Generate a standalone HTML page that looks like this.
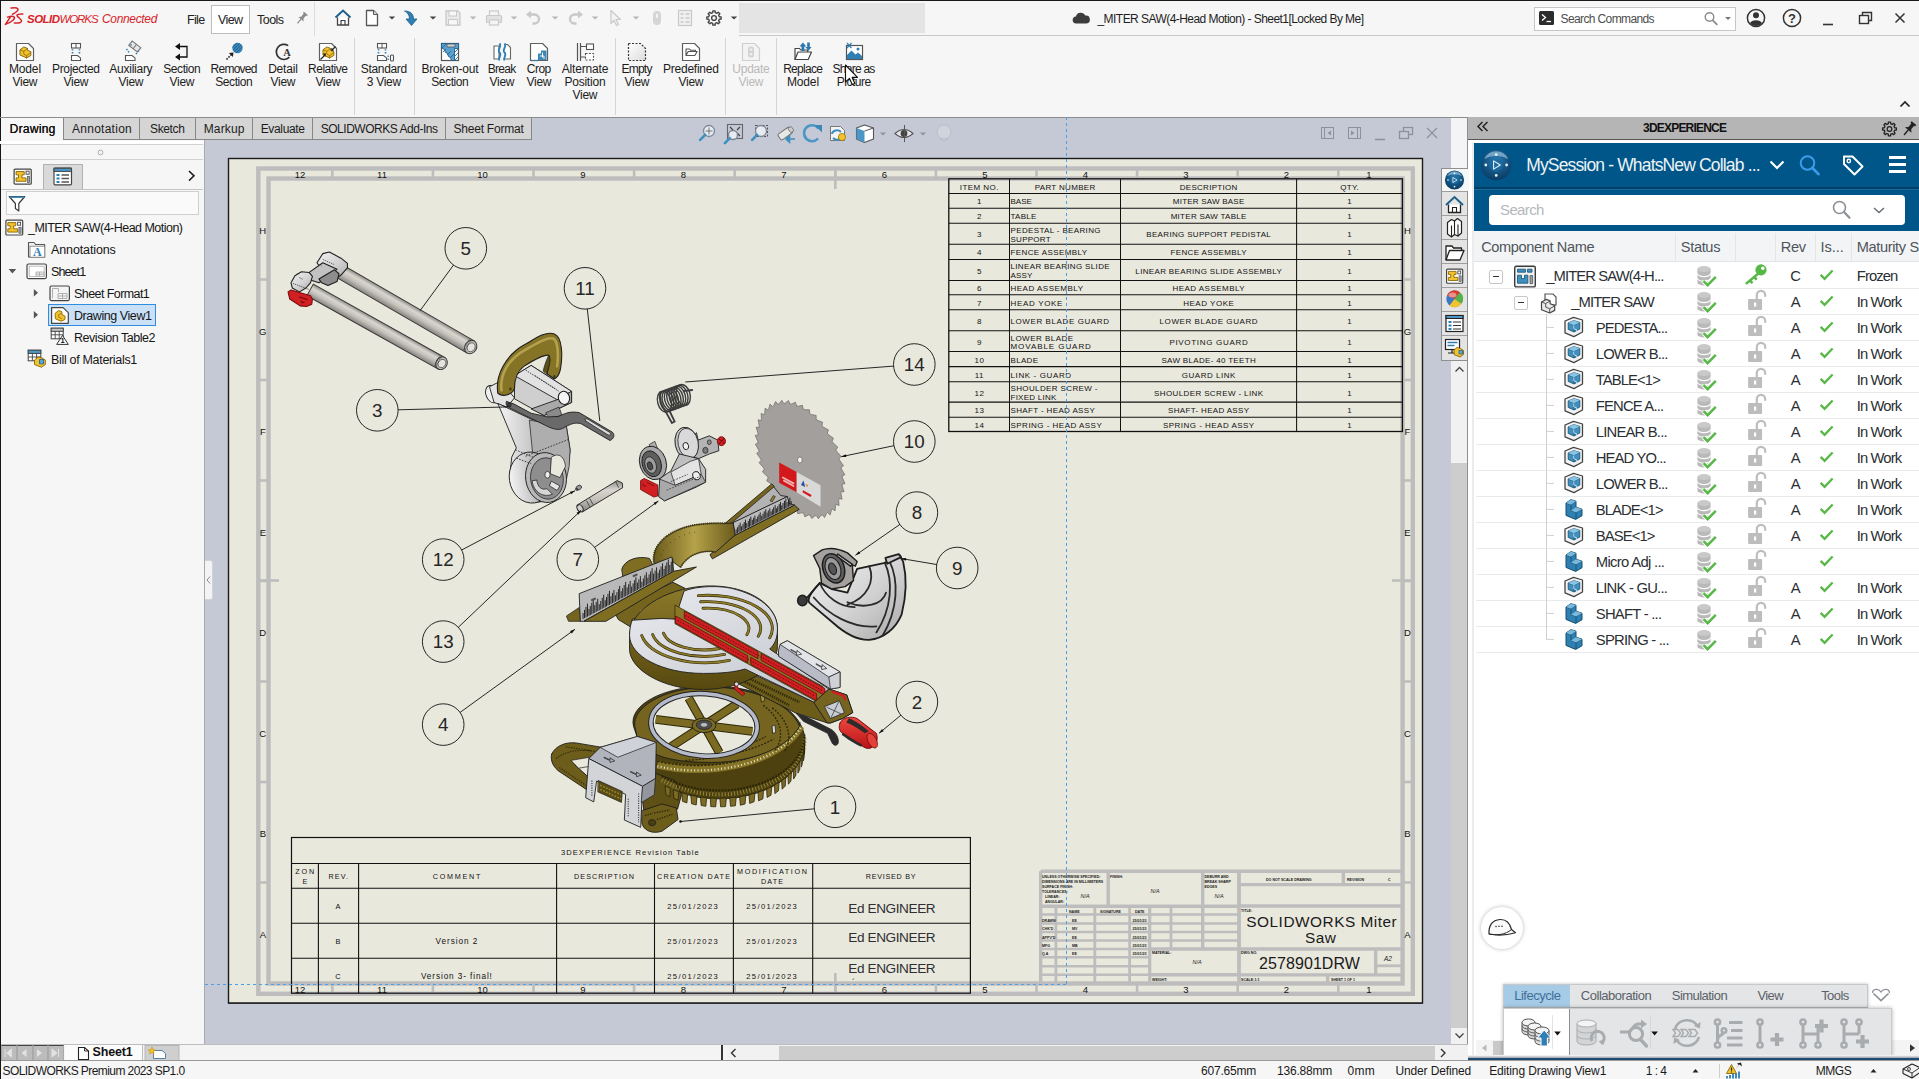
<!DOCTYPE html>
<html lang="en"><head><meta charset="utf-8"><title>SOLIDWORKS Connected - _MITER SAW(4-Head Motion) - Sheet1</title>
<style>
html,body{margin:0;padding:0;}
body{width:1919px;height:1079px;overflow:hidden;position:relative;background:#f6f6f6;font-family:"Liberation Sans",sans-serif;font-size:12px;color:#000;}
.b{position:absolute;box-sizing:border-box;display:block;}
.t{position:absolute;white-space:nowrap;}
svg{overflow:visible;}
svg text{font-family:"Liberation Sans",sans-serif;}
</style></head>
<body>
<!-- skel -->
<div class="b" style="left:205px;top:117px;width:1263px;height:928px;background:#c4c9d5;"></div>
<div class="b" style="left:0px;top:0px;width:1919px;height:117px;background:#f6f6f6;"></div>
<div class="b" style="left:0px;top:0px;width:1919px;height:1px;background:#1a1a1a;"></div>
<div class="b" style="left:0px;top:140px;width:205px;height:904px;background:#f6f6f6;border-right:1px solid #a9a9a9;"></div>
<div class="b" style="left:0px;top:1061px;width:1919px;height:18px;background:#f1f1f1;border-top:1px solid #d9d9d9;"></div>
<div class="b" style="left:0px;top:1044px;width:1468px;height:17px;background:#f1f1f1;border-top:1px solid #bdbdbd;"></div>
<div class="b" style="left:1468px;top:117px;width:451px;height:943px;background:#ffffff;"></div>
<div class="b" style="left:0px;top:0px;width:1px;height:1079px;background:#161616;"></div>
<!-- top -->
<svg class="b" style="left:0px;top:0px;" width="320" height="36" viewBox="0 0 320 36"><path transform="translate(0,0.8)" d="M11.1,7.3 C14,6.8 17,7 17.9,8.1 C18.8,9.3 16.5,11.6 12.5,13.4 M7.5,16.3 C10,15.6 13,15.2 14.2,16.2 C15.6,17.6 12.5,21 5.4,23.6 L10.4,16.2 M22.8,13.3 C20.500,13.2 17.6,13.3 17,14.4 C16.500,15.6 21.500,18.600 21.600,20.100 C21.700,22 19,22.2 14.4,22.1" fill="none" stroke="#d9232b" stroke-width="1.5" stroke-linecap="round" stroke-linejoin="round"/><text x="27.00" y="22.60" font-size="11.5" fill="#d9232b" font-weight="700" font-style="italic" letter-spacing="-0.528">SOLID</text><text x="59.50" y="22.60" font-size="11.5" fill="#d9232b" font-style="italic" letter-spacing="-1.089">WORKS</text><text x="102.00" y="22.60" font-size="12" fill="#d9232b" font-style="italic" letter-spacing="-0.338">Connected</text><g transform="translate(302,18) rotate(40)"><path d="M-2.5,-6 h5 v1.5 h-1 v4 l2,2 h-7 l2,-2 v-4 h-1 z" fill="#8a8a8a"/><path d="M0,1.5 v5.5" stroke="#8a8a8a" stroke-width="1.2"/></g></svg>
<div class="t" style="left:187.00px;top:11.60px;font-size:12.5px;line-height:16px;color:#222;letter-spacing:-0.661px;">File</div>
<div class="b" style="left:211px;top:5px;width:39px;height:29px;background:#fff;border:1px solid #bdbdbd;"></div>
<div class="t" style="left:218.00px;top:11.60px;font-size:12.5px;line-height:16px;color:#222;letter-spacing:-0.592px;">View</div>
<div class="t" style="left:257.00px;top:11.60px;font-size:12.5px;line-height:16px;color:#222;letter-spacing:-0.536px;">Tools</div>
<div class="b" style="left:314px;top:2px;width:1px;height:34px;background:#dcdcdc;"></div>
<svg class="b" style="left:0px;top:0px;" width="760" height="36" viewBox="0 0 760 36"><g transform="translate(343,18)"><path d="M-7.5,-0.5 l7.5,-7 l7.5,7" fill="none" stroke="#1f5f8b" stroke-width="2" stroke-linejoin="miter"/><path d="M-5.5,-0.5 v7.5 h11 v-7.5" fill="#fff" stroke="#444" stroke-width="1.3"/><path d="M-2,7 v-4.5 h4 v4.5" fill="none" stroke="#444" stroke-width="1.2"/></g><g transform="translate(372,18)"><path d="M-5.5,-7.5 h7 l4,4 v11 h-11 z" fill="#fff" stroke="#555" stroke-width="1.3" stroke-linejoin="round"/><path d="M1.5,-7.5 v4 h4" fill="#ddd" stroke="#555" stroke-width="1"/></g><path d="M388.8,16.4 h6.4 l-3.2,3.2 z" fill="#444"/><g transform="translate(411,18)"><path d="M-6.5,-7 c6,0 9,3 9,8 h3.5 l-5.5,6.5 l-5.5,-6.5 h3.5 c0,-4 -2,-6.5 -5,-8 z" fill="#2f7fb3" stroke="#1d5f8e" stroke-width="0.8" stroke-linejoin="round"/></g><path d="M429.8,16.4 h6.4 l-3.2,3.2 z" fill="#444"/><g transform="translate(453,18)"><path d="M-7,-7 h12 l2,2 v12 h-14 z" fill="#e9e9e9" stroke="#c9c9c9" stroke-width="1.3"/><rect x="-4" y="-7" width="7.5" height="5" fill="#f7f7f7" stroke="#c9c9c9"/><rect x="-4.5" y="1.5" width="9" height="5.5" fill="#f7f7f7" stroke="#c9c9c9"/></g><path d="M469.8,16.4 h6.4 l-3.2,3.2 z" fill="#b5b5b5"/><g transform="translate(494,18)"><rect x="-4.5" y="-7" width="9" height="5" fill="#f4f4f4" stroke="#c9c9c9" stroke-width="1.2"/><rect x="-7.5" y="-2.5" width="15" height="7" rx="1" fill="#e2e2e2" stroke="#c9c9c9" stroke-width="1.2"/><rect x="-4.5" y="2" width="9" height="5" fill="#f4f4f4" stroke="#c9c9c9" stroke-width="1.2"/></g><path d="M510.8,16.4 h6.4 l-3.2,3.2 z" fill="#b5b5b5"/><g transform="translate(534,18)"><path d="M-6,-3.5 h6.5 a4.5,4.5 0 0 1 0,9 h-2" fill="none" stroke="#c9c9c9" stroke-width="2.4"/><path d="M-8,-3.5 l5,-4 v8 z" fill="#c9c9c9"/></g><path d="M551.8,16.4 h6.4 l-3.2,3.2 z" fill="#b5b5b5"/><g transform="translate(575,18)"><path d="M6,-3.5 h-6.5 a4.5,4.5 0 0 0 0,9 h2" fill="none" stroke="#c9c9c9" stroke-width="2.4"/><path d="M8,-3.5 l-5,-4 v8 z" fill="#c9c9c9"/></g><path d="M591.8,16.4 h6.4 l-3.2,3.2 z" fill="#b5b5b5"/><g transform="translate(615,18)"><path d="M-4,-7.5 v13 l3,-3 l2.5,5 l2,-1 l-2.5,-5 h4.5 z" fill="#f2f2f2" stroke="#c9c9c9" stroke-width="1.2" stroke-linejoin="round"/></g><path d="M632.8,16.4 h6.4 l-3.2,3.2 z" fill="#b5b5b5"/><g transform="translate(657,18)"><rect x="-4" y="-7" width="8" height="14" rx="4" fill="#d5d5d5"/><rect x="-1" y="-4.5" width="2" height="4.5" rx="1" fill="#f3f3f3"/></g><g transform="translate(685,18)"><rect x="-6.5" y="-7.5" width="13" height="15" fill="#f0f0f0" stroke="#c9c9c9" stroke-width="1.2"/><path d="M-4.5,-4 h3 M-4.5,0 h3 M-4.5,4 h3 M0.5,-4 h4 M0.5,0 h4 M0.5,4 h4" stroke="#c9c9c9" stroke-width="1.6"/></g><g transform="translate(714,18)"><polygon points="7.11,-1.15 7.11,1.15 5.33,1.25 4.65,2.89 5.84,4.22 4.22,5.84 2.89,4.65 1.25,5.33 1.15,7.11 -1.15,7.11 -1.25,5.33 -2.89,4.65 -4.22,5.84 -5.84,4.22 -4.65,2.89 -5.33,1.25 -7.11,1.15 -7.11,-1.15 -5.33,-1.25 -4.65,-2.89 -5.84,-4.22 -4.22,-5.84 -2.89,-4.65 -1.25,-5.33 -1.15,-7.11 1.15,-7.11 1.25,-5.33 2.89,-4.65 4.22,-5.84 5.84,-4.22 4.65,-2.89 5.33,-1.25" fill="none" stroke="#444" stroke-width="1.4" stroke-linejoin="round"/><circle r="2.38" fill="none" stroke="#444" stroke-width="1.4"/></g><path d="M730.8,16.4 h6.4 l-3.2,3.2 z" fill="#444"/></svg>
<div class="b" style="left:739px;top:3px;width:186px;height:30px;background:#e4e4e4;"></div>
<div class="b" style="left:739px;top:35px;width:1180px;height:1px;background:#c9c9c9;"></div>
<svg class="b" style="left:1070px;top:8px;" width="24" height="20" viewBox="0 0 24 20"><path d="M5.5,15.5 a3.6,3.6 0 0 1 0.4,-7.1 a5,5 0 0 1 9.4,-0.8 a3.9,3.9 0 0 1 1.2,7.9 z" fill="#3c3c3c"/></svg>
<div class="t" style="left:1097.50px;top:11.40px;font-size:12px;line-height:16px;color:#1e1e1e;letter-spacing:-0.549px;">_MITER SAW(4-Head Motion) - Sheet1[Locked By Me]</div>
<div class="b" style="left:1534px;top:7px;width:202px;height:24px;background:#fff;border:1px solid #c6c6c6;"></div>
<svg class="b" style="left:1539px;top:11px;" width="16" height="15" viewBox="0 0 16 15"><rect x="0" y="0" width="15" height="14" rx="1.5" fill="#2c2c2c"/><path d="M3,3.5 l3.5,3 l-3.5,3" fill="none" stroke="#fff" stroke-width="1.3"/><path d="M7.5,10.5 h4.5" stroke="#fff" stroke-width="1.3"/></svg>
<div class="t" style="left:1560.50px;top:11.20px;font-size:12px;line-height:16px;color:#4d4d4d;letter-spacing:-0.614px;">Search Commands</div>
<svg class="b" style="left:1700px;top:8px;" width="40" height="22" viewBox="0 0 40 22"><circle cx="9.5" cy="9" r="4.3" fill="none" stroke="#8b8b8b" stroke-width="1.4"/><path d="M12.8,12.3 l4,4" stroke="#8b8b8b" stroke-width="1.8" stroke-linecap="round"/><path d="M25,9.0 h6 l-3,3 z" fill="#777"/></svg>
<svg class="b" style="left:1744px;top:6px;" width="170" height="26" viewBox="0 0 170 26"><circle cx="12" cy="12" r="8.6" fill="none" stroke="#333" stroke-width="1.5"/><circle cx="12" cy="9.3" r="3" fill="#333"/><path d="M6,17.2 c1,-4 11,-4 12,0 c-3,3.6 -9,3.6 -12,0z" fill="#333"/><circle cx="48" cy="12" r="8.6" fill="none" stroke="#333" stroke-width="1.5"/><text x="48.00" y="16.60" font-size="13" fill="#333" text-anchor="middle" font-weight="700">?</text><path d="M79,18.5 h10" stroke="#333" stroke-width="1.6"/><path d="M118.5,9.5 v-3 h9 v8 h-3" fill="none" stroke="#333" stroke-width="1.4"/><rect x="115.5" y="9.5" width="9" height="8" fill="none" stroke="#333" stroke-width="1.4"/><path d="M151.5,7.5 l9,9 M160.5,7.5 l-9,9" stroke="#333" stroke-width="1.5"/></svg>
<div class="b" style="left:354px;top:38px;width:1px;height:77px;background:#d4d4d4;"></div>
<div class="b" style="left:414px;top:38px;width:1px;height:77px;background:#d4d4d4;"></div>
<div class="b" style="left:615px;top:38px;width:1px;height:77px;background:#d4d4d4;"></div>
<div class="b" style="left:725px;top:38px;width:1px;height:77px;background:#d4d4d4;"></div>
<div class="b" style="left:776px;top:38px;width:1px;height:77px;background:#d4d4d4;"></div>
<svg class="b" style="left:0px;top:0px;" width="900" height="116" viewBox="0 0 900 116"><g transform="translate(13,40)"><path d="M3.5,3.5 h12 l5,5 v12 h-17 z" fill="#fff" stroke="#5f5f5f" stroke-width="1.2" stroke-linejoin="round"/><g transform="translate(6,6) scale(0.95)"><path d="M1,4 l4,-3 l4,1.5 v2 l3.5,1.5 v4 l-4.5,2.5 l-7,-3 z" fill="#f2c12e" stroke="#7a5a00" stroke-width="0.9" stroke-linejoin="round"/><path d="M1,4 l4,1.6 l4,-3 M5,5.6 v3 l3,1.5 l4.5,-3 M8,10 v3.4" fill="none" stroke="#7a5a00" stroke-width="0.7"/></g></g><g transform="translate(64,40)"><rect x="7.5" y="3.5" width="9" height="4.5" fill="#fff" stroke="#555" stroke-width="1.1"/><path d="M12,3.5v4.5" stroke="#555" stroke-width="1"/><path d="M8.5,9.2v4.6 M15.5,9.2v4.6" stroke="#2f7fb3" stroke-width="1.6" stroke-dasharray="1.4,1.4"/><path d="M7.5,15.5 h6 l3,2.4 v2.6 h-9 z" fill="#fff" stroke="#555" stroke-width="1.1"/></g><g transform="translate(119,40)"><g transform="rotate(38 14 8)"><rect x="9" y="3" width="11" height="5.5" fill="#e6e6e6" stroke="#777" stroke-width="1.1"/><path d="M14.5,3v5.5" stroke="#777"/></g><path d="M7.5,9 l3,4 M12.5,5.5 l-1.3,-1.6 M17,14 l2.5,-3" stroke="#2f7fb3" stroke-width="1.6" stroke-dasharray="1.4,1.4"/><path d="M6.5,15.5 h6.5 l3,2.4 v2.6 h-9.5 z" fill="#fff" stroke="#555" stroke-width="1.1"/></g><g transform="translate(170,40)"><path d="M9,6.5 h8 v10.5 h-8" fill="none" stroke="#111" stroke-width="1.3"/><path d="M5,6.5 l5,-3.6 v7.2 z M5,17 l5,-3.6 v7.2 z" fill="#111"/></g><g transform="translate(222,40)"><defs><clipPath id="rsc"><circle cx="15.5" cy="8" r="5.2"/></clipPath></defs><circle cx="15.5" cy="8" r="5.2" fill="#3d86b8"/><g clip-path="url(#rsc)" stroke="#1d5f8e" stroke-width="0.9"><path d="M8,10 l10,-10 M8,13 l13,-13 M10,14 l12,-12 M13,14 l10,-10 M8,7 l7,-7"/></g><path d="M4.5,19.5 l5,-5" stroke="#222" stroke-width="1.6" stroke-dasharray="1.6,1.2"/><path d="M11.5,12.5 l-4.6,0.6 l4,4 z" fill="#222"/></g><g transform="translate(271,40)"><path d="M17.2,5.6 a7.6,7.6 0 1 0 1.2,11.6" fill="none" stroke="#333" stroke-width="1.7"/><text x="12.2" y="16" font-size="10.5" font-weight="700" fill="#333" style="font-family:'Liberation Serif',serif">A</text></g><g transform="translate(316,40)"><path d="M3.5,3.5 h12 l5,5 v12 h-17 z" fill="#fff" stroke="#5f5f5f" stroke-width="1.2" stroke-linejoin="round"/><g transform="translate(6,6) scale(0.95)"><path d="M1,4 l4,-3 l4,1.5 v2 l3.5,1.5 v4 l-4.5,2.5 l-7,-3 z" fill="#f2c12e" stroke="#7a5a00" stroke-width="0.9" stroke-linejoin="round"/><path d="M1,4 l4,1.6 l4,-3 M5,5.6 v3 l3,1.5 l4.5,-3 M8,10 v3.4" fill="none" stroke="#7a5a00" stroke-width="0.7"/></g><path d="M4.5,19.5 l4.5,-4.5 M19.5,6.5 l-3.5,3.5" stroke="#222" stroke-width="1.2"/><path d="M10,13.2 l-3.2,0.6 l2.7,2.7 z M15,11 l3.2,-0.6 l-2.7,-2.7 z" fill="#222"/></g><g transform="translate(372,40)"><rect x="5.5" y="3.5" width="9" height="4.5" fill="#fff" stroke="#555" stroke-width="1.1"/><path d="M10,3.5v4.5" stroke="#555"/><path d="M6.5,9.2v4.4 M13.5,9.2v4.4" stroke="#2f7fb3" stroke-width="1.6" stroke-dasharray="1.4,1.4"/><path d="M5.5,15.5 h6 l3,2.4 v2.6 h-9 z" fill="#fff" stroke="#555" stroke-width="1.1"/><path d="M15.5,16.2h2.4 M15.5,19.2h2.4" stroke="#2f7fb3" stroke-width="1.6" stroke-dasharray="1.3,1.1"/><rect x="18.5" y="15" width="3" height="6" rx="1" fill="#fff" stroke="#555" stroke-width="1.1"/></g><g transform="translate(438,40)"><rect x="3.5" y="3.5" width="17" height="17" fill="#fff" stroke="#555" stroke-width="1.2"/><path d="M3.5,3.5 h17 v5 h-4 v12 h-3 l-1,-3 l-2,-1 l-1,-3 l-2,-1 l-1,-3 l-2,-1 l-1,-2 z" fill="#58a0cf" stroke="#1d5f8e" stroke-width="0.9"/><path d="M9,4 h8 v3 h-8z" fill="#c9d3da" stroke="#555" stroke-width="0.8"/><path d="M4,8 l4,-4 M5,12 l3,-3 M9,15 l4,-4 M12,18 l4,-4 M17,12 l3,-3 M17,16 l3,-3 M17,20 l3,-3" stroke="#1d5f8e" stroke-width="0.8"/></g><g transform="translate(490,40)"><path d="M4,6 h5 v13 h-5 z M15,4.5 h2.5 l3,3 v11.5 h-5.5" fill="#fff" stroke="#666" stroke-width="1.1"/><path d="M9.5,3.5 c3,3 -3,6 0,9 c3,3 -2,5 0,8 M14.5,3.5 c3,3 -3,6 0,9 c3,3 -2,5 0,8" fill="none" stroke="#2f7fb3" stroke-width="1.8"/></g><g transform="translate(527,40)"><path d="M3.5,3.5 h12 l5,5 v12 h-17 z" fill="#fff" stroke="#5f5f5f" stroke-width="1.2" stroke-linejoin="round"/><path d="M4,20.5h7" stroke="#2f7fb3" stroke-width="1.6" stroke-dasharray="1.6,1.2"/><path d="M11,20 v-6.5 h3 v-3 h5.5 v9.5 z" fill="#3d86b8"/><path d="M13,16h4v3 M15.5,12.5v5" stroke="#fff" stroke-width="0.9" fill="none"/></g><g transform="translate(573,40)"><path d="M4.5,3 v18 M7.5,3 v18" stroke="#555" stroke-width="1.2"/><path d="M7.5,6.5 h6 M7.5,17 h5" stroke="#555" stroke-width="1.2"/><rect x="13.5" y="4" width="7" height="5.5" fill="#fff" stroke="#555" stroke-width="1.1"/><rect x="12.5" y="13.5" width="8" height="6.5" fill="#fff" stroke="#555" stroke-width="1.1" stroke-dasharray="2,1.4"/></g><g transform="translate(625,40)"><defs><linearGradient id="evg" x1="0" y1="0" x2="1" y2="1"><stop offset="0" stop-color="#fff"/><stop offset="1" stop-color="#dcdcdc"/></linearGradient></defs><path d="M3.5,3.5 h12 l5,5 v12 h-17 z" fill="url(#evg)" stroke="#333" stroke-width="1.2" stroke-dasharray="2,1.5" stroke-linejoin="round"/></g><g transform="translate(679,40)"><path d="M3.5,3.5 h12 l5,5 v12 h-17 z" fill="#fff" stroke="#5f5f5f" stroke-width="1.2" stroke-linejoin="round"/><path d="M7,15.5 v-6.5 h3.5 l1,1.2 h5 v1.3 M7,15.5 l2.2,-4 h9 l-2.4,4 z" fill="#fff" stroke="#555" stroke-width="1.1" stroke-linejoin="round"/></g><g transform="translate(739,40)"><path d="M3.5,3.5 h12 l5,5 v12 h-17 z" fill="#f3f3f3" stroke="#cfcfcf" stroke-width="1.2" stroke-linejoin="round"/><rect x="9" y="6.5" width="6" height="11" rx="2.5" fill="#d2d2d2"/><circle cx="12" cy="9.6" r="1.4" fill="#eee"/><circle cx="12" cy="14.2" r="1.4" fill="#eee"/></g><g transform="translate(791,40)"><path d="M4,19.5 v-11 h4.5 l1.2,1.5 h7 v2" fill="#fff" stroke="#444" stroke-width="1.2" stroke-linejoin="round"/><path d="M4,19.5 l3,-7.5 h13.5 l-3.3,7.5 z" fill="#fff" stroke="#444" stroke-width="1.2" stroke-linejoin="round"/><path d="M10.5,11 v-4.5 h-2 l3.4,-4 l3.4,4 h-2 v4.5 z" fill="#2a78ad"/><path d="M16.2,2.5 h2.6 v4.5 h1.8 l-3.1,3.8 l-3.1,-3.8 h1.8 z" fill="#2a78ad"/></g><g transform="translate(842,40)"><rect x="4.5" y="5.5" width="16" height="14" fill="#fff" stroke="#555" stroke-width="1.2"/><path d="M5,19 v-4 l4.5,-4.5 l4,4 l2.5,-2 l4,3.5 v3 z" fill="#2f7fb3"/><circle cx="16" cy="9" r="1.5" fill="#2f7fb3"/><path d="M5,3 l4.5,5 M9.5,3 l-4.5,5" stroke="#2f7fb3" stroke-width="1.2"/></g></svg>
<div class="t" style="left:8.93px;top:61.00px;font-size:12px;line-height:16px;color:#1c1c1c;letter-spacing:-0.137px;">Model</div>
<div class="t" style="left:12.59px;top:74.00px;font-size:12px;line-height:16px;color:#1c1c1c;letter-spacing:-0.324px;">View</div>
<div class="t" style="left:52.07px;top:61.00px;font-size:12px;line-height:16px;color:#1c1c1c;letter-spacing:-0.355px;">Projected</div>
<div class="t" style="left:63.59px;top:74.00px;font-size:12px;line-height:16px;color:#1c1c1c;letter-spacing:-0.324px;">View</div>
<div class="t" style="left:109.37px;top:61.00px;font-size:12px;line-height:16px;color:#1c1c1c;letter-spacing:-0.261px;">Auxiliary</div>
<div class="t" style="left:118.59px;top:74.00px;font-size:12px;line-height:16px;color:#1c1c1c;letter-spacing:-0.324px;">View</div>
<div class="t" style="left:163.28px;top:61.00px;font-size:12px;line-height:16px;color:#1c1c1c;letter-spacing:-0.432px;">Section</div>
<div class="t" style="left:169.59px;top:74.00px;font-size:12px;line-height:16px;color:#1c1c1c;letter-spacing:-0.324px;">View</div>
<div class="t" style="left:210.62px;top:61.00px;font-size:12px;line-height:16px;color:#1c1c1c;letter-spacing:-0.766px;">Removed</div>
<div class="t" style="left:215.28px;top:74.00px;font-size:12px;line-height:16px;color:#1c1c1c;letter-spacing:-0.432px;">Section</div>
<div class="t" style="left:268.15px;top:61.00px;font-size:12px;line-height:16px;color:#1c1c1c;letter-spacing:-0.197px;">Detail</div>
<div class="t" style="left:270.59px;top:74.00px;font-size:12px;line-height:16px;color:#1c1c1c;letter-spacing:-0.324px;">View</div>
<div class="t" style="left:308.01px;top:61.00px;font-size:12px;line-height:16px;color:#1c1c1c;letter-spacing:-0.482px;">Relative</div>
<div class="t" style="left:315.59px;top:74.00px;font-size:12px;line-height:16px;color:#1c1c1c;letter-spacing:-0.324px;">View</div>
<div class="t" style="left:360.83px;top:61.00px;font-size:12px;line-height:16px;color:#1c1c1c;letter-spacing:-0.338px;">Standard</div>
<div class="t" style="left:366.85px;top:74.00px;font-size:12px;line-height:16px;color:#1c1c1c;letter-spacing:-0.300px;">3 View</div>
<div class="t" style="left:421.41px;top:61.00px;font-size:12px;line-height:16px;color:#1c1c1c;letter-spacing:-0.170px;">Broken-out</div>
<div class="t" style="left:431.28px;top:74.00px;font-size:12px;line-height:16px;color:#1c1c1c;letter-spacing:-0.432px;">Section</div>
<div class="t" style="left:487.87px;top:61.00px;font-size:12px;line-height:16px;color:#1c1c1c;letter-spacing:-0.770px;">Break</div>
<div class="t" style="left:489.59px;top:74.00px;font-size:12px;line-height:16px;color:#1c1c1c;letter-spacing:-0.324px;">View</div>
<div class="t" style="left:526.75px;top:61.00px;font-size:12px;line-height:16px;color:#1c1c1c;letter-spacing:-0.503px;">Crop</div>
<div class="t" style="left:526.59px;top:74.00px;font-size:12px;line-height:16px;color:#1c1c1c;letter-spacing:-0.324px;">View</div>
<div class="t" style="left:561.66px;top:61.00px;font-size:12px;line-height:16px;color:#1c1c1c;letter-spacing:-0.170px;">Alternate</div>
<div class="t" style="left:564.39px;top:74.00px;font-size:12px;line-height:16px;color:#1c1c1c;letter-spacing:-0.212px;">Position</div>
<div class="t" style="left:572.59px;top:87.00px;font-size:12px;line-height:16px;color:#1c1c1c;letter-spacing:-0.324px;">View</div>
<div class="t" style="left:621.60px;top:61.00px;font-size:12px;line-height:16px;color:#1c1c1c;letter-spacing:-0.802px;">Empty</div>
<div class="t" style="left:624.59px;top:74.00px;font-size:12px;line-height:16px;color:#1c1c1c;letter-spacing:-0.324px;">View</div>
<div class="t" style="left:663.12px;top:61.00px;font-size:12px;line-height:16px;color:#1c1c1c;letter-spacing:-0.255px;">Predefined</div>
<div class="t" style="left:678.59px;top:74.00px;font-size:12px;line-height:16px;color:#1c1c1c;letter-spacing:-0.324px;">View</div>
<div class="t" style="left:732.36px;top:61.00px;font-size:12px;line-height:16px;color:#b9b9b9;letter-spacing:-0.283px;">Update</div>
<div class="t" style="left:738.59px;top:74.00px;font-size:12px;line-height:16px;color:#b9b9b9;letter-spacing:-0.324px;">View</div>
<div class="t" style="left:783.14px;top:61.00px;font-size:12px;line-height:16px;color:#1c1c1c;letter-spacing:-0.718px;">Replace</div>
<div class="t" style="left:786.93px;top:74.00px;font-size:12px;line-height:16px;color:#1c1c1c;letter-spacing:-0.137px;">Model</div>
<div class="t" style="left:832.62px;top:61.00px;font-size:12px;line-height:16px;color:#1c1c1c;letter-spacing:-0.754px;">Share as</div>
<div class="t" style="left:836.76px;top:74.00px;font-size:12px;line-height:16px;color:#1c1c1c;letter-spacing:-0.478px;">Picture</div>
<svg class="b" style="left:840px;top:60px;" width="20" height="28" viewBox="0 0 20 28"><path d="M5.5,5 v17 l4,-3.6 l2.8,6.2 l2.6,-1.2 l-2.8,-6 h5.4 z" fill="#fff" stroke="#111" stroke-width="1.1" stroke-linejoin="round"/></svg>
<svg class="b" style="left:1897px;top:98px;" width="16" height="12" viewBox="0 0 16 12"><path d="M3.5,8.5 l4.5,-4.5 l4.5,4.5" fill="none" stroke="#222" stroke-width="1.7"/></svg>
<div class="b" style="left:0px;top:117px;width:1919px;height:1px;background:#8c8c8c;"></div>
<div class="b" style="left:1px;top:118px;width:62px;height:23px;background:#f6f6f6;"></div>
<div class="b" style="left:63px;top:118px;width:77px;height:22px;background:#d5d5d5;border:1px solid #878787;border-top:none;"></div>
<div class="t" style="left:72.00px;top:121.00px;font-size:12px;line-height:16px;color:#1c1c1c;letter-spacing:0.262px;">Annotation</div>
<div class="b" style="left:139px;top:118px;width:57px;height:22px;background:#d5d5d5;border:1px solid #878787;border-top:none;"></div>
<div class="t" style="left:150.00px;top:121.00px;font-size:12px;line-height:16px;color:#1c1c1c;letter-spacing:-0.364px;">Sketch</div>
<div class="b" style="left:195px;top:118px;width:58px;height:22px;background:#d5d5d5;border:1px solid #878787;border-top:none;"></div>
<div class="t" style="left:203.70px;top:121.00px;font-size:12px;line-height:16px;color:#1c1c1c;letter-spacing:0.164px;">Markup</div>
<div class="b" style="left:252px;top:118px;width:61px;height:22px;background:#d5d5d5;border:1px solid #878787;border-top:none;"></div>
<div class="t" style="left:260.70px;top:121.00px;font-size:12px;line-height:16px;color:#1c1c1c;letter-spacing:-0.338px;">Evaluate</div>
<div class="b" style="left:312px;top:118px;width:134px;height:22px;background:#d5d5d5;border:1px solid #878787;border-top:none;"></div>
<div class="t" style="left:320.70px;top:121.00px;font-size:12px;line-height:16px;color:#1c1c1c;letter-spacing:-0.476px;">SOLIDWORKS Add-Ins</div>
<div class="b" style="left:445px;top:118px;width:87px;height:22px;background:#d5d5d5;border:1px solid #878787;border-top:none;"></div>
<div class="t" style="left:453.50px;top:121.00px;font-size:12px;line-height:16px;color:#1c1c1c;letter-spacing:-0.225px;">Sheet Format</div>
<div class="t" style="left:9.50px;top:121.00px;font-size:12px;line-height:16px;color:#111;letter-spacing:0.283px;text-shadow:0.3px 0 0 #111;">Drawing</div>
<svg class="b" style="left:0px;top:1px;" width="1468" height="145" viewBox="0 0 1468 145"><circle cx="709" cy="130" r="5.5" fill="#e6ecf2" stroke="#7d8794" stroke-width="1.3"/><path d="M705.15,133.85 l-5,5" stroke="#3f8fbe" stroke-width="2.6" stroke-linecap="round"/><path d="M709,126.5v7 M705.5,130h7" stroke="#666" stroke-width="0.9"/><rect x="727.5" y="123.5" width="15" height="14" fill="none" stroke="#666" stroke-width="1.1"/><path d="M730,126 l3,3 M740,126 l-3,3 M740,135 l-3,-3" stroke="#444" stroke-width="1.2"/><circle cx="733" cy="134" r="4.5" fill="#e6ecf2" stroke="#7d8794" stroke-width="1.3"/><path d="M729.85,137.15 l-5,5" stroke="#3f8fbe" stroke-width="2.6" stroke-linecap="round"/><rect x="755.5" y="124.5" width="12" height="11" fill="none" stroke="#555" stroke-width="1.1" stroke-dasharray="2,1.5"/><circle cx="761" cy="130" r="5.5" fill="#e6ecf2" stroke="#7d8794" stroke-width="1.3"/><path d="M757.15,133.85 l-5,5" stroke="#3f8fbe" stroke-width="2.6" stroke-linecap="round"/><g transform="rotate(-35 786 132)"><rect x="778" y="128.5" width="14" height="7" rx="1.5" fill="#e8e8e8" stroke="#777" stroke-width="1.1"/><rect x="790" y="129.5" width="4" height="5" fill="#ccc" stroke="#777" stroke-width="0.8"/></g><path d="M786,138 h9 M786,138 l3.5,-3.2 v6.4 z" stroke="#3f8fbe" stroke-width="1.6" fill="#3f8fbe"/><path d="M818,137.5 a8,8 0 1 1 0.5,-10" fill="none" stroke="#4a97c6" stroke-width="2.6"/><path d="M814.5,124 h7.5 v7.5 z" fill="#3a86b6"/><path d="M830.5,125.5 h10 l4,4 v10 h-14 z" fill="#f4f4f4" stroke="#777" stroke-width="1"/><path d="M832,133 a5,4 0 0 1 9,-2 M842,135 a5,4 0 0 1 -9,2" fill="none" stroke="#3f8fbe" stroke-width="2"/><circle cx="842" cy="136" r="3.6" fill="#f2c12e" stroke="#a07800" stroke-width="0.8"/><path d="M856.5,127 l8,-3 l9,3 v11 l-9,3.5 l-8,-3.5 z" fill="#fff" stroke="#555" stroke-width="1.1" stroke-linejoin="round"/><path d="M856.5,127 l8,3 v11.5 l-8,-3.5 z" fill="#4a97c6"/><path d="M864.5,130 l9,-3" stroke="#555" stroke-width="1"/><path d="M880,131.5 h6 l-3,3 z" fill="#8d929b"/><path d="M895,132.5 q9,-8 18,0 q-9,8 -18,0 z" fill="#e3e6ea" stroke="#555" stroke-width="1.1"/><circle cx="904" cy="132.5" r="3.4" fill="#444"/><path d="M904.5,124 v17" stroke="#555" stroke-width="1"/><path d="M920,131.5 h6 l-3,3 z" fill="#8d929b"/><circle cx="944" cy="131" r="7" fill="#d0d4dc" stroke="#b9bec8" stroke-width="1"/><path d="M939,138 q5,3 10,0" stroke="#b9bec8" fill="none"/><rect x="1321.5" y="126.5" width="12" height="11" fill="none" stroke="#8c929c"/><path d="M1324.5,127v10" stroke="#8c929c"/><path d="M1331,129.5 v5 l-3.5,-2.5 z" fill="#8c929c"/><rect x="1348.5" y="126.5" width="12" height="11" fill="none" stroke="#8c929c"/><path d="M1357.5,127v10" stroke="#8c929c"/><path d="M1351,129.5 v5 l3.5,-2.5 z" fill="#8c929c"/><path d="M1375,138.5 h10" stroke="#8c929c" stroke-width="1.6"/><rect x="1403.5" y="126.5" width="9" height="7" fill="none" stroke="#8c929c" stroke-width="1.3"/><rect x="1399.5" y="130.5" width="9" height="7" fill="#c4c9d5" stroke="#8c929c" stroke-width="1.3"/><path d="M1427,127 l10,10 M1437,127 l-10,10" stroke="#8c929c" stroke-width="1.3"/></svg>
<!-- left -->
<div class="b" style="left:0px;top:141px;width:204px;height:3px;background:#ffffff;"></div>
<div class="b" style="left:1px;top:144px;width:202px;height:1px;background:#d2d2d2;"></div>
<div class="b" style="left:1px;top:159px;width:202px;height:1px;background:#d2d2d2;"></div>
<svg class="b" style="left:96px;top:148px;" width="9" height="9" viewBox="0 0 9 9"><circle cx="4.5" cy="4.5" r="2.4" fill="#f2f2f2" stroke="#a9a9a9" stroke-width="0.9"/></svg>
<div class="b" style="left:43px;top:164px;width:40px;height:26px;background:#d9d9d9;border:1px solid #b1b1b1;border-bottom:none;"></div>
<div class="b" style="left:1px;top:189px;width:202px;height:1px;background:#c4c4c4;"></div>
<svg class="b" style="left:13px;top:168px;" width="20" height="18" viewBox="0 0 20 18"><g transform="translate(0.5,0.5) scale(1.02)"><rect x="0.6" y="0.6" width="16.8" height="14.8" rx="1" fill="#fff" stroke="#444" stroke-width="1.2"/><path d="M2.5,3 h8 v3.2 h-2.2 v3 h4 v3.3 h-9.8 v-3.3 h2.4 v-3 h-2.4 z" fill="#f2c12e" stroke="#8a6500" stroke-width="0.9"/><rect x="12.3" y="2.6" width="3" height="3" fill="#fff" stroke="#444" stroke-width="0.9"/><rect x="13.6" y="7.6" width="2.2" height="6" fill="#9aa3ad" stroke="#555" stroke-width="0.7"/></g></svg>
<svg class="b" style="left:53px;top:167px;" width="20" height="20" viewBox="0 0 20 20"><rect x="1" y="1.2" width="17.5" height="16.6" rx="1" fill="#fff" stroke="#444" stroke-width="1.2"/><rect x="1" y="1.2" width="17.5" height="3.2" fill="#4a97c6" stroke="#444" stroke-width="1"/><path d="M3.5,8 h3 M3.5,11.5 h3 M3.5,15 h3" stroke="#2f7fb3" stroke-width="2"/><path d="M8.5,8 h7.5 M8.5,11.5 h7.5 M8.5,15 h7.5" stroke="#555" stroke-width="1.3"/></svg>
<svg class="b" style="left:186px;top:169px;" width="12" height="14" viewBox="0 0 12 14"><path d="M3,2 l5,4.8 l-5,4.8" fill="none" stroke="#222" stroke-width="1.6"/></svg>
<div class="b" style="left:6px;top:191px;width:193px;height:24px;background:#fafafa;border:1px solid #cfcfcf;"></div>
<svg class="b" style="left:8px;top:194px;" width="20" height="20" viewBox="0 0 20 20"><path d="M1.2,2.5 h15.6 l-6,7 v7.5 l-3.4,-2.4 v-5.1 z" fill="#fff" stroke="#3a3a3a" stroke-width="1.2" stroke-linejoin="round"/><path d="M1.2,2.5 h15.6 l-1.2,1.6 h-13.2 z" fill="#3d8fc4"/></svg>
<svg class="b" style="left:5px;top:219px;" width="20" height="18" viewBox="0 0 20 18"><g transform="translate(0.3,0.6) scale(1.0)"><rect x="0.6" y="0.6" width="16.8" height="14.8" rx="1" fill="#fff" stroke="#444" stroke-width="1.2"/><path d="M2.5,3 h8 v3.2 h-2.2 v3 h4 v3.3 h-9.8 v-3.3 h2.4 v-3 h-2.4 z" fill="#f2c12e" stroke="#8a6500" stroke-width="0.9"/><rect x="12.3" y="2.6" width="3" height="3" fill="#fff" stroke="#444" stroke-width="0.9"/><rect x="13.6" y="7.6" width="2.2" height="6" fill="#9aa3ad" stroke="#555" stroke-width="0.7"/></g></svg>
<div class="t" style="left:28.00px;top:220.00px;font-size:12.5px;line-height:16px;color:#151515;letter-spacing:-0.526px;">_MITER SAW(4-Head Motion)</div>
<svg class="b" style="left:27px;top:240px;" width="20" height="19" viewBox="0 0 20 19"><path d="M1.5,17 v-14.5 h5.5 l1.6,2 h9 v12.5 z" fill="#f1f1f1" stroke="#555" stroke-width="1.1" stroke-linejoin="round"/><rect x="3" y="6.2" width="14.8" height="11" fill="#fff" stroke="#777" stroke-width="0.8"/><text x="10.40" y="16.20" font-size="12" fill="#2f7fb3" text-anchor="middle" font-weight="700" style="font-family:'Liberation Serif',serif">A</text></svg>
<div class="t" style="left:51.00px;top:242.00px;font-size:12.5px;line-height:16px;color:#151515;letter-spacing:-0.116px;">Annotations</div>
<svg class="b" style="left:7px;top:266px;" width="12" height="10" viewBox="0 0 12 10"><path d="M1.6,3 h7.6 l-3.8,4.4 z" fill="#555"/></svg>
<svg class="b" style="left:26px;top:263px;" width="22" height="17" viewBox="0 0 22 17"><rect x="1" y="1" width="19.4" height="14.6" rx="1.5" fill="#fff" stroke="#444" stroke-width="1.2"/><rect x="3.2" y="3.2" width="15" height="10.2" fill="none" stroke="#b5b5b5" stroke-width="0.9"/><path d="M10,9 h8 v4.4 h-8 z M13.5,9 v4.4 M10,11.2 h8" fill="#eee" stroke="#a8a8a8" stroke-width="0.8"/></svg>
<div class="t" style="left:51.00px;top:264.00px;font-size:12.5px;line-height:16px;color:#151515;letter-spacing:-0.900px;">Sheet1</div>
<svg class="b" style="left:32px;top:288px;" width="8" height="10" viewBox="0 0 8 10"><path d="M1.8,1 l4.2,3.8 l-4.2,3.8 z" fill="#555"/></svg>
<svg class="b" style="left:49px;top:285px;" width="22" height="17" viewBox="0 0 22 17"><rect x="1" y="1" width="19.4" height="14.6" rx="1.5" fill="#f4f4f4" stroke="#444" stroke-width="1.2"/><path d="M3.5,13.5 v-10 h6 v3.5 M9,13.5 v-5 h9 v5 z M13.5,8.5 v5 M9,11 h9" fill="none" stroke="#a8a8a8" stroke-width="0.9"/></svg>
<div class="t" style="left:74.00px;top:286.00px;font-size:12.5px;line-height:16px;color:#151515;letter-spacing:-0.572px;">Sheet Format1</div>
<svg class="b" style="left:32px;top:310px;" width="8" height="10" viewBox="0 0 8 10"><path d="M1.8,1 l4.2,3.8 l-4.2,3.8 z" fill="#555"/></svg>
<div class="b" style="left:48px;top:304px;width:108px;height:22px;background:#c9e0f7;border:1px solid #2f8de0;"></div>
<svg class="b" style="left:50px;top:306px;" width="20" height="19" viewBox="0 0 20 19"><path d="M1.6,1.6 h11.5 l5.2,5 v10.8 h-16.7 z" fill="#fff" stroke="#444" stroke-width="1.2" stroke-linejoin="round"/><path d="M5,7.5 l3.5,-3 l3.3,1.2 l0.4,3 l3,1.6 l-0.4,3.4 l-4,1.5 l-5.4,-2.4 z" fill="#f2c12e" stroke="#8a6500" stroke-width="0.9" stroke-linejoin="round"/><path d="M8.6,8.6 l3.2,-1 M8.6,8.6 v2.6 l3.2,1.3" fill="none" stroke="#8a6500" stroke-width="0.7"/></svg>
<div class="t" style="left:74.00px;top:308.00px;font-size:12.5px;line-height:16px;color:#151515;letter-spacing:-0.434px;">Drawing View1</div>
<svg class="b" style="left:50px;top:327px;" width="20" height="19" viewBox="0 0 20 19"><rect x="1.2" y="1.2" width="12" height="10.6" fill="#fff" stroke="#444" stroke-width="1"/><path d="M1.2,4.2 h12 M1.2,7.8 h12 M5.2,1.2 v10.6 M9.2,1.2 v10.6" stroke="#444" stroke-width="0.9"/><rect x="1.2" y="1.2" width="12" height="3" fill="#c9c9c9" stroke="#444" stroke-width="0.9"/><path d="M12.5,8.4 l5.8,9 h-11.6 z" fill="#fff" stroke="#333" stroke-width="1"/><text x="12.50" y="16.40" font-size="7.5" fill="#111" text-anchor="middle" font-weight="700">1</text></svg>
<div class="t" style="left:74.00px;top:330.00px;font-size:12.5px;line-height:16px;color:#151515;letter-spacing:-0.468px;">Revision Table2</div>
<svg class="b" style="left:27px;top:349px;" width="20" height="20" viewBox="0 0 20 20"><rect x="1.2" y="1.2" width="12.6" height="10.6" fill="#fff" stroke="#444" stroke-width="1"/><path d="M1.2,4.4 h12.6 M1.2,8 h12.6 M5.4,1.2 v10.6 M9.6,1.2 v10.6" stroke="#444" stroke-width="0.9"/><rect x="1.2" y="1.2" width="12.6" height="3.2" fill="#4a97c6" stroke="#444" stroke-width="0.9"/><path d="M7.5,11 l3.6,-3 l4,1 l3.2,2 v4.6 l-4,2.6 l-6.8,-2.6 z" fill="#f2c12e" stroke="#8a6500" stroke-width="0.9" stroke-linejoin="round"/><path d="M12.5,10.5 h4 v4.4 h-4 z" fill="#5aa6d4" stroke="#1d5f8e" stroke-width="0.8"/></svg>
<div class="t" style="left:51.00px;top:352.00px;font-size:12.5px;line-height:16px;color:#151515;letter-spacing:-0.317px;">Bill of Materials1</div>
<div class="b" style="left:205px;top:560px;width:8px;height:40px;background:#f3f3f3;border:1px solid #d0d3da;border-left:none;border-radius:0 3px 3px 0;"></div>
<svg class="b" style="left:205px;top:575px;" width="8" height="10" viewBox="0 0 8 10"><path d="M5,1.5 l-3,3.5 l3,3.5" fill="none" stroke="#8a8a8a" stroke-width="1"/></svg>
<!-- draw -->
<svg class="b" style="left:0px;top:0px;" width="1919" height="1079" viewBox="0 0 1919 1079"><rect x="228.5" y="158.5" width="1194" height="844.5" fill="#e9e8dd" stroke="#1b1b1b" stroke-width="1.4"/><path d="M228,1003.3 h1195" stroke="#1b1b1b" stroke-width="0.8"/><rect x="258.3" y="168.5" width="1154.5" height="825.3" fill="none" stroke="#bdbdbd" stroke-width="4.4"/><rect x="268.5" y="178.5" width="1134.1" height="805" fill="none" stroke="#bdbdbd" stroke-width="4.4"/><path d="M332.3,170 L332.3,177" stroke="#bdbdbd" stroke-width="2.6" fill="none"/><path d="M332.3,985 L332.3,992" stroke="#bdbdbd" stroke-width="2.6" fill="none"/><path d="M432.9,170 L432.9,177" stroke="#bdbdbd" stroke-width="2.6" fill="none"/><path d="M432.9,985 L432.9,992" stroke="#bdbdbd" stroke-width="2.6" fill="none"/><path d="M533.5,170 L533.5,177" stroke="#bdbdbd" stroke-width="2.6" fill="none"/><path d="M533.5,985 L533.5,992" stroke="#bdbdbd" stroke-width="2.6" fill="none"/><path d="M634.0999999999999,170 L634.0999999999999,177" stroke="#bdbdbd" stroke-width="2.6" fill="none"/><path d="M634.0999999999999,985 L634.0999999999999,992" stroke="#bdbdbd" stroke-width="2.6" fill="none"/><path d="M734.7,170 L734.7,177" stroke="#bdbdbd" stroke-width="2.6" fill="none"/><path d="M734.7,985 L734.7,992" stroke="#bdbdbd" stroke-width="2.6" fill="none"/><path d="M835.3,170 L835.3,177" stroke="#bdbdbd" stroke-width="2.6" fill="none"/><path d="M835.3,985 L835.3,992" stroke="#bdbdbd" stroke-width="2.6" fill="none"/><path d="M935.8999999999999,170 L935.8999999999999,177" stroke="#bdbdbd" stroke-width="2.6" fill="none"/><path d="M935.8999999999999,985 L935.8999999999999,992" stroke="#bdbdbd" stroke-width="2.6" fill="none"/><path d="M1036.5,170 L1036.5,177" stroke="#bdbdbd" stroke-width="2.6" fill="none"/><path d="M1036.5,985 L1036.5,992" stroke="#bdbdbd" stroke-width="2.6" fill="none"/><path d="M1137.1,170 L1137.1,177" stroke="#bdbdbd" stroke-width="2.6" fill="none"/><path d="M1137.1,985 L1137.1,992" stroke="#bdbdbd" stroke-width="2.6" fill="none"/><path d="M1237.7,170 L1237.7,177" stroke="#bdbdbd" stroke-width="2.6" fill="none"/><path d="M1237.7,985 L1237.7,992" stroke="#bdbdbd" stroke-width="2.6" fill="none"/><path d="M1338.3,170 L1338.3,177" stroke="#bdbdbd" stroke-width="2.6" fill="none"/><path d="M1338.3,985 L1338.3,992" stroke="#bdbdbd" stroke-width="2.6" fill="none"/><path d="M260,279.5 L267,279.5" stroke="#bdbdbd" stroke-width="2.6" fill="none"/><path d="M1404,279.5 L1411,279.5" stroke="#bdbdbd" stroke-width="2.6" fill="none"/><path d="M260,380.0 L267,380.0" stroke="#bdbdbd" stroke-width="2.6" fill="none"/><path d="M1404,380.0 L1411,380.0" stroke="#bdbdbd" stroke-width="2.6" fill="none"/><path d="M260,480.5 L267,480.5" stroke="#bdbdbd" stroke-width="2.6" fill="none"/><path d="M1404,480.5 L1411,480.5" stroke="#bdbdbd" stroke-width="2.6" fill="none"/><path d="M260,581.0 L267,581.0" stroke="#bdbdbd" stroke-width="2.6" fill="none"/><path d="M1404,581.0 L1411,581.0" stroke="#bdbdbd" stroke-width="2.6" fill="none"/><path d="M260,681.5 L267,681.5" stroke="#bdbdbd" stroke-width="2.6" fill="none"/><path d="M1404,681.5 L1411,681.5" stroke="#bdbdbd" stroke-width="2.6" fill="none"/><path d="M260,782.0 L267,782.0" stroke="#bdbdbd" stroke-width="2.6" fill="none"/><path d="M1404,782.0 L1411,782.0" stroke="#bdbdbd" stroke-width="2.6" fill="none"/><path d="M260,882.5 L267,882.5" stroke="#bdbdbd" stroke-width="2.6" fill="none"/><path d="M1404,882.5 L1411,882.5" stroke="#bdbdbd" stroke-width="2.6" fill="none"/><path d="M835.3,170 L835.3,189" stroke="#bdbdbd" stroke-width="2.6" fill="none"/><path d="M835.3,973 L835.3,992" stroke="#bdbdbd" stroke-width="2.6" fill="none"/><path d="M260,580.5 L279,580.5" stroke="#bdbdbd" stroke-width="2.6" fill="none"/><path d="M1392,580.5 L1411,580.5" stroke="#bdbdbd" stroke-width="2.6" fill="none"/><text x="300.00" y="178.00" font-size="9.5" fill="#111" text-anchor="middle">12</text><text x="300.00" y="992.80" font-size="9.5" fill="#111" text-anchor="middle">12</text><text x="382.00" y="178.00" font-size="9.5" fill="#111" text-anchor="middle">11</text><text x="382.00" y="992.80" font-size="9.5" fill="#111" text-anchor="middle">11</text><text x="482.50" y="178.00" font-size="9.5" fill="#111" text-anchor="middle">10</text><text x="482.50" y="992.80" font-size="9.5" fill="#111" text-anchor="middle">10</text><text x="583.00" y="178.00" font-size="9.5" fill="#111" text-anchor="middle">9</text><text x="583.00" y="992.80" font-size="9.5" fill="#111" text-anchor="middle">9</text><text x="683.50" y="178.00" font-size="9.5" fill="#111" text-anchor="middle">8</text><text x="683.50" y="992.80" font-size="9.5" fill="#111" text-anchor="middle">8</text><text x="784.00" y="178.00" font-size="9.5" fill="#111" text-anchor="middle">7</text><text x="784.00" y="992.80" font-size="9.5" fill="#111" text-anchor="middle">7</text><text x="884.50" y="178.00" font-size="9.5" fill="#111" text-anchor="middle">6</text><text x="884.50" y="992.80" font-size="9.5" fill="#111" text-anchor="middle">6</text><text x="985.00" y="178.00" font-size="9.5" fill="#111" text-anchor="middle">5</text><text x="985.00" y="992.80" font-size="9.5" fill="#111" text-anchor="middle">5</text><text x="1085.50" y="178.00" font-size="9.5" fill="#111" text-anchor="middle">4</text><text x="1085.50" y="992.80" font-size="9.5" fill="#111" text-anchor="middle">4</text><text x="1186.00" y="178.00" font-size="9.5" fill="#111" text-anchor="middle">3</text><text x="1186.00" y="992.80" font-size="9.5" fill="#111" text-anchor="middle">3</text><text x="1286.50" y="178.00" font-size="9.5" fill="#111" text-anchor="middle">2</text><text x="1286.50" y="992.80" font-size="9.5" fill="#111" text-anchor="middle">2</text><text x="1369.00" y="178.00" font-size="9.5" fill="#111" text-anchor="middle">1</text><text x="1369.00" y="992.80" font-size="9.5" fill="#111" text-anchor="middle">1</text><text x="262.80" y="234.00" font-size="9.5" fill="#111" text-anchor="middle">H</text><text x="1407.40" y="234.00" font-size="9.5" fill="#111" text-anchor="middle">H</text><text x="262.80" y="334.50" font-size="9.5" fill="#111" text-anchor="middle">G</text><text x="1407.40" y="334.50" font-size="9.5" fill="#111" text-anchor="middle">G</text><text x="262.80" y="435.00" font-size="9.5" fill="#111" text-anchor="middle">F</text><text x="1407.40" y="435.00" font-size="9.5" fill="#111" text-anchor="middle">F</text><text x="262.80" y="535.50" font-size="9.5" fill="#111" text-anchor="middle">E</text><text x="1407.40" y="535.50" font-size="9.5" fill="#111" text-anchor="middle">E</text><text x="262.80" y="636.00" font-size="9.5" fill="#111" text-anchor="middle">D</text><text x="1407.40" y="636.00" font-size="9.5" fill="#111" text-anchor="middle">D</text><text x="262.80" y="736.50" font-size="9.5" fill="#111" text-anchor="middle">C</text><text x="1407.40" y="736.50" font-size="9.5" fill="#111" text-anchor="middle">C</text><text x="262.80" y="837.00" font-size="9.5" fill="#111" text-anchor="middle">B</text><text x="1407.40" y="837.00" font-size="9.5" fill="#111" text-anchor="middle">B</text><text x="262.80" y="937.50" font-size="9.5" fill="#111" text-anchor="middle">A</text><text x="1407.40" y="937.50" font-size="9.5" fill="#111" text-anchor="middle">A</text><rect x="948.8" y="178.8" width="453.60000000000014" height="252.7" fill="none" stroke="#111" stroke-width="1.3"/><path d="M948.8,193.4 L1402.4,193.4" stroke="#111" stroke-width="1.05" fill="none"/><path d="M948.8,208.2 L1402.4,208.2" stroke="#111" stroke-width="1.05" fill="none"/><path d="M948.8,223.3 L1402.4,223.3" stroke="#111" stroke-width="1.05" fill="none"/><path d="M948.8,244.2 L1402.4,244.2" stroke="#111" stroke-width="1.05" fill="none"/><path d="M948.8,259.5 L1402.4,259.5" stroke="#111" stroke-width="1.05" fill="none"/><path d="M948.8,280.4 L1402.4,280.4" stroke="#111" stroke-width="1.05" fill="none"/><path d="M948.8,294.7 L1402.4,294.7" stroke="#111" stroke-width="1.05" fill="none"/><path d="M948.8,309.8 L1402.4,309.8" stroke="#111" stroke-width="1.05" fill="none"/><path d="M948.8,330.7 L1402.4,330.7" stroke="#111" stroke-width="1.05" fill="none"/><path d="M948.8,351.5 L1402.4,351.5" stroke="#111" stroke-width="1.05" fill="none"/><path d="M948.8,366.6 L1402.4,366.6" stroke="#111" stroke-width="1.05" fill="none"/><path d="M948.8,381.7 L1402.4,381.7" stroke="#111" stroke-width="1.05" fill="none"/><path d="M948.8,402.1 L1402.4,402.1" stroke="#111" stroke-width="1.05" fill="none"/><path d="M948.8,417.2 L1402.4,417.2" stroke="#111" stroke-width="1.05" fill="none"/><path d="M1009.5,178.8 L1009.5,431.5" stroke="#111" stroke-width="1.05" fill="none"/><path d="M1120.5,178.8 L1120.5,431.5" stroke="#111" stroke-width="1.05" fill="none"/><path d="M1296.6,178.8 L1296.6,431.5" stroke="#111" stroke-width="1.05" fill="none"/><text x="979.37" y="190.00" font-size="8" fill="#111" text-anchor="middle" letter-spacing="0.431">ITEM NO.</text><text x="1065.17" y="190.00" font-size="8" fill="#111" text-anchor="middle" letter-spacing="0.332">PART NUMBER</text><text x="1208.70" y="190.00" font-size="8" fill="#111" text-anchor="middle" letter-spacing="0.302">DESCRIPTION</text><text x="1349.61" y="190.00" font-size="8" fill="#111" text-anchor="middle" letter-spacing="0.216">QTY.</text><text x="979.40" y="204.40" font-size="8" fill="#111" text-anchor="middle" letter-spacing="0.500">1</text><text x="1010.50" y="204.40" font-size="8" fill="#111" letter-spacing="0.014">BASE</text><text x="1208.66" y="204.40" font-size="8" fill="#111" text-anchor="middle" letter-spacing="0.214">MITER SAW BASE</text><text x="1349.50" y="204.40" font-size="8" fill="#111" text-anchor="middle">1</text><text x="979.40" y="219.35" font-size="8" fill="#111" text-anchor="middle" letter-spacing="0.500">2</text><text x="1010.50" y="219.35" font-size="8" fill="#111" letter-spacing="0.250">TABLE</text><text x="1208.69" y="219.35" font-size="8" fill="#111" text-anchor="middle" letter-spacing="0.276">MITER SAW TABLE</text><text x="1349.50" y="219.35" font-size="8" fill="#111" text-anchor="middle">1</text><text x="979.40" y="237.35" font-size="8" fill="#111" text-anchor="middle" letter-spacing="0.500">3</text><text x="1010.50" y="233.15" font-size="8" fill="#111" letter-spacing="0.354">PEDESTAL - BEARING</text><text x="1010.50" y="242.05" font-size="8" fill="#111" letter-spacing="0.267">SUPPORT</text><text x="1208.71" y="237.35" font-size="8" fill="#111" text-anchor="middle" letter-spacing="0.328">BEARING SUPPORT PEDISTAL</text><text x="1349.50" y="237.35" font-size="8" fill="#111" text-anchor="middle">1</text><text x="979.40" y="255.45" font-size="8" fill="#111" text-anchor="middle" letter-spacing="0.500">4</text><text x="1010.50" y="255.45" font-size="8" fill="#111" letter-spacing="0.390">FENCE ASSEMBLY</text><text x="1208.72" y="255.45" font-size="8" fill="#111" text-anchor="middle" letter-spacing="0.348">FENCE ASSEMBLY</text><text x="1349.50" y="255.45" font-size="8" fill="#111" text-anchor="middle">1</text><text x="979.40" y="273.55" font-size="8" fill="#111" text-anchor="middle" letter-spacing="0.500">5</text><text x="1010.50" y="269.35" font-size="8" fill="#111" letter-spacing="0.351">LINEAR BEARING SLIDE</text><text x="1010.50" y="278.25" font-size="8" fill="#111" letter-spacing="0.139">ASSY</text><text x="1208.72" y="273.55" font-size="8" fill="#111" text-anchor="middle" letter-spacing="0.342">LINEAR BEARING SLIDE ASSEMBLY</text><text x="1349.50" y="273.55" font-size="8" fill="#111" text-anchor="middle">1</text><text x="979.40" y="291.15" font-size="8" fill="#111" text-anchor="middle" letter-spacing="0.500">6</text><text x="1010.50" y="291.15" font-size="8" fill="#111" letter-spacing="0.496">HEAD ASSEMBLY</text><text x="1208.79" y="291.15" font-size="8" fill="#111" text-anchor="middle" letter-spacing="0.473">HEAD ASSEMBLY</text><text x="1349.50" y="291.15" font-size="8" fill="#111" text-anchor="middle">1</text><text x="979.40" y="305.85" font-size="8" fill="#111" text-anchor="middle" letter-spacing="0.500">7</text><text x="1010.50" y="305.85" font-size="8" fill="#111" letter-spacing="0.674">HEAD YOKE</text><text x="1208.81" y="305.85" font-size="8" fill="#111" text-anchor="middle" letter-spacing="0.529">HEAD YOKE</text><text x="1349.50" y="305.85" font-size="8" fill="#111" text-anchor="middle">1</text><text x="979.40" y="323.85" font-size="8" fill="#111" text-anchor="middle" letter-spacing="0.500">8</text><text x="1010.50" y="323.85" font-size="8" fill="#111" letter-spacing="0.594">LOWER BLADE GUARD</text><text x="1208.83" y="323.85" font-size="8" fill="#111" text-anchor="middle" letter-spacing="0.564">LOWER BLADE GUARD</text><text x="1349.50" y="323.85" font-size="8" fill="#111" text-anchor="middle">1</text><text x="979.40" y="344.70" font-size="8" fill="#111" text-anchor="middle" letter-spacing="0.500">9</text><text x="1010.50" y="340.50" font-size="8" fill="#111" letter-spacing="0.473">LOWER BLADE</text><text x="1010.50" y="349.40" font-size="8" fill="#111" letter-spacing="0.931">MOVABLE GUARD</text><text x="1208.89" y="344.70" font-size="8" fill="#111" text-anchor="middle" letter-spacing="0.690">PIVOTING GUARD</text><text x="1349.50" y="344.70" font-size="8" fill="#111" text-anchor="middle">1</text><text x="979.40" y="362.65" font-size="8" fill="#111" text-anchor="middle" letter-spacing="0.500">10</text><text x="1010.50" y="362.65" font-size="8" fill="#111" letter-spacing="0.333">BLADE</text><text x="1208.71" y="362.65" font-size="8" fill="#111" text-anchor="middle" letter-spacing="0.323">SAW BLADE- 40 TEETH</text><text x="1349.50" y="362.65" font-size="8" fill="#111" text-anchor="middle">1</text><text x="979.40" y="377.75" font-size="8" fill="#111" text-anchor="middle" letter-spacing="0.500">11</text><text x="1010.50" y="377.75" font-size="8" fill="#111" letter-spacing="0.618">LINK - GUARD</text><text x="1208.81" y="377.75" font-size="8" fill="#111" text-anchor="middle" letter-spacing="0.510">GUARD LINK</text><text x="1349.50" y="377.75" font-size="8" fill="#111" text-anchor="middle">1</text><text x="979.40" y="395.50" font-size="8" fill="#111" text-anchor="middle" letter-spacing="0.500">12</text><text x="1010.50" y="391.30" font-size="8" fill="#111" letter-spacing="0.372">SHOULDER SCREW -</text><text x="1010.50" y="400.20" font-size="8" fill="#111" letter-spacing="0.243">FIXED LINK</text><text x="1208.74" y="395.50" font-size="8" fill="#111" text-anchor="middle" letter-spacing="0.383">SHOULDER SCREW - LINK</text><text x="1349.50" y="395.50" font-size="8" fill="#111" text-anchor="middle">1</text><text x="979.40" y="413.25" font-size="8" fill="#111" text-anchor="middle" letter-spacing="0.500">13</text><text x="1010.50" y="413.25" font-size="8" fill="#111" letter-spacing="0.362">SHAFT - HEAD ASSY</text><text x="1208.71" y="413.25" font-size="8" fill="#111" text-anchor="middle" letter-spacing="0.330">SHAFT- HEAD ASSY</text><text x="1349.50" y="413.25" font-size="8" fill="#111" text-anchor="middle">1</text><text x="979.40" y="427.95" font-size="8" fill="#111" text-anchor="middle" letter-spacing="0.500">14</text><text x="1010.50" y="427.95" font-size="8" fill="#111" letter-spacing="0.476">SPRING - HEAD ASSY</text><text x="1208.79" y="427.95" font-size="8" fill="#111" text-anchor="middle" letter-spacing="0.476">SPRING - HEAD ASSY</text><text x="1349.50" y="427.95" font-size="8" fill="#111" text-anchor="middle">1</text><defs><linearGradient id="rodg" x1="0" y1="0" x2="0" y2="1"><stop offset="0" stop-color="#8e8b86"/><stop offset="0.3" stop-color="#d9d6d0"/><stop offset="0.6" stop-color="#c4c1bb"/><stop offset="1" stop-color="#85827d"/></linearGradient><linearGradient id="olg" x1="0" y1="0" x2="1" y2="0"><stop offset="0" stop-color="#6a5b1b"/><stop offset="0.5" stop-color="#b5a24a"/><stop offset="1" stop-color="#6a5b1b"/></linearGradient><linearGradient id="olv" x1="0" y1="0" x2="0" y2="1"><stop offset="0" stop-color="#8c7a2a"/><stop offset="1" stop-color="#57490f"/></linearGradient><linearGradient id="gry" x1="0" y1="0" x2="1" y2="0"><stop offset="0" stop-color="#f4f4f4"/><stop offset="0.5" stop-color="#c4c4c4"/><stop offset="1" stop-color="#9c9c9c"/></linearGradient><linearGradient id="grd" x1="0" y1="0" x2="1" y2="1"><stop offset="0" stop-color="#f2f2f2"/><stop offset="0.55" stop-color="#d2d2d2"/><stop offset="1" stop-color="#a8a8a8"/></linearGradient><linearGradient id="tbl" x1="0" y1="0" x2="1" y2="1"><stop offset="0" stop-color="#e9eaee"/><stop offset="1" stop-color="#c3c6cf"/></linearGradient><linearGradient id="redg" x1="0" y1="0" x2="0" y2="1"><stop offset="0" stop-color="#f0473f"/><stop offset="1" stop-color="#b81418"/></linearGradient></defs><g transform="translate(280,240) scale(0.12972)"><g transform="translate(455,238) rotate(30.04)"><rect x="0" y="-54.0" width="1172.516097970514" height="108" fill="url(#rodg)" stroke="#333" stroke-width="7"/><ellipse cx="1172.516097970514" cy="0" rx="45.36" ry="54.0" fill="#bdbab4" stroke="#333" stroke-width="7"/><ellipse cx="1176.516097970514" cy="0" rx="29.160000000000004" ry="35.64" fill="#e6e4df" stroke="#444" stroke-width="5"/><path d="M1134.516097970514,-54.0 v108 M1146.516097970514,-54.0 v108" stroke="#444" stroke-width="6" stroke-dasharray="9,6"/></g><polygon points="285,175 330,105 380,92 470,140 520,180 520,215 470,270 430,300 340,250" fill="url(#grd)" stroke="#1e1e1e" stroke-width="8.33" stroke-linejoin="round"/><polygon points="225,250 330,175 440,225 345,300 300,330 240,310" fill="#c2c2c2" stroke="#1e1e1e" stroke-width="8.33" stroke-linejoin="round"/><polygon points="300,300 420,230 455,260 440,320 370,350 320,330" fill="#8d8d8d" stroke="#1e1e1e" stroke-width="8.33" stroke-linejoin="round"/><g transform="translate(232,385) rotate(29.15)"><rect x="0" y="-51.0" width="1159.911203497923" height="102" fill="url(#rodg)" stroke="#333" stroke-width="7"/><ellipse cx="1159.911203497923" cy="0" rx="42.839999999999996" ry="51.0" fill="#bdbab4" stroke="#333" stroke-width="7"/><ellipse cx="1163.911203497923" cy="0" rx="27.540000000000003" ry="33.660000000000004" fill="#e6e4df" stroke="#444" stroke-width="5"/><path d="M1121.911203497923,-51.0 v102 M1133.911203497923,-51.0 v102" stroke="#444" stroke-width="6" stroke-dasharray="9,6"/></g><polygon points="85,330 115,275 165,245 225,250 250,280 235,330 200,370 150,400 95,370" fill="url(#grd)" stroke="#1e1e1e" stroke-width="8.33" stroke-linejoin="round"/><path d="M100,335 l120,45 M150,290 l30,15 M130,260 l10,6" fill="none" stroke="#444" stroke-width="6.94" stroke-linejoin="round" stroke-linecap="butt" stroke-dasharray="10,7"/><path d="M330,150 l90,40 M300,190 l20,10" fill="none" stroke="#555" stroke-width="6.94" stroke-linejoin="round" stroke-linecap="butt" stroke-dasharray="10,7"/><polygon points="62,400 85,385 235,430 250,455 245,495 205,512 155,508 75,455" fill="#d21f22" stroke="#7a0d0f" stroke-width="8.33" stroke-linejoin="round"/><path d="M150,440 l60,18 M165,470 a10,10 0 1 0 20,6" fill="none" stroke="#6a0b0d" stroke-width="8.33" stroke-linejoin="round" stroke-linecap="round"/></g><g transform="translate(470,320) scale(0.18536)"><ellipse cx="118" cy="400" rx="32" ry="48" fill="#efefef" stroke="#1e1e1e" stroke-width="4.86" transform="rotate(-20 118 400)"/><polygon points="105,360 165,330 240,420 200,470 130,445" fill="#e4e4e4" stroke="#1e1e1e" stroke-width="4.86" stroke-linejoin="round"/><polygon points="150,450 330,535 520,575 540,700 530,800 500,900 430,975 340,985 250,930 215,840 225,740 250,690" fill="url(#gry)" stroke="#1e1e1e" stroke-width="4.86" stroke-linejoin="round"/><polygon points="320,540 520,575 540,700 535,790 520,860 340,740" fill="#aeaeae" stroke="#1e1e1e" stroke-width="3.88" stroke-linejoin="round"/><ellipse cx="330" cy="850" rx="118" ry="138" fill="url(#gry)" stroke="#1e1e1e" stroke-width="4.86" transform="rotate(-8 330 850)"/><ellipse cx="410" cy="850" rx="110" ry="135" fill="#b9b9b9" stroke="#1e1e1e" stroke-width="4.86" transform="rotate(-8 410 850)"/><ellipse cx="415" cy="855" rx="88" ry="112" fill="#8e8e8e" stroke="#1e1e1e" stroke-width="3.88" transform="rotate(-8 415 855)"/><path d="M440,740 c40,-30 70,0 75,50 l-30,60 l-50,-20 z" fill="#e9e8dd" stroke="#1e1e1e" stroke-width="3.88" stroke-linejoin="round" stroke-linecap="round"/><path d="M335,870 c10,60 60,90 110,70 l-30,-30 c-30,10 -50,-10 -55,-45 z" fill="#d6d6d6" stroke="#1e1e1e" stroke-width="3.88" stroke-linejoin="round" stroke-linecap="round"/><ellipse cx="418" cy="835" rx="14" ry="18" fill="#efefef" stroke="#1e1e1e" stroke-width="3.88"/><path d="M440,870 l45,25 l-15,25 l-40,-25 z" fill="#e6e6e6" stroke="#1e1e1e" stroke-width="3.88" stroke-linejoin="round" stroke-linecap="round"/><path d="M245,700 l95,40 M250,745 l80,30 M300,735 l230,-90" fill="none" stroke="#333" stroke-width="4.86" stroke-linejoin="round" stroke-linecap="butt" stroke-dasharray="9,7"/><polygon points="240,300 330,245 548,385 548,445 400,515 240,425" fill="#cfcfcf" stroke="#1e1e1e" stroke-width="4.86" stroke-linejoin="round"/><polygon points="240,300 330,245 548,385 470,430" fill="#e2e2e2" stroke="#1e1e1e" stroke-width="4.86" stroke-linejoin="round"/><polygon points="470,430 548,385 548,445 400,515 330,480" fill="#a9a9a9" stroke="#1e1e1e" stroke-width="4.86" stroke-linejoin="round"/><path d="M300,270 l180,115 M350,300 l110,70" fill="none" stroke="#333" stroke-width="4.86" stroke-linejoin="round" stroke-linecap="butt" stroke-dasharray="8,6"/><ellipse cx="507" cy="420" rx="30" ry="36" fill="#f4f4f4" stroke="#1e1e1e" stroke-width="5.83" transform="rotate(-15 507 420)"/><path d="M410,500 l70,-30 l15,40 l-60,30 z" fill="#8a8a8a" stroke="#1e1e1e" stroke-width="3.88" stroke-linejoin="round" stroke-linecap="round"/><path d="M150,395 C135,300 190,190 300,130 C360,95 410,60 455,75 C500,90 500,200 488,265 C482,295 470,310 455,318 L415,290 C425,250 440,215 425,190 C400,185 330,225 290,250 C250,280 240,320 240,370 C230,400 180,420 150,395 z" fill="#857326" stroke="#1e1e1e" stroke-width="5.83" stroke-linejoin="round" stroke-linecap="round"/><path d="M170,380 C160,300 200,215 300,160 C370,120 420,90 450,100 C475,115 478,190 470,250" fill="none" stroke="#c4b25e" stroke-width="14.00" stroke-linejoin="round" stroke-linecap="round" opacity="0.75"/><path d="M415,290 C425,250 440,215 425,190 C412,215 400,250 395,275 z" fill="#5d4f15" stroke="#1e1e1e" stroke-width="3.88" stroke-linejoin="round" stroke-linecap="round"/><ellipse cx="218" cy="372" rx="6" ry="8" fill="#3a320c"/><ellipse cx="455" cy="305" rx="6" ry="8" fill="#3a320c"/><path d="M198,440 L235,452 L330,503 L420,523 L480,520 C510,505 540,490 590,500 L768,605 C782,620 778,640 755,650 L600,560 C570,550 540,560 500,585 C470,600 430,580 400,565 L215,475 C195,465 190,448 198,440 z" fill="#6a6a6a" stroke="#1e1e1e" stroke-width="4.86" stroke-linejoin="round" stroke-linecap="round"/><path d="M625,545 L745,620 C758,625 762,612 752,605 L635,535 C622,530 615,538 625,545 z" fill="#dcdcdc" stroke="#1e1e1e" stroke-width="3.88" stroke-linejoin="round" stroke-linecap="round"/><ellipse cx="212" cy="458" rx="10" ry="12" fill="#3c3c3c" stroke="#1e1e1e" stroke-width="3.88"/></g><g transform="translate(560,390) scale(0.21322)"><ellipse cx="490" cy="55" rx="32" ry="50" fill="none" stroke="#3c3c3c" stroke-width="6.75" transform="rotate(-15 490 55)"/><ellipse cx="501" cy="51" rx="32" ry="50" fill="none" stroke="#3c3c3c" stroke-width="6.75" transform="rotate(-15 501 51)"/><ellipse cx="512" cy="47" rx="32" ry="50" fill="none" stroke="#3c3c3c" stroke-width="6.75" transform="rotate(-15 512 47)"/><ellipse cx="523" cy="43" rx="32" ry="50" fill="none" stroke="#3c3c3c" stroke-width="6.75" transform="rotate(-15 523 43)"/><ellipse cx="534" cy="39" rx="32" ry="50" fill="none" stroke="#3c3c3c" stroke-width="6.75" transform="rotate(-15 534 39)"/><ellipse cx="545" cy="35" rx="32" ry="50" fill="none" stroke="#3c3c3c" stroke-width="6.75" transform="rotate(-15 545 35)"/><ellipse cx="556" cy="31" rx="32" ry="50" fill="none" stroke="#3c3c3c" stroke-width="6.75" transform="rotate(-15 556 31)"/><ellipse cx="567" cy="27" rx="32" ry="50" fill="none" stroke="#3c3c3c" stroke-width="6.75" transform="rotate(-15 567 27)"/><ellipse cx="578" cy="23" rx="32" ry="50" fill="none" stroke="#3c3c3c" stroke-width="6.75" transform="rotate(-15 578 23)"/><path d="M470,10 C465,50 480,80 495,100 L525,155 L538,148 L512,95" fill="none" stroke="#3c3c3c" stroke-width="8.44" stroke-linejoin="round" stroke-linecap="round"/><path d="M580,5 l40,-5" fill="none" stroke="#3c3c3c" stroke-width="8.44" stroke-linejoin="round" stroke-linecap="round"/><polygon points="80,540 268,425 292,436 294,458 105,572 85,565" fill="url(#rodg)" stroke="#1e1e1e" stroke-width="4.22" stroke-linejoin="round"/><ellipse cx="94" cy="555" rx="13" ry="18" fill="#cfcfcf" stroke="#1e1e1e" stroke-width="4.22" transform="rotate(-30 94 555)"/><path d="M125,520 l14,26 M140,510 l14,26 M262,432 l12,24" fill="none" stroke="#444" stroke-width="4.22" stroke-linejoin="round" stroke-linecap="round"/><ellipse cx="88" cy="458" rx="14" ry="10" fill="#9a9a9a" stroke="#1e1e1e" stroke-width="3.38" transform="rotate(-30 88 458)"/><ellipse cx="78" cy="466" rx="6" ry="5" fill="#555" stroke="#1e1e1e" stroke-width="2.53"/><polygon points="560,300 650,322 700,300 745,285 740,235 700,215 648,235 640,200" fill="#b4b4b4" stroke="#1e1e1e" stroke-width="4.22" stroke-linejoin="round"/><ellipse cx="594" cy="250" rx="54" ry="76" fill="#c2c2c2" stroke="#1e1e1e" stroke-width="4.22" transform="rotate(-12 594 250)"/><ellipse cx="601" cy="250" rx="47" ry="71" fill="#d9d9d9" stroke="#1e1e1e" stroke-width="3.38" transform="rotate(-12 601 250)"/><ellipse cx="590" cy="263" rx="13" ry="17" fill="#f2f2f2" stroke="#1e1e1e" stroke-width="4.22" transform="rotate(-12 590 263)"/><ellipse cx="682" cy="283" rx="12" ry="14" fill="#7a7a7a" stroke="#1e1e1e" stroke-width="3.38"/><ellipse cx="700" cy="245" rx="9" ry="11" fill="#8d8d8d" stroke="#1e1e1e" stroke-width="3.38"/><ellipse cx="757" cy="240" rx="19" ry="21" fill="#d21f22" stroke="#7a0d0f" stroke-width="4.22"/><path d="M744,228 l28,22 M747,252 l22,-24" fill="none" stroke="#7a0d0f" stroke-width="5.07" stroke-linejoin="round" stroke-linecap="round"/><polygon points="468,415 520,380 560,300 650,322 683,372 683,432 640,455 490,520 463,500" fill="#bfbfbf" stroke="#1e1e1e" stroke-width="4.22" stroke-linejoin="round"/><polygon points="520,385 610,335 650,322 662,395 540,447" fill="#e3e3e3" stroke="#1e1e1e" stroke-width="3.38" stroke-linejoin="round"/><polygon points="468,418 540,447 662,395 683,432 490,520 463,500" fill="#a9a9a9" stroke="#1e1e1e" stroke-width="3.38" stroke-linejoin="round"/><ellipse cx="640" cy="402" rx="17" ry="20" fill="#ededed" stroke="#1e1e1e" stroke-width="4.22" transform="rotate(-20 640 402)"/><path d="M520,430 l80,-35 M500,470 l150,-62" fill="none" stroke="#444" stroke-width="4.22" stroke-linejoin="round" stroke-linecap="butt" stroke-dasharray="8,6"/><path d="M420,255 l25,-14 l16,44 l-22,22 z" fill="#b0b0b0" stroke="#1e1e1e" stroke-width="3.38" stroke-linejoin="round" stroke-linecap="round"/><ellipse cx="436" cy="342" rx="62" ry="80" fill="#a8a8a8" stroke="#1e1e1e" stroke-width="4.22" transform="rotate(-18 436 342)"/><ellipse cx="430" cy="346" rx="44" ry="62" fill="#5e5e5e" stroke="#1e1e1e" stroke-width="4.22" transform="rotate(-18 430 346)"/><ellipse cx="425" cy="352" rx="26" ry="40" fill="#9d9d9d" stroke="#1e1e1e" stroke-width="3.38" transform="rotate(-18 425 352)"/><ellipse cx="422" cy="356" rx="12" ry="20" fill="#4a4a4a" stroke="#1e1e1e" stroke-width="3.38" transform="rotate(-18 422 356)"/><polygon points="378,425 395,415 458,445 458,497 440,502 378,467" fill="#d21f22" stroke="#7a0d0f" stroke-width="4.22" stroke-linejoin="round"/><path d="M390,440 a8,8 0 1 0 14,8 M410,435 l30,14" fill="none" stroke="#7a0d0f" stroke-width="4.22" stroke-linejoin="round" stroke-linecap="round"/><polygon points="1249.6,579.5 1240.9,598.0 1229.7,584.8 1223.6,588.3 1211.8,603.7 1202.2,588.7 1195.2,590.6 1180.7,602.6 1172.7,586.1 1165.1,586.5 1148.1,594.7 1142.2,577.1 1134.1,575.9 1115.0,580.1 1111.2,562.0 1102.8,559.2 1082.2,559.3 1080.6,541.0 1072.1,536.7 1050.5,532.7 1051.1,514.8 1042.8,509.0 1020.6,501.0 1023.4,483.8 1015.5,476.9 993.3,465.1 998.3,449.0 990.9,441.0 969.3,425.7 976.3,411.2 969.6,402.3 949.1,383.8 958.1,371.3 952.2,361.7 933.3,340.6 943.9,330.3 939.1,320.2 922.3,296.9 934.2,289.1 930.5,278.9 916.2,254.0 929.3,248.9 926.8,238.7 915.4,212.9 929.2,210.5 928.0,200.7 919.7,174.5 933.9,175.0 934.1,165.8 929.1,139.9 943.4,143.3 944.9,134.8 943.3,109.9 957.3,116.0 960.1,108.5 962.0,85.1 975.5,93.9 979.4,87.6 984.8,66.3 997.3,77.5 1002.4,72.5 1011.1,54.0 1022.3,67.2 1028.4,63.7 1040.2,48.3 1049.8,63.3 1056.8,61.4 1071.3,49.4 1079.3,65.9 1086.9,65.5 1103.9,57.3 1109.8,74.9 1117.9,76.1 1137.0,71.9 1140.8,90.0 1149.2,92.8 1169.8,92.7 1171.4,111.0 1179.9,115.3 1201.5,119.3 1200.9,137.2 1209.2,143.0 1231.4,151.0 1228.6,168.2 1236.5,175.1 1258.7,186.9 1253.7,203.0 1261.1,211.0 1282.7,226.3 1275.7,240.8 1282.4,249.7 1302.9,268.2 1293.9,280.7 1299.8,290.3 1318.7,311.4 1308.1,321.7 1312.9,331.8 1329.7,355.1 1317.8,362.9 1321.5,373.1 1335.8,398.0 1322.7,403.1 1325.2,413.3 1336.6,439.1 1322.8,441.5 1324.0,451.3 1332.3,477.5 1318.1,477.0 1317.9,486.2 1322.9,512.1 1308.6,508.7 1307.1,517.2 1308.7,542.1 1294.7,536.0 1291.9,543.5 1290.0,566.9 1276.5,558.1 1272.6,564.4 1267.2,585.7 1254.7,574.5" fill="#a29f9c" stroke="#6d6a67" stroke-width="3.38" stroke-linejoin="round"/><ellipse cx="1125" cy="328" rx="11" ry="14" fill="#f4f4f4" stroke="#666" stroke-width="3.38"/><polygon points="1028,340 1110,385 1110,480 1028,435" fill="#d3181c"/><polygon points="1110,385 1222,447 1222,547 1110,480" fill="#d9d9d9"/><path d="M1045,410 l50,28 M1050,425 l45,25" fill="none" stroke="#f0b0b0" stroke-width="8.44" stroke-linejoin="round" stroke-linecap="round"/><path d="M1130,445 l12,-20 l8,30 z" fill="#2a4fa8"/><path d="M1140,470 l40,22 l-5,10 l-38,-22 z" fill="#d3181c"/><path d="M1150,440 l14,6 l-4,10 z" fill="#e88a1a"/><polygon points="770,630 995,445 1035,495 1068,500 815,622" fill="#b3b3b3" stroke="#1e1e1e" stroke-width="4.22" stroke-linejoin="round"/><polygon points="762,636 993,440 1006,452 800,628" fill="#74641e" stroke="#1e1e1e" stroke-width="3.38" stroke-linejoin="round"/><polygon points="985,520 1000,495 1010,500 995,525" fill="#8a7a2a" stroke="#1e1e1e" stroke-width="2.53" stroke-linejoin="round"/><polygon points="812,622 1066,500 1075,532 1100,540 820,682" fill="#bcbcbc" stroke="#1e1e1e" stroke-width="4.22" stroke-linejoin="round"/><path d="M826,674 v-20M832,671 v-27M839,668 v-34M845,664 v-41M851,661 v-22M858,658 v-29M864,655 v-36M870,651 v-43M876,648 v-24M883,645 v-31M889,642 v-38M895,639 v-45M902,635 v-26M908,632 v-33M914,629 v-40M920,626 v-21M927,622 v-28M933,619 v-35M939,616 v-42M946,613 v-23M952,610 v-30M958,606 v-37M965,603 v-44M971,600 v-25M977,597 v-32M984,594 v-39M990,590 v-20M996,587 v-27M1002,584 v-34M1009,581 v-41M1015,577 v-22M1021,574 v-29M1028,571 v-36M1034,568 v-43M1040,565 v-24M1046,561 v-31M1053,558 v-38M1059,555 v-45M1065,552 v-26M1072,548 v-33M1078,545 v-40M1084,542 v-21" fill="none" stroke="#1c1c1c" stroke-width="4.39" stroke-linejoin="round" stroke-linecap="butt"/><polygon points="820,682 1100,540 1122,560 715,792 703,772" fill="#7f6e22" stroke="#1e1e1e" stroke-width="4.22" stroke-linejoin="round"/><path d="M440,805 C430,720 520,650 640,632 C700,624 740,624 775,626 L812,624 L822,680 L730,760 C670,748 600,770 565,832 L522,800 L445,845 z" fill="url(#olg)" stroke="#1e1e1e" stroke-width="4.22" stroke-linejoin="round" stroke-linecap="round"/><path d="M440,805 C430,720 520,650 640,632 C700,624 740,624 775,626" fill="none" stroke="#4a3f10" stroke-width="10.13" stroke-linejoin="round" stroke-linecap="butt" stroke-dasharray="5,5"/><path d="M565,832 C600,770 670,748 730,760" fill="none" stroke="#4a3f10" stroke-width="8.44" stroke-linejoin="round" stroke-linecap="butt" stroke-dasharray="5,5"/><path d="M470,800 C470,740 540,680 640,665" fill="none" stroke="#4a3f10" stroke-width="5.07" stroke-linejoin="round" stroke-linecap="butt" stroke-dasharray="3,22"/><path d="M290,840 C300,800 360,775 420,790 L440,830 L300,900 z" fill="#7f6e22" stroke="#1e1e1e" stroke-width="4.22" stroke-linejoin="round" stroke-linecap="round"/><polygon points="259,1048 370,978 530,902 586,930 607,1006 530,1062 343,1072 329,1110 273,1076" fill="#74641e" stroke="#1e1e1e" stroke-width="4.22" stroke-linejoin="round"/><path d="M380,1040 C430,1000 500,985 560,1000" fill="none" stroke="#b5a24a" stroke-width="12.00" stroke-linejoin="round" stroke-linecap="round" opacity="0.6"/><polygon points="90,955 525,783 533,850 110,1085 95,1085" fill="#b9b9b9" stroke="#1e1e1e" stroke-width="4.22" stroke-linejoin="round"/><path d="M108,1074 v-28M115,1070 v-39M122,1067 v-50M129,1063 v-61M136,1059 v-32M142,1056 v-43M149,1052 v-54M156,1048 v-65M163,1045 v-36M170,1041 v-47M177,1037 v-58M184,1034 v-29M191,1030 v-40M198,1026 v-51M205,1022 v-62M212,1019 v-33M218,1015 v-44M225,1011 v-55M232,1008 v-66M239,1004 v-37M246,1000 v-48M253,997 v-59M260,993 v-30M267,989 v-41M274,986 v-52M280,982 v-63M287,978 v-34M294,975 v-45M301,971 v-56M308,967 v-67M315,964 v-38M322,960 v-49M329,956 v-60M336,953 v-31M343,949 v-42M350,945 v-53M356,942 v-64M363,938 v-35M370,934 v-46M377,930 v-57M384,927 v-28M391,923 v-39M398,919 v-50M405,916 v-61M412,912 v-32M418,908 v-43M425,905 v-54M432,901 v-65M439,897 v-36M446,894 v-47M453,890 v-58M460,886 v-29M467,883 v-40M474,879 v-51M481,875 v-62M488,872 v-33M494,868 v-44M501,864 v-55M508,861 v-66M515,857 v-37M522,853 v-48M529,850 v-59" fill="none" stroke="#1c1c1c" stroke-width="4.39" stroke-linejoin="round" stroke-linecap="butt"/><path d="M150,985 l14,-6 M345,872 l14,-6" fill="none" stroke="#555" stroke-width="10.13" stroke-linejoin="round" stroke-linecap="round"/><polygon points="533,850 640,830 215,1085 112,1085" fill="#7f6e22" stroke="#1e1e1e" stroke-width="4.22" stroke-linejoin="round"/><polygon points="30,1060 90,1020 95,1085 40,1085" fill="#74641e" stroke="#1e1e1e" stroke-width="3.38" stroke-linejoin="round"/></g><g transform="translate(540,560) scale(0.25954)"><path d="M45,748 C60,715 100,700 140,705 L240,722 L190,765 L135,790 L215,862 L180,885 L70,812 C45,790 40,765 45,748 z" fill="#6c5d1b" stroke="#1e1e1e" stroke-width="3.47" stroke-linejoin="round" stroke-linecap="round"/><path d="M120,772 L190,760 L222,790 L150,802 z" fill="#e9e8dd" stroke="#1e1e1e" stroke-width="2.77" stroke-linejoin="round" stroke-linecap="round"/><path d="M62,765 C100,735 150,728 215,738 M75,800 L180,870 M100,720 l100,15" fill="none" stroke="#2e2708" stroke-width="4.16" stroke-linejoin="round" stroke-linecap="butt" stroke-dasharray="5,5"/><path d="M360,640 C340,560 470,490 640,485 C830,480 1000,560 1020,680 L1020,705 L1019,720 L1017,735 L1013,750 L1007,764 L1000,779 L991,792 L981,806 L970,819 L957,831 L943,843 L927,854 L911,865 L893,874 L875,883 L855,891 L835,898 L814,904 L792,909 L770,914 L747,917 L724,919 L702,920 L678,920 L656,919 L633,917 L610,914 L588,909 L566,904 L545,898 L525,891 L505,883 L487,874 L469,865 L440,830 L440,705 L375,680 z" fill="#4d410f" stroke="#1e1e1e" stroke-width="3.47" stroke-linejoin="round" stroke-linecap="round"/><polygon points="440,820 520,850 545,905 530,960 470,945 400,965 392,900" fill="#5f5116" stroke="#1e1e1e" stroke-width="3.47" stroke-linejoin="round"/><path d="M469,848 L487,857 L505,866 L525,874 L545,881 L566,887 L588,892 L610,897 L633,900 L656,902 L678,903 L702,903 L724,902 L747,900 L770,897 L792,892 L814,887 L835,881 L855,874 L875,866 L893,857 L911,848 L927,837 L943,826 L957,814 L970,802 L981,789 L991,775 L1000,762 L1007,747 L1013,733 L1017,718 L1019,703 L1020,688" fill="none" stroke="#94833a" stroke-width="16.00" stroke-linejoin="round" stroke-linecap="butt" stroke-dasharray="4,8"/><path d="M469,833 L487,842 L505,851 L525,859 L545,866 L566,872 L588,877 L610,882 L633,885 L656,887 L678,888 L702,888 L724,887 L747,885 L770,882 L792,877 L814,872 L835,866 L855,859 L875,851 L893,842 L911,833 L927,822 L943,811 L957,799 L970,787 L981,774 L991,760 L1000,747 L1007,732 L1013,718 L1017,703 L1019,688 L1020,673" fill="none" stroke="#2a2306" stroke-width="8.00" stroke-linejoin="round" stroke-linecap="butt" stroke-dasharray="7,5"/><polygon points="482,870 502,880 500,913 485,903" fill="#7c6b24" stroke="#2a2306" stroke-width="3.05" stroke-linejoin="round"/><polygon points="513,885 535,893 532,926 516,918" fill="#7c6b24" stroke="#2a2306" stroke-width="3.05" stroke-linejoin="round"/><polygon points="546,897 569,903 566,936 549,930" fill="#7c6b24" stroke="#2a2306" stroke-width="3.05" stroke-linejoin="round"/><polygon points="581,906 605,911 602,944 584,939" fill="#7c6b24" stroke="#2a2306" stroke-width="3.05" stroke-linejoin="round"/><polygon points="618,913 642,916 639,949 621,946" fill="#7c6b24" stroke="#2a2306" stroke-width="3.05" stroke-linejoin="round"/><polygon points="656,917 680,918 677,951 658,950" fill="#7c6b24" stroke="#2a2306" stroke-width="3.05" stroke-linejoin="round"/><polygon points="693,918 718,917 715,950 696,951" fill="#7c6b24" stroke="#2a2306" stroke-width="3.05" stroke-linejoin="round"/><polygon points="731,916 756,914 753,947 734,949" fill="#7c6b24" stroke="#2a2306" stroke-width="3.05" stroke-linejoin="round"/><polygon points="769,912 793,907 790,940 772,945" fill="#7c6b24" stroke="#2a2306" stroke-width="3.05" stroke-linejoin="round"/><polygon points="805,905 828,898 825,931 808,938" fill="#7c6b24" stroke="#2a2306" stroke-width="3.05" stroke-linejoin="round"/><polygon points="840,895 861,887 859,920 842,928" fill="#7c6b24" stroke="#2a2306" stroke-width="3.05" stroke-linejoin="round"/><polygon points="873,882 893,873 890,906 875,915" fill="#7c6b24" stroke="#2a2306" stroke-width="3.05" stroke-linejoin="round"/><polygon points="903,867 921,856 919,889 905,900" fill="#7c6b24" stroke="#2a2306" stroke-width="3.05" stroke-linejoin="round"/><polygon points="931,850 947,838 945,871 933,883" fill="#7c6b24" stroke="#2a2306" stroke-width="3.05" stroke-linejoin="round"/><polygon points="955,831 969,818 967,851 957,864" fill="#7c6b24" stroke="#2a2306" stroke-width="3.05" stroke-linejoin="round"/><polygon points="976,811 987,796 986,829 977,844" fill="#7c6b24" stroke="#2a2306" stroke-width="3.05" stroke-linejoin="round"/><polygon points="993,788 1002,773 1001,806 994,821" fill="#7c6b24" stroke="#2a2306" stroke-width="3.05" stroke-linejoin="round"/><polygon points="1006,765 1012,750 1011,783 1007,798" fill="#7c6b24" stroke="#2a2306" stroke-width="3.05" stroke-linejoin="round"/><polygon points="1015,741 1018,725 1018,758 1015,774" fill="#7c6b24" stroke="#2a2306" stroke-width="3.05" stroke-linejoin="round"/><polygon points="1019,716 1020,700 1020,733 1019,749" fill="#7c6b24" stroke="#2a2306" stroke-width="3.05" stroke-linejoin="round"/><path d="M452,790 C600,822 770,805 890,742 C945,712 985,675 1004,640" fill="none" stroke="#857326" stroke-width="30.00" stroke-linejoin="round" stroke-linecap="butt"/><path d="M452,795 C600,827 770,810 890,747 C945,717 985,680 1004,645" fill="none" stroke="#e4dfc0" stroke-width="9.00" stroke-linejoin="round" stroke-linecap="butt" stroke-dasharray="4,9"/><path d="M452,776 C600,808 770,791 890,728 C945,698 985,661 1004,626" fill="none" stroke="#2e2708" stroke-width="5.55" stroke-linejoin="round" stroke-linecap="butt" stroke-dasharray="9,5"/><path d="M365,640 C355,570 470,495 640,490 C800,485 960,545 1000,640 C960,715 830,780 660,780 C560,780 480,768 440,745 L440,705 L375,680 z" fill="#74641f" stroke="#1e1e1e" stroke-width="3.47" stroke-linejoin="round" stroke-linecap="round"/><path d="M560,772 C660,768 800,745 900,690 M590,752 C680,748 790,725 870,680" fill="none" stroke="#2e2708" stroke-width="4.85" stroke-linejoin="round" stroke-linecap="butt" stroke-dasharray="8,5"/><path d="M860,560 C930,610 945,680 905,735 M895,570 C960,620 975,690 940,740" fill="none" stroke="#2e2708" stroke-width="5.55" stroke-linejoin="round" stroke-linecap="butt" stroke-dasharray="7,6"/><ellipse cx="632" cy="635" rx="205" ry="120" fill="#e9e8dd" stroke="#1e1e1e" stroke-width="3.47" transform="rotate(4 632 635)"/><path d="M632,637 L818,660 M632,637 L691,742 M632,637 L505,719 M632,637 L446,614 M632,637 L573,532 M632,637 L759,555 " fill="none" stroke="#2e2708" stroke-width="34.00" stroke-linejoin="round" stroke-linecap="butt"/><path d="M632,637 L818,660 M632,637 L691,742 M632,637 L505,719 M632,637 L446,614 M632,637 L573,532 M632,637 L759,555 " fill="none" stroke="#7a6a22" stroke-width="26.00" stroke-linejoin="round" stroke-linecap="butt"/><ellipse cx="632" cy="637" rx="46" ry="28" fill="#7a6a22" stroke="#1e1e1e" stroke-width="3.47"/><ellipse cx="632" cy="635" rx="30" ry="18" fill="#4d4d4d" stroke="#1e1e1e" stroke-width="2.77"/><ellipse cx="632" cy="635" rx="14" ry="9" fill="#bdbdbd" stroke="#1e1e1e" stroke-width="2.08"/><ellipse cx="632" cy="635" rx="205" ry="120" fill="none" stroke="#1e1e1e" stroke-width="21.00" transform="rotate(4 632 635)"/><ellipse cx="632" cy="635" rx="205" ry="120" fill="none" stroke="#b4bac8" stroke-width="14.00" transform="rotate(4 632 635)"/><path d="M850,515 l12,-5 l4,32 l-12,5 z" fill="#a8953f" stroke="#1e1e1e" stroke-width="2.77" stroke-linejoin="round" stroke-linecap="round"/><path d="M895,640 l10,-4 l3,28 l-10,4 z" fill="#ddd" stroke="#1e1e1e" stroke-width="2.77" stroke-linejoin="round" stroke-linecap="round"/><polygon points="232,722 375,680 448,703 445,842 395,872 188,765" fill="#b1b4bd" stroke="#1e1e1e" stroke-width="3.47" stroke-linejoin="round"/><polygon points="232,722 375,680 448,703 300,760" fill="#d0d2d9" stroke="#1e1e1e" stroke-width="2.77" stroke-linejoin="round"/><polygon points="188,765 395,872 388,1030 325,1002 330,903 218,852 207,932 176,916" fill="#d3d4d8" stroke="#1e1e1e" stroke-width="3.47" stroke-linejoin="round"/><polygon points="395,872 445,842 440,905 390,935" fill="#94969e" stroke="#1e1e1e" stroke-width="2.77" stroke-linejoin="round"/><path d="M248,760 l22,10 v-8 l18,12 l-18,6 v-7 l-22,-10 z M350,815 l22,10 v-8 l18,12 l-18,6 v-7 l-22,-10 z" fill="none" stroke="#222" stroke-width="2.77" stroke-linejoin="round" stroke-linecap="round"/><path d="M200,850 v60 M340,920 v70 M380,900 v110" fill="none" stroke="#333" stroke-width="4.16" stroke-linejoin="round" stroke-linecap="butt" stroke-dasharray="4,5"/><path d="M225,850 l92,42 l-3,42 l-90,-40 z" fill="#5a4c13" stroke="#1e1e1e" stroke-width="2.77" stroke-linejoin="round" stroke-linecap="round"/><path d="M232,868 l80,36 M232,884 l80,36" fill="none" stroke="#9a8835" stroke-width="5.55" stroke-linejoin="round" stroke-linecap="butt" stroke-dasharray="7,5"/><path d="M395,965 L470,940 L525,955 L532,1000 L470,1045 C430,1058 395,1040 392,1010 z" fill="#6c5d1b" stroke="#1e1e1e" stroke-width="3.47" stroke-linejoin="round" stroke-linecap="round"/><ellipse cx="432" cy="1012" rx="14" ry="12" fill="#4a3f10" stroke="#1e1e1e" stroke-width="2.77"/><path d="M440,975 l60,-12 M450,1000 l60,-20 M405,985 l30,-10" fill="none" stroke="#2e2708" stroke-width="5.55" stroke-linejoin="round" stroke-linecap="butt" stroke-dasharray="5,5"/><path d="M740,440 L759,411 L1056,548 L1113,497 L1182,520 L1205,588 L1165,611 L1119,628 L1108,628 L982,588 L759,474 z" fill="#6b5c1a" stroke="#1e1e1e" stroke-width="3.47" stroke-linejoin="round" stroke-linecap="round"/><path d="M770,440 L1000,548 M790,470 L960,560" fill="none" stroke="#2e2708" stroke-width="9.71" stroke-linejoin="round" stroke-linecap="butt" stroke-dasharray="5,4"/><path d="M345,290 C345,200 470,110 640,100 C800,95 915,170 915,265 L915,330 C915,420 790,497 630,499 C470,499 345,420 345,345 z" fill="url(#olv)" stroke="#1e1e1e" stroke-width="3.47" stroke-linejoin="round" stroke-linecap="round"/><path d="M355,232 L470,225 L520,228 L555,120 C600,100 700,95 760,115 C860,145 915,200 915,265 C915,300 905,325 885,343 L1113,497 L1056,548 L790,420 C750,432 700,437 630,437 C470,437 345,370 345,290 C345,265 350,245 355,232 z" fill="url(#tbl)" stroke="#1e1e1e" stroke-width="3.47" stroke-linejoin="round" stroke-linecap="round"/><path d="M392,291 A250,128 0 0 0 730,387 M610,137 A250,128 0 0 1 885,300 M434,287 A205,103 0 0 0 711,364 M619,161 A205,103 0 0 1 841,294 M476,282 A160,78 0 0 0 692,341 M628,186 A160,78 0 0 1 797,288 " fill="none" stroke="#2e2708" stroke-width="11.00" stroke-linejoin="round" stroke-linecap="round"/><path d="M392,291 A250,128 0 0 0 730,387 M610,137 A250,128 0 0 1 885,300 M434,287 A205,103 0 0 0 711,364 M619,161 A205,103 0 0 1 841,294 M476,282 A160,78 0 0 0 692,341 M628,186 A160,78 0 0 1 797,288 " fill="none" stroke="#8d7b2a" stroke-width="6.94" stroke-linejoin="round" stroke-linecap="round"/><polygon points="520,173.5 1090,487.0 1090,559.0 520,245.5" fill="#8a7827" stroke="#2e2708" stroke-width="2.77" stroke-linejoin="round"/><polygon points="556,197.3 840,353.5 840,380.5 556,224.3" fill="#d21f22" stroke="#5a0a0c" stroke-width="2.77" stroke-linejoin="round"/><polygon points="852,360.1 1098,495.4000000000001 1098,522.4000000000001 852,387.1" fill="#d21f22" stroke="#5a0a0c" stroke-width="2.77" stroke-linejoin="round"/><polygon points="522,215.6 800,368.5 800,395.5 522,242.6" fill="#d21f22" stroke="#5a0a0c" stroke-width="2.77" stroke-linejoin="round"/><polygon points="812,375.1 1066,514.8 1066,541.8 812,402.1" fill="#d21f22" stroke="#5a0a0c" stroke-width="2.77" stroke-linejoin="round"/><path d="M560,213.5 L1090,505.0 M530,233.0 L1060,524.5" fill="none" stroke="#7a1012" stroke-width="4.16" stroke-linejoin="round" stroke-linecap="butt" stroke-dasharray="6,5"/><polygon points="919,348 925,325 953,311 1156,431 1156,491 1119,497 919,371" fill="#b9bcc6" stroke="#1e1e1e" stroke-width="3.47" stroke-linejoin="round"/><polygon points="925,325 953,311 1156,431 1113,451" fill="#e3e4e8" stroke="#1e1e1e" stroke-width="2.77" stroke-linejoin="round"/><polygon points="1113,451 1156,431 1156,491 1119,497" fill="#cfd1d6" stroke="#1e1e1e" stroke-width="2.77" stroke-linejoin="round"/><path d="M968,345 l22,12 v-9 l18,15 l-20,4 v-8 l-20,-11 z M1065,400 l22,12 v-9 l18,15 l-20,4 v-8 l-20,-11 z" fill="#e3e4e8" stroke="#222" stroke-width="2.77" stroke-linejoin="round" stroke-linecap="round"/><path d="M1056,548 L1113,497 L1182,520 L1205,588 L1165,611 L1119,628 L1108,628 z" fill="#74641f" stroke="#1e1e1e" stroke-width="3.47" stroke-linejoin="round" stroke-linecap="round"/><polygon points="1096,565 1153,542 1173,588 1119,611" fill="#c9ccd3" stroke="#1e1e1e" stroke-width="2.77" stroke-linejoin="round"/><path d="M1106,568 l52,24 M1150,548 l-28,58" fill="none" stroke="#333" stroke-width="2.77" stroke-linejoin="round" stroke-linecap="round"/><path d="M1128,508 l40,14 l8,14" fill="none" stroke="#d21f22" stroke-width="9.71" stroke-linejoin="round" stroke-linecap="round"/><path d="M750,470 l15,25 l25,20 l-10,8 l-30,-25 z" fill="#d21f22" stroke="#6a0b0d" stroke-width="2.77" stroke-linejoin="round" stroke-linecap="round"/><ellipse cx="757" cy="478" rx="8" ry="8" fill="#ddd" stroke="#1e1e1e" stroke-width="2.77"/><path d="M988,591 L1028,605 L1119,651 C1140,662 1155,690 1148,708 C1140,718 1132,714 1126,706 L1108,668 L1016,622 z" fill="#2c2c2c" stroke="#1e1e1e" stroke-width="2.77" stroke-linejoin="round" stroke-linecap="round"/><path d="M1156,628 C1165,606 1200,600 1222,611 L1296,668 C1304,690 1298,712 1273,725 C1262,728 1250,724 1240,716 L1165,668 C1152,658 1150,642 1156,628 z" fill="url(#redg)" stroke="#6a0b0d" stroke-width="3.47" stroke-linejoin="round" stroke-linecap="round"/><ellipse cx="1280" cy="696" rx="16" ry="31" fill="#e5413b" stroke="#6a0b0d" stroke-width="2.77" transform="rotate(-28 1280 696)"/><path d="M1190,610 C1208,616 1248,642 1266,660 L1252,668 C1232,652 1198,632 1180,626 z" fill="#2c2c2c"/><path d="M1166,664 C1185,678 1215,698 1242,711 L1238,720 C1215,710 1185,690 1163,674 z" fill="#2c2c2c"/></g><g transform="translate(780,530) scale(0.12048)"><path d="M640,322 L870,272 L990,205 L1022,262 C1050,380 1055,520 1010,700 C960,820 860,900 740,912 C640,915 540,860 440,770 L245,605 C225,580 235,540 330,440 L430,490 L560,520 z" fill="url(#grd)" stroke="#1e1e1e" stroke-width="14.94" stroke-linejoin="round" stroke-linecap="round"/><path d="M870,272 C940,420 930,650 800,850 M905,250 C990,420 980,660 850,880 M740,300 C790,420 730,560 560,620 M880,520 C850,620 700,660 560,600 M330,440 C380,560 500,640 620,640 M280,560 C400,700 600,820 800,800" fill="none" stroke="#2a2a2a" stroke-width="14.94" stroke-linejoin="round" stroke-linecap="round"/><polygon points="875,232 985,200 1005,225 890,280" fill="#c9c9c9" stroke="#1e1e1e" stroke-width="14.94" stroke-linejoin="round"/><path d="M278,212 L350,165 C420,140 500,160 560,190 L640,262 L625,300 L600,290 L610,420 L540,470 L430,490 L345,440 L330,320 z" fill="#a5a19e" stroke="#1e1e1e" stroke-width="11.95" stroke-linejoin="round" stroke-linecap="round"/><ellipse cx="445" cy="318" rx="88" ry="125" fill="#5f5f5f" stroke="#1e1e1e" stroke-width="11.95" transform="rotate(-20 445 318)"/><ellipse cx="440" cy="320" rx="62" ry="95" fill="#9a9a9a" stroke="#1e1e1e" stroke-width="8.96" transform="rotate(-20 440 320)"/><ellipse cx="436" cy="322" rx="30" ry="50" fill="#555" stroke="#1e1e1e" stroke-width="8.96" transform="rotate(-20 436 322)"/><path d="M480,200 L600,285 L585,300 L470,215 z" fill="#e0e0e0" stroke="#1e1e1e" stroke-width="11.95" stroke-linejoin="round" stroke-linecap="round"/><ellipse cx="186" cy="585" rx="40" ry="44" fill="#3a3a3a" stroke="#1e1e1e" stroke-width="11.95"/><path d="M225,560 L330,440" fill="none" stroke="#1e1e1e" stroke-width="14.94" stroke-linejoin="round" stroke-linecap="round"/></g><path d="M453.5,265.1 L420,310.7" stroke="#111" stroke-width="0.9" fill="none"/><circle cx="465.8" cy="248.3" r="20.8" fill="none" stroke="#111" stroke-width="0.9"/><text x="465.80" y="255.00" font-size="18.8" fill="#262626" text-anchor="middle">5</text><path d="M587.3,309.0 L599.8,421" stroke="#111" stroke-width="0.9" fill="none"/><circle cx="585" cy="288.3" r="20.8" fill="none" stroke="#111" stroke-width="0.9"/><text x="585.00" y="295.00" font-size="18.8" fill="#262626" text-anchor="middle">11</text><path d="M398.1,409.8 L508.4,406.9" stroke="#111" stroke-width="0.9" fill="none"/><circle cx="377.3" cy="410.3" r="20.8" fill="none" stroke="#111" stroke-width="0.9"/><text x="377.30" y="417.00" font-size="18.8" fill="#262626" text-anchor="middle">3</text><path d="M893.6,366.1 L685.2,382" stroke="#111" stroke-width="0.9" fill="none"/><circle cx="914.3" cy="364.5" r="20.8" fill="none" stroke="#111" stroke-width="0.9"/><text x="914.30" y="371.20" font-size="18.8" fill="#262626" text-anchor="middle">14</text><path d="M893.9,445.7 L841.2,456.7" stroke="#111" stroke-width="0.9" fill="none"/><path d="M841.2,456.7 L845.8,454.3 L846.4,457.1 z" fill="#111"/><circle cx="914.3" cy="441.5" r="20.8" fill="none" stroke="#111" stroke-width="0.9"/><text x="914.30" y="448.20" font-size="18.8" fill="#262626" text-anchor="middle">10</text><path d="M899.8,524.5 L855.4,555.3" stroke="#111" stroke-width="0.9" fill="none"/><path d="M855.4,555.3 L858.7,551.3 L860.3,553.6 z" fill="#111"/><circle cx="916.9" cy="512.6" r="20.8" fill="none" stroke="#111" stroke-width="0.9"/><text x="916.90" y="519.30" font-size="18.8" fill="#262626" text-anchor="middle">8</text><path d="M936.7,564.5 L901,558.5" stroke="#111" stroke-width="0.9" fill="none"/><path d="M901.0,558.5 L906.2,558.0 L905.7,560.7 z" fill="#111"/><circle cx="957.2" cy="568" r="20.8" fill="none" stroke="#111" stroke-width="0.9"/><text x="957.20" y="574.70" font-size="18.8" fill="#262626" text-anchor="middle">9</text><path d="M461.6,550.0 L575,490.7" stroke="#111" stroke-width="0.9" fill="none"/><path d="M575.0,490.7 L571.2,494.3 L569.9,491.8 z" fill="#111"/><circle cx="443.2" cy="559.6" r="20.8" fill="none" stroke="#111" stroke-width="0.9"/><text x="443.20" y="566.30" font-size="18.8" fill="#262626" text-anchor="middle">12</text><path d="M594.6,547.4 L658.4,501" stroke="#111" stroke-width="0.9" fill="none"/><path d="M658.4,501.0 L655.2,505.1 L653.5,502.8 z" fill="#111"/><circle cx="577.8" cy="559.6" r="20.8" fill="none" stroke="#111" stroke-width="0.9"/><text x="577.80" y="566.30" font-size="18.8" fill="#262626" text-anchor="middle">7</text><path d="M458.3,627.3 L581.2,510.3" stroke="#111" stroke-width="0.9" fill="none"/><path d="M581.2,510.3 L578.5,514.8 L576.6,512.7 z" fill="#111"/><circle cx="443.2" cy="641.6" r="20.8" fill="none" stroke="#111" stroke-width="0.9"/><text x="443.20" y="648.30" font-size="18.8" fill="#262626" text-anchor="middle">13</text><path d="M460.1,712.4 L575,629.3" stroke="#111" stroke-width="0.9" fill="none"/><path d="M575.0,629.3 L571.8,633.4 L570.1,631.1 z" fill="#111"/><circle cx="443.2" cy="724.6" r="20.8" fill="none" stroke="#111" stroke-width="0.9"/><text x="443.20" y="731.30" font-size="18.8" fill="#262626" text-anchor="middle">4</text><path d="M900.9,715.2 L879,733.3" stroke="#111" stroke-width="0.9" fill="none"/><path d="M879.0,733.3 L882.0,729.0 L883.7,731.2 z" fill="#111"/><circle cx="916.9" cy="702" r="20.8" fill="none" stroke="#111" stroke-width="0.9"/><text x="916.90" y="708.70" font-size="18.8" fill="#262626" text-anchor="middle">2</text><path d="M814.3,808.8 L680.5,821.5" stroke="#111" stroke-width="0.9" fill="none"/><circle cx="680.5" cy="821.5" r="1.3" fill="#111"/><circle cx="835" cy="806.8" r="20.8" fill="none" stroke="#111" stroke-width="0.9"/><text x="835.00" y="813.50" font-size="18.8" fill="#262626" text-anchor="middle">1</text><rect x="291.5" y="837.5" width="678.9" height="155.70000000000005" fill="none" stroke="#111" stroke-width="1.2"/><path d="M291.5,863.5 L970.4,863.5" stroke="#111" stroke-width="1.1" fill="none"/><path d="M291.5,888.3 L970.4,888.3" stroke="#111" stroke-width="1.1" fill="none"/><path d="M291.5,923.3 L970.4,923.3" stroke="#111" stroke-width="1.1" fill="none"/><path d="M291.5,958.2 L970.4,958.2" stroke="#111" stroke-width="1.1" fill="none"/><path d="M318.4,863.5 L318.4,993.2" stroke="#111" stroke-width="1.1" fill="none"/><path d="M358.6,863.5 L358.6,993.2" stroke="#111" stroke-width="1.1" fill="none"/><path d="M556.6,863.5 L556.6,993.2" stroke="#111" stroke-width="1.1" fill="none"/><path d="M654.5,863.5 L654.5,993.2" stroke="#111" stroke-width="1.1" fill="none"/><path d="M733.4,863.5 L733.4,993.2" stroke="#111" stroke-width="1.1" fill="none"/><path d="M812.7,863.5 L812.7,993.2" stroke="#111" stroke-width="1.1" fill="none"/><text x="630.33" y="855.00" font-size="7.6" fill="#111" text-anchor="middle" letter-spacing="1.070">3DEXPERIENCE Revision Table</text><text x="305.77" y="874.30" font-size="7.2" fill="#111" text-anchor="middle" letter-spacing="1.934">ZON</text><text x="304.80" y="883.90" font-size="7.2" fill="#111" text-anchor="middle">E</text><text x="338.84" y="879.30" font-size="7.2" fill="#111" text-anchor="middle" letter-spacing="1.089">REV.</text><text x="457.49" y="879.30" font-size="7.2" fill="#111" text-anchor="middle" letter-spacing="1.772">COMMENT</text><text x="604.54" y="879.30" font-size="7.2" fill="#111" text-anchor="middle" letter-spacing="1.072">DESCRIPTION</text><text x="694.26" y="879.30" font-size="7.2" fill="#111" text-anchor="middle" letter-spacing="1.312">CREATION DATE</text><text x="772.82" y="874.30" font-size="7.2" fill="#111" text-anchor="middle" letter-spacing="1.636">MODIFICATION</text><text x="772.54" y="883.90" font-size="7.2" fill="#111" text-anchor="middle" letter-spacing="1.083">DATE</text><text x="891.08" y="879.30" font-size="7.2" fill="#111" text-anchor="middle" letter-spacing="0.758">REVISED BY</text><text x="338.00" y="909.00" font-size="7.4" fill="#111" text-anchor="middle">A</text><text x="693.20" y="909.00" font-size="7.6" fill="#111" text-anchor="middle" letter-spacing="1.396">25/01/2023</text><text x="772.20" y="909.00" font-size="7.6" fill="#111" text-anchor="middle" letter-spacing="1.396">25/01/2023</text><text x="891.80" y="912.60" font-size="13.6" fill="#2e2e33" text-anchor="middle" letter-spacing="-0.405">Ed ENGINEER</text><text x="338.00" y="943.50" font-size="7.4" fill="#111" text-anchor="middle">B</text><text x="456.89" y="943.70" font-size="8.2" fill="#111" text-anchor="middle" letter-spacing="0.979">Version 2</text><text x="693.20" y="943.50" font-size="7.6" fill="#111" text-anchor="middle" letter-spacing="1.396">25/01/2023</text><text x="772.20" y="943.50" font-size="7.6" fill="#111" text-anchor="middle" letter-spacing="1.396">25/01/2023</text><text x="891.80" y="941.80" font-size="13.6" fill="#2e2e33" text-anchor="middle" letter-spacing="-0.405">Ed ENGINEER</text><text x="338.00" y="978.50" font-size="7.4" fill="#111" text-anchor="middle">C</text><text x="456.86" y="978.70" font-size="8.2" fill="#111" text-anchor="middle" letter-spacing="0.911">Version 3- final!</text><text x="693.20" y="978.50" font-size="7.6" fill="#111" text-anchor="middle" letter-spacing="1.396">25/01/2023</text><text x="772.20" y="978.50" font-size="7.6" fill="#111" text-anchor="middle" letter-spacing="1.396">25/01/2023</text><text x="891.80" y="972.80" font-size="13.6" fill="#2e2e33" text-anchor="middle" letter-spacing="-0.405">Ed ENGINEER</text><text x="852.00" y="985.00" font-size="9" fill="#333">´</text><path d="M1040.7,871.2 L1402.6,871.2" stroke="#bdbdbd" stroke-width="3.4" fill="none"/><path d="M1040.7,871.2 L1040.7,983.5" stroke="#bdbdbd" stroke-width="3.4" fill="none"/><path d="M1108.2,871.2 L1108.2,906" stroke="#bdbdbd" stroke-width="3.4" fill="none"/><path d="M1202.7,871.2 L1202.7,949" stroke="#bdbdbd" stroke-width="3.4" fill="none"/><path d="M1239,871.2 L1239,983" stroke="#bdbdbd" stroke-width="3.8" fill="none"/><path d="M1040.7,906.3 L1239,906.3" stroke="#bdbdbd" stroke-width="3.4" fill="none"/><path d="M1239,884.6 L1402.6,884.6" stroke="#bdbdbd" stroke-width="3.4" fill="none"/><path d="M1239,906 L1402.6,906" stroke="#bdbdbd" stroke-width="3.4" fill="none"/><path d="M1343.3,871.2 L1343.3,884.6" stroke="#bdbdbd" stroke-width="3.4" fill="none"/><path d="M1239,949 L1402.6,949" stroke="#bdbdbd" stroke-width="3.4" fill="none"/><path d="M1239,974.9 L1402.6,974.9" stroke="#bdbdbd" stroke-width="3.4" fill="none"/><path d="M1375.7,949 L1375.7,974.9" stroke="#bdbdbd" stroke-width="3.4" fill="none"/><path d="M1375.7,965.8 L1402.6,965.8" stroke="#bdbdbd" stroke-width="2.8" fill="none"/><path d="M1327.6,975 L1327.6,983" stroke="#bdbdbd" stroke-width="3.4" fill="none"/><path d="M1149.7,949 L1239,949" stroke="#bdbdbd" stroke-width="3.4" fill="none"/><path d="M1149.7,974.7 L1239,974.7" stroke="#bdbdbd" stroke-width="3.4" fill="none"/><path d="M1040.7,914.5 L1149.7,914.5" stroke="#bdbdbd" stroke-width="2.6" fill="none"/><path d="M1040.7,923.5 L1149.7,923.5" stroke="#bdbdbd" stroke-width="2.6" fill="none"/><path d="M1040.7,932 L1149.7,932" stroke="#bdbdbd" stroke-width="2.6" fill="none"/><path d="M1040.7,940.5 L1149.7,940.5" stroke="#bdbdbd" stroke-width="2.6" fill="none"/><path d="M1040.7,949 L1149.7,949" stroke="#bdbdbd" stroke-width="2.6" fill="none"/><path d="M1040.7,957.2 L1149.7,957.2" stroke="#bdbdbd" stroke-width="2.6" fill="none"/><path d="M1040.7,966.2 L1149.7,966.2" stroke="#bdbdbd" stroke-width="2.6" fill="none"/><path d="M1040.7,974.7 L1149.7,974.7" stroke="#bdbdbd" stroke-width="2.6" fill="none"/><path d="M1149.7,914.5 L1239,914.5" stroke="#bdbdbd" stroke-width="2.6" fill="none"/><path d="M1149.7,923.5 L1239,923.5" stroke="#bdbdbd" stroke-width="2.6" fill="none"/><path d="M1149.7,932 L1239,932" stroke="#bdbdbd" stroke-width="2.6" fill="none"/><path d="M1149.7,940.5 L1239,940.5" stroke="#bdbdbd" stroke-width="2.6" fill="none"/><path d="M1055.9,906 L1055.9,983" stroke="#bdbdbd" stroke-width="2.8" fill="none"/><path d="M1094.8,906 L1094.8,983" stroke="#bdbdbd" stroke-width="2.8" fill="none"/><path d="M1129.6,906 L1129.6,983" stroke="#bdbdbd" stroke-width="2.8" fill="none"/><path d="M1149.7,906 L1149.7,983" stroke="#bdbdbd" stroke-width="3.2" fill="none"/><path d="M1171,906 L1171,949" stroke="#bdbdbd" stroke-width="2.8" fill="none"/><text x="1321.75" y="926.60" font-size="15.4" fill="#1a1a1a" text-anchor="middle" letter-spacing="0.506">SOLIDWORKS Miter</text><text x="1320.76" y="942.80" font-size="15.4" fill="#1a1a1a" text-anchor="middle" letter-spacing="0.514">Saw</text><text x="1309.54" y="968.80" font-size="16" fill="#1a1a1a" text-anchor="middle" letter-spacing="0.079">2578901DRW</text><text x="1388.00" y="960.60" font-size="6.5" fill="#1a1a1a" text-anchor="middle" font-style="italic">A2</text><text x="1042.00" y="877.50" font-size="3.6" fill="#1a1a1a" font-weight="700">UNLESS OTHERWISE SPECIFIED:</text><text x="1042.00" y="882.70" font-size="3.6" fill="#1a1a1a" font-weight="700">DIMENSIONS ARE IN MILLIMETERS</text><text x="1042.00" y="887.90" font-size="3.6" fill="#1a1a1a" font-weight="700">SURFACE FINISH:</text><text x="1042.00" y="893.00" font-size="3.6" fill="#1a1a1a" font-weight="700">TOLERANCES:</text><text x="1045.00" y="898.00" font-size="3.6" fill="#1a1a1a" font-weight="700">LINEAR:</text><text x="1045.00" y="903.00" font-size="3.6" fill="#1a1a1a" font-weight="700">ANGULAR:</text><text x="1110.00" y="877.50" font-size="3.6" fill="#1a1a1a" font-weight="700">FINISH:</text><text x="1204.50" y="877.50" font-size="3.6" fill="#1a1a1a" font-weight="700">DEBURR AND</text><text x="1204.50" y="882.70" font-size="3.6" fill="#1a1a1a" font-weight="700">BREAK SHARP</text><text x="1204.50" y="887.90" font-size="3.6" fill="#1a1a1a" font-weight="700">EDGES</text><text x="1266.00" y="880.60" font-size="3.6" fill="#1a1a1a" font-weight="700">DO NOT SCALE DRAWING</text><text x="1347.00" y="880.60" font-size="3.6" fill="#1a1a1a" font-weight="700">REVISION</text><text x="1388.00" y="880.60" font-size="3.6" fill="#1a1a1a" font-weight="700">C</text><text x="1069.00" y="912.60" font-size="3.6" fill="#1a1a1a" font-weight="700">NAME</text><text x="1100.00" y="912.60" font-size="3.6" fill="#1a1a1a" font-weight="700">SIGNATURE</text><text x="1135.00" y="912.60" font-size="3.6" fill="#1a1a1a" font-weight="700">DATE</text><text x="1241.00" y="912.20" font-size="3.6" fill="#1a1a1a" font-weight="700">TITLE:</text><text x="1042.00" y="921.50" font-size="3.6" fill="#1a1a1a" font-weight="700">DRAWN</text><text x="1072.00" y="921.50" font-size="3.6" fill="#1a1a1a" font-weight="700">EE</text><text x="1132.50" y="921.50" font-size="3.6" fill="#1a1a1a" font-weight="700">25/01/23</text><text x="1042.00" y="930.30" font-size="3.6" fill="#1a1a1a" font-weight="700">CHK&#x27;D</text><text x="1072.00" y="930.30" font-size="3.6" fill="#1a1a1a" font-weight="700">MV</text><text x="1132.50" y="930.30" font-size="3.6" fill="#1a1a1a" font-weight="700">25/01/23</text><text x="1042.00" y="938.50" font-size="3.6" fill="#1a1a1a" font-weight="700">APPV&#x27;D</text><text x="1072.00" y="938.50" font-size="3.6" fill="#1a1a1a" font-weight="700">EE</text><text x="1132.50" y="938.50" font-size="3.6" fill="#1a1a1a" font-weight="700">25/01/23</text><text x="1042.00" y="947.00" font-size="3.6" fill="#1a1a1a" font-weight="700">MFG</text><text x="1072.00" y="947.00" font-size="3.6" fill="#1a1a1a" font-weight="700">MB</text><text x="1132.50" y="947.00" font-size="3.6" fill="#1a1a1a" font-weight="700">25/01/23</text><text x="1042.00" y="955.30" font-size="3.6" fill="#1a1a1a" font-weight="700">Q.A</text><text x="1072.00" y="955.30" font-size="3.6" fill="#1a1a1a" font-weight="700">EE</text><text x="1132.50" y="955.30" font-size="3.6" fill="#1a1a1a" font-weight="700">25/01/23</text><text x="1152.00" y="954.00" font-size="3.6" fill="#1a1a1a" font-weight="700">MATERIAL:</text><text x="1241.00" y="954.00" font-size="3.6" fill="#1a1a1a" font-weight="700">DWG NO.</text><text x="1152.00" y="981.20" font-size="3.6" fill="#1a1a1a" font-weight="700">WEIGHT:</text><text x="1241.00" y="981.20" font-size="3.6" fill="#1a1a1a" font-weight="700">SCALE:1:1</text><text x="1331.00" y="981.20" font-size="3.6" fill="#1a1a1a" font-weight="700">SHEET 1 OF 1</text><text x="1085.00" y="897.50" font-size="5.4" fill="#1a1a1a" text-anchor="middle" font-style="italic">N/A</text><text x="1155.00" y="892.50" font-size="5.4" fill="#1a1a1a" text-anchor="middle" font-style="italic">N/A</text><text x="1219.00" y="897.50" font-size="5.4" fill="#1a1a1a" text-anchor="middle" font-style="italic">N/A</text><text x="1197.00" y="963.50" font-size="5.4" fill="#1a1a1a" text-anchor="middle" font-style="italic">N/A</text><path d="M1066.5,117 V984 M205,984.5 H1066" stroke="#4b9ee8" stroke-width="1" stroke-dasharray="3,3" fill="none"/></svg>
<!-- right -->
<div class="b" style="left:1451px;top:140px;width:17px;height:905px;background:#f1f1f1;"></div>
<div class="b" style="left:1451px;top:463px;width:17px;height:565px;background:#cdcdcd;"></div>
<svg class="b" style="left:1451px;top:362px;" width="17" height="14" viewBox="0 0 17 14"><path d="M4.5,9.5 l4,-4 l4,4" fill="none" stroke="#444" stroke-width="1.3"/></svg>
<svg class="b" style="left:1451px;top:1029px;" width="17" height="14" viewBox="0 0 17 14"><path d="M4.5,4.5 l4,4 l4,-4" fill="none" stroke="#444" stroke-width="1.3"/></svg>
<div class="b" style="left:1451px;top:118px;width:17px;height:51px;background:#f4f4f6;"></div>
<div class="b" style="left:1468px;top:117px;width:451px;height:944px;background:#ffffff;"></div>
<div class="b" style="left:1472px;top:143px;width:2px;height:914px;background:#ececec;"></div>
<div class="b" style="left:1468px;top:117px;width:451px;height:23px;background:#b5b5b5;border-bottom:1px solid #555;"></div>
<div class="t" style="left:1643.10px;top:120.00px;font-size:12px;line-height:16px;color:#111;letter-spacing:-0.808px;font-weight:700;">3DEXPERIENCE</div>
<svg class="b" style="left:1476px;top:120px;" width="14" height="14" viewBox="0 0 14 14"><path d="M6.5,2 l-4.5,4.5 l4.5,4.5 M11.5,2 l-4.5,4.5 l4.5,4.5" fill="none" stroke="#222" stroke-width="1.5"/></svg>
<svg class="b" style="left:1880px;top:119px;" width="38" height="20" viewBox="0 0 38 20"><g transform="translate(9.5,10)"><polygon points="6.91,-1.12 6.91,1.12 5.18,1.21 4.52,2.81 5.68,4.10 4.10,5.68 2.81,4.52 1.21,5.18 1.12,6.91 -1.12,6.91 -1.21,5.18 -2.81,4.52 -4.10,5.68 -5.68,4.10 -4.52,2.81 -5.18,1.21 -6.91,1.12 -6.91,-1.12 -5.18,-1.21 -4.52,-2.81 -5.68,-4.10 -4.10,-5.68 -2.81,-4.52 -1.21,-5.18 -1.12,-6.91 1.12,-6.91 1.21,-5.18 2.81,-4.52 4.10,-5.68 5.68,-4.10 4.52,-2.81 5.18,-1.21" fill="none" stroke="#222" stroke-width="1.3" stroke-linejoin="round"/><circle r="2.31" fill="none" stroke="#222" stroke-width="1.3"/></g><g transform="translate(29.5,9.5) rotate(40)"><path d="M-3,-7 h6 v2 h-1.2 v4.5 l2.4,2.5 h-8.4 l2.4,-2.5 v-4.5 h-1.2 z" fill="#222"/><path d="M0,2 v6.5" stroke="#222" stroke-width="1.4"/></g></svg>
<div class="b" style="left:1474px;top:143px;width:445px;height:88px;background:#005689;"></div>
<div class="b" style="left:1474px;top:187px;width:445px;height:2px;background:#003f66;"></div>
<div class="b" style="left:1474px;top:189px;width:445px;height:1px;background:#1b6a9b;"></div>
<svg class="b" style="left:1478px;top:147px;" width="40" height="36" viewBox="0 0 40 36"><defs><radialGradient id="cga" cx="0.5" cy="0.35" r="0.75"><stop offset="0" stop-color="#2b7fb5"/><stop offset="0.55" stop-color="#12517f"/><stop offset="1" stop-color="#0a3355"/></radialGradient></defs><circle cx="18.2" cy="18" r="15.3" fill="url(#cga)"/><path d="M6.265999999999998,12.186 a13.005,13.005 0 0 1 23.868000000000002,0 a18.36,13.770000000000001 0 0 0 -23.868000000000002,0 z" fill="#8fb9d6" opacity="0.75"/><circle cx="18.2" cy="18" r="6.426" fill="#1c6aa0" opacity="0.8"/><path d="M15.598999999999998,13.869 l6.732,4.131 l-6.732,4.131 z" fill="none" stroke="#e8f2f8" stroke-width="1.07" stroke-linejoin="round"/><circle cx="18.2" cy="7.595999999999998" r="1.377" fill="#e8f2f8"/><circle cx="18.2" cy="28.404000000000003" r="1.377" fill="#e8f2f8"/><circle cx="7.795999999999998" cy="18" r="1.377" fill="#e8f2f8"/><circle cx="28.604" cy="18" r="1.377" fill="#e8f2f8"/></svg>
<div class="t" style="left:1526.20px;top:153.60px;font-size:17.5px;line-height:22px;color:#edf3f7;letter-spacing:-0.844px;">MySession - WhatsNew Collab ...</div>
<svg class="b" style="left:1768px;top:158px;" width="18" height="14" viewBox="0 0 18 14"><path d="M2.5,3.5 l6.5,6.5 l6.5,-6.5" fill="none" stroke="#fff" stroke-width="2.2"/></svg>
<svg class="b" style="left:1797px;top:153px;" width="26" height="26" viewBox="0 0 26 26"><circle cx="10.5" cy="10" r="6.8" fill="none" stroke="#3d9be9" stroke-width="2"/><path d="M15.5,15 l6,6.2" stroke="#3d9be9" stroke-width="2.6" stroke-linecap="round"/></svg>
<svg class="b" style="left:1841px;top:153px;" width="26" height="26" viewBox="0 0 26 26"><path d="M3,3.5 h8.5 l10,10 l-8,8 l-10.5,-10.5 z" fill="none" stroke="#fff" stroke-width="2" stroke-linejoin="round"/><circle cx="7.8" cy="8" r="1.7" fill="none" stroke="#fff" stroke-width="1.4"/></svg>
<svg class="b" style="left:1888px;top:155px;" width="20" height="20" viewBox="0 0 20 20"><path d="M1,2.6 h17 M1,9.6 h17 M1,16.6 h17" stroke="#fff" stroke-width="3"/></svg>
<div class="b" style="left:1489px;top:195px;width:416px;height:30px;background:#fff;border-radius:4px;"></div>
<div class="t" style="left:1500.00px;top:200.00px;font-size:15px;line-height:19px;color:#b4b8bd;letter-spacing:-0.621px;">Search</div>
<svg class="b" style="left:1830px;top:198px;" width="60" height="24" viewBox="0 0 60 24"><circle cx="9.5" cy="9.5" r="6" fill="none" stroke="#8b9096" stroke-width="1.6"/><path d="M14,14 l5.5,5.8" stroke="#8b9096" stroke-width="2.2" stroke-linecap="round"/><path d="M44,10 l5,4.6 l5,-4.6" fill="none" stroke="#6b7076" stroke-width="1.5"/></svg>
<div class="b" style="left:1474px;top:231px;width:445px;height:31px;background:#f3f4f5;border-bottom:1px solid #e4e4e4;"></div>
<div class="b" style="left:1675px;top:233px;width:1px;height:28px;background:#e3e5e7;"></div>
<div class="b" style="left:1735px;top:233px;width:1px;height:28px;background:#e3e5e7;"></div>
<div class="b" style="left:1775px;top:233px;width:1px;height:28px;background:#e3e5e7;"></div>
<div class="b" style="left:1815px;top:233px;width:1px;height:28px;background:#e3e5e7;"></div>
<div class="b" style="left:1851px;top:233px;width:1px;height:28px;background:#e3e5e7;"></div>
<div class="t" style="left:1481.20px;top:237.80px;font-size:14.6px;line-height:18px;color:#4f555c;letter-spacing:-0.392px;">Component Name</div>
<div class="t" style="left:1680.80px;top:237.80px;font-size:14.6px;line-height:18px;color:#4f555c;letter-spacing:-0.348px;">Status</div>
<div class="t" style="left:1780.80px;top:237.80px;font-size:14.6px;line-height:18px;color:#4f555c;letter-spacing:-0.388px;">Rev</div>
<div class="t" style="left:1820.50px;top:237.80px;font-size:14.6px;line-height:18px;color:#4f555c;letter-spacing:-0.045px;">Is...</div>
<div class="t" style="left:1856.80px;top:237.80px;font-size:14.6px;line-height:18px;color:#4f555c;letter-spacing:-0.372px;">Maturity S</div>
<div class="b" style="left:1476px;top:288px;width:443px;height:1px;background:#e9eaeb;"></div>
<div class="b" style="left:1489px;top:270px;width:14px;height:14px;background:#fff;border:1px solid #c8c8c8;border-radius:2px;"></div>
<div class="b" style="left:1493px;top:276px;width:6px;height:1.4px;background:#333;"></div>
<div class="t" style="left:1546.20px;top:267.30px;font-size:14.8px;line-height:18px;color:#2b2f33;letter-spacing:-0.900px;">_MITER SAW(4-H...</div>
<div class="t" style="left:1790.26px;top:267.30px;font-size:14.8px;line-height:18px;color:#2b2f33;">C</div>
<div class="t" style="left:1856.80px;top:267.30px;font-size:14.8px;line-height:18px;color:#2b2f33;letter-spacing:-0.900px;">Frozen</div>
<div class="b" style="left:1476px;top:314px;width:443px;height:1px;background:#e9eaeb;"></div>
<div class="b" style="left:1514px;top:296px;width:14px;height:14px;background:#fff;border:1px solid #c8c8c8;border-radius:2px;"></div>
<div class="b" style="left:1518px;top:302px;width:6px;height:1.4px;background:#333;"></div>
<div class="t" style="left:1571.20px;top:293.30px;font-size:14.8px;line-height:18px;color:#2b2f33;letter-spacing:-0.900px;">_MITER SAW</div>
<div class="t" style="left:1790.66px;top:293.30px;font-size:14.8px;line-height:18px;color:#2b2f33;">A</div>
<div class="t" style="left:1856.80px;top:293.30px;font-size:14.8px;line-height:18px;color:#2b2f33;letter-spacing:-0.900px;">In Work</div>
<div class="b" style="left:1476px;top:340px;width:443px;height:1px;background:#e9eaeb;"></div>
<div class="t" style="left:1595.80px;top:319.30px;font-size:14.8px;line-height:18px;color:#2b2f33;letter-spacing:-0.900px;">PEDESTA...</div>
<div class="t" style="left:1790.66px;top:319.30px;font-size:14.8px;line-height:18px;color:#2b2f33;">A</div>
<div class="t" style="left:1856.80px;top:319.30px;font-size:14.8px;line-height:18px;color:#2b2f33;letter-spacing:-0.900px;">In Work</div>
<div class="b" style="left:1476px;top:366px;width:443px;height:1px;background:#e9eaeb;"></div>
<div class="t" style="left:1595.80px;top:345.30px;font-size:14.8px;line-height:18px;color:#2b2f33;letter-spacing:-0.900px;">LOWER B...</div>
<div class="t" style="left:1790.66px;top:345.30px;font-size:14.8px;line-height:18px;color:#2b2f33;">A</div>
<div class="t" style="left:1856.80px;top:345.30px;font-size:14.8px;line-height:18px;color:#2b2f33;letter-spacing:-0.900px;">In Work</div>
<div class="b" style="left:1476px;top:392px;width:443px;height:1px;background:#e9eaeb;"></div>
<div class="t" style="left:1595.80px;top:371.30px;font-size:14.8px;line-height:18px;color:#2b2f33;letter-spacing:-0.900px;">TABLE&lt;1&gt;</div>
<div class="t" style="left:1790.66px;top:371.30px;font-size:14.8px;line-height:18px;color:#2b2f33;">A</div>
<div class="t" style="left:1856.80px;top:371.30px;font-size:14.8px;line-height:18px;color:#2b2f33;letter-spacing:-0.900px;">In Work</div>
<div class="b" style="left:1476px;top:418px;width:443px;height:1px;background:#e9eaeb;"></div>
<div class="t" style="left:1595.80px;top:397.30px;font-size:14.8px;line-height:18px;color:#2b2f33;letter-spacing:-0.816px;">FENCE A...</div>
<div class="t" style="left:1790.66px;top:397.30px;font-size:14.8px;line-height:18px;color:#2b2f33;">A</div>
<div class="t" style="left:1856.80px;top:397.30px;font-size:14.8px;line-height:18px;color:#2b2f33;letter-spacing:-0.900px;">In Work</div>
<div class="b" style="left:1476px;top:444px;width:443px;height:1px;background:#e9eaeb;"></div>
<div class="t" style="left:1595.80px;top:423.30px;font-size:14.8px;line-height:18px;color:#2b2f33;letter-spacing:-0.798px;">LINEAR B...</div>
<div class="t" style="left:1790.66px;top:423.30px;font-size:14.8px;line-height:18px;color:#2b2f33;">A</div>
<div class="t" style="left:1856.80px;top:423.30px;font-size:14.8px;line-height:18px;color:#2b2f33;letter-spacing:-0.900px;">In Work</div>
<div class="b" style="left:1476px;top:470px;width:443px;height:1px;background:#e9eaeb;"></div>
<div class="t" style="left:1595.80px;top:449.30px;font-size:14.8px;line-height:18px;color:#2b2f33;letter-spacing:-0.868px;">HEAD YO...</div>
<div class="t" style="left:1790.66px;top:449.30px;font-size:14.8px;line-height:18px;color:#2b2f33;">A</div>
<div class="t" style="left:1856.80px;top:449.30px;font-size:14.8px;line-height:18px;color:#2b2f33;letter-spacing:-0.900px;">In Work</div>
<div class="b" style="left:1476px;top:496px;width:443px;height:1px;background:#e9eaeb;"></div>
<div class="t" style="left:1595.80px;top:475.30px;font-size:14.8px;line-height:18px;color:#2b2f33;letter-spacing:-0.900px;">LOWER B...</div>
<div class="t" style="left:1790.66px;top:475.30px;font-size:14.8px;line-height:18px;color:#2b2f33;">A</div>
<div class="t" style="left:1856.80px;top:475.30px;font-size:14.8px;line-height:18px;color:#2b2f33;letter-spacing:-0.900px;">In Work</div>
<div class="b" style="left:1476px;top:522px;width:443px;height:1px;background:#e9eaeb;"></div>
<div class="t" style="left:1595.80px;top:501.30px;font-size:14.8px;line-height:18px;color:#2b2f33;letter-spacing:-0.900px;">BLADE&lt;1&gt;</div>
<div class="t" style="left:1790.66px;top:501.30px;font-size:14.8px;line-height:18px;color:#2b2f33;">A</div>
<div class="t" style="left:1856.80px;top:501.30px;font-size:14.8px;line-height:18px;color:#2b2f33;letter-spacing:-0.900px;">In Work</div>
<div class="b" style="left:1476px;top:548px;width:443px;height:1px;background:#e9eaeb;"></div>
<div class="t" style="left:1595.80px;top:527.30px;font-size:14.8px;line-height:18px;color:#2b2f33;letter-spacing:-0.900px;">BASE&lt;1&gt;</div>
<div class="t" style="left:1790.66px;top:527.30px;font-size:14.8px;line-height:18px;color:#2b2f33;">A</div>
<div class="t" style="left:1856.80px;top:527.30px;font-size:14.8px;line-height:18px;color:#2b2f33;letter-spacing:-0.900px;">In Work</div>
<div class="b" style="left:1476px;top:574px;width:443px;height:1px;background:#e9eaeb;"></div>
<div class="t" style="left:1595.80px;top:553.30px;font-size:14.8px;line-height:18px;color:#2b2f33;letter-spacing:-0.678px;">Micro Adj ...</div>
<div class="b" style="left:1476px;top:600px;width:443px;height:1px;background:#e9eaeb;"></div>
<div class="t" style="left:1595.80px;top:579.30px;font-size:14.8px;line-height:18px;color:#2b2f33;letter-spacing:-0.774px;">LINK - GU...</div>
<div class="t" style="left:1790.66px;top:579.30px;font-size:14.8px;line-height:18px;color:#2b2f33;">A</div>
<div class="t" style="left:1856.80px;top:579.30px;font-size:14.8px;line-height:18px;color:#2b2f33;letter-spacing:-0.900px;">In Work</div>
<div class="b" style="left:1476px;top:626px;width:443px;height:1px;background:#e9eaeb;"></div>
<div class="t" style="left:1595.80px;top:605.30px;font-size:14.8px;line-height:18px;color:#2b2f33;letter-spacing:-0.749px;">SHAFT - ...</div>
<div class="t" style="left:1790.66px;top:605.30px;font-size:14.8px;line-height:18px;color:#2b2f33;">A</div>
<div class="t" style="left:1856.80px;top:605.30px;font-size:14.8px;line-height:18px;color:#2b2f33;letter-spacing:-0.900px;">In Work</div>
<div class="b" style="left:1476px;top:652px;width:443px;height:1px;background:#e9eaeb;"></div>
<div class="t" style="left:1595.80px;top:631.30px;font-size:14.8px;line-height:18px;color:#2b2f33;letter-spacing:-0.769px;">SPRING - ...</div>
<div class="t" style="left:1790.66px;top:631.30px;font-size:14.8px;line-height:18px;color:#2b2f33;">A</div>
<div class="t" style="left:1856.80px;top:631.30px;font-size:14.8px;line-height:18px;color:#2b2f33;letter-spacing:-0.900px;">In Work</div>
<svg class="b" style="left:0px;top:0px;" width="1919" height="1079" viewBox="0 0 1919 1079"><g transform="translate(1514,265.6)"><rect x="0.7" y="0.7" width="20.6" height="20.6" rx="1.5" fill="#f2f2f2" stroke="#3a3a3a" stroke-width="1.4"/><path d="M3.5,3.6 h8 v3 h-8z M13.5,3.6 h4.5 v3 h-4.5z M3.5,9.6 h4 v3.4 h3 v-3.4 h3.4 v8 h-10.4 z" fill="#3f8fc0" stroke="#17506f" stroke-width="0.8"/><path d="M16,10 h2.6 v8 h-2.6 z" fill="#9aa3ad" stroke="#444" stroke-width="0.7"/></g><g transform="translate(1696.4,265.0)"><path d="M1,4 v13.5 a6.6,3 0 0 0 13.2,0 v-13.5 z" fill="#b9b9b9"/><ellipse cx="7.6" cy="4" rx="6.6" ry="3" fill="#c9c9c9"/><path d="M1,8.6 a6.6,3 0 0 0 13.2,0 M1,13.2 a6.6,3 0 0 0 13.2,0" fill="none" stroke="#fff" stroke-width="1.2"/><path d="M7.2,16.2 l4,4 l8.2,-8.4" fill="none" stroke="#fff" stroke-width="4.6"/><path d="M7.2,16.2 l4,4 l8.2,-8.4" fill="none" stroke="#57b847" stroke-width="2.5"/></g><g transform="translate(1744,263.4)"><circle cx="17" cy="6.5" r="5.6" fill="#57b847"/><circle cx="18.8" cy="4.8" r="1.7" fill="#fff"/><path d="M13,9.5 l-12,10 l1.8,1.8 l3,-2.4 l1.6,1.8 l2,-1.7 l-1.6,-1.8 l2.2,-1.8 l1.6,1.8 l2,-1.7 l-1.5,-1.8 l3.5,-2.8 z" fill="#57b847"/></g><path d="M1820.6,274.9 l4,4 l8,-8.4" fill="none" stroke="#57b847" stroke-width="2.3"/><g transform="translate(1540,291.0)"><path d="M5,3 h8 l3,3 v8 h-11 z" fill="#fff" stroke="#555" stroke-width="1.2"/><path d="M1.5,11 l4.6,-2.6 l4,1.4 v3 l4.6,1.6 v5 l-5,2.6 l-8.2,-3.2 z" fill="#e9e9e9" stroke="#444" stroke-width="1.2" stroke-linejoin="round"/><path d="M1.5,11 l4.2,1.5 l4.4,-2.6 M5.7,12.5 v3.6 l4,1.6 l5,-2.8 M9.7,17.7 v4.2" fill="none" stroke="#444" stroke-width="0.9"/></g><g transform="translate(1696.4,291.0)"><path d="M1,4 v13.5 a6.6,3 0 0 0 13.2,0 v-13.5 z" fill="#b9b9b9"/><ellipse cx="7.6" cy="4" rx="6.6" ry="3" fill="#c9c9c9"/><path d="M1,8.6 a6.6,3 0 0 0 13.2,0 M1,13.2 a6.6,3 0 0 0 13.2,0" fill="none" stroke="#fff" stroke-width="1.2"/><path d="M7.2,16.2 l4,4 l8.2,-8.4" fill="none" stroke="#fff" stroke-width="4.6"/><path d="M7.2,16.2 l4,4 l8.2,-8.4" fill="none" stroke="#57b847" stroke-width="2.5"/></g><g transform="translate(1747.6,289.0)"><path d="M9.2,10.5 v-4.4 a4.2,4.2 0 0 1 8.4,0 v1.6" fill="none" stroke="#bdbdbd" stroke-width="2.2"/><rect x="0.5" y="10" width="14" height="11" rx="1" fill="#bdbdbd"/><path d="M7.5,13.5 v4" stroke="#fff" stroke-width="2.2"/></g><path d="M1820.6,300.9 l4,4 l8,-8.4" fill="none" stroke="#57b847" stroke-width="2.3"/><path d="M1546.5,313.9 v26 M1546.5,327.4 h7.5" stroke="#cfcfcf" stroke-width="1" fill="none"/><g transform="translate(1563,316.0)"><path d="M2,5 l8.5,-3.6 l9,2.6 v12 l-8.6,4.6 l-8.9,-3.8 z" fill="#f3f3f3" stroke="#444" stroke-width="1.3" stroke-linejoin="round"/><path d="M5.2,7 l5.6,-2.4 l6,1.8 v6.6 l-5.8,3 l-5.8,-2.6 z" fill="#3f8fc0" stroke="#17506f" stroke-width="0.8" stroke-linejoin="round"/><path d="M5.2,7 l5.8,2.2 l5.8,-2.8 M11,9.2 v6.8" fill="none" stroke="#17506f" stroke-width="0.8"/><path d="M5.2,7 l5.6,-2.4 l6,1.8 l-5.8,2.8 z" fill="#8cc4e4"/><path d="M10.8,9.4 v3.2 l3,1.4 v3" stroke="#d9edf7" stroke-width="0.9" fill="none"/></g><g transform="translate(1696.4,317.0)"><path d="M1,4 v13.5 a6.6,3 0 0 0 13.2,0 v-13.5 z" fill="#b9b9b9"/><ellipse cx="7.6" cy="4" rx="6.6" ry="3" fill="#c9c9c9"/><path d="M1,8.6 a6.6,3 0 0 0 13.2,0 M1,13.2 a6.6,3 0 0 0 13.2,0" fill="none" stroke="#fff" stroke-width="1.2"/><path d="M7.2,16.2 l4,4 l8.2,-8.4" fill="none" stroke="#fff" stroke-width="4.6"/><path d="M7.2,16.2 l4,4 l8.2,-8.4" fill="none" stroke="#57b847" stroke-width="2.5"/></g><g transform="translate(1747.6,315.0)"><path d="M9.2,10.5 v-4.4 a4.2,4.2 0 0 1 8.4,0 v1.6" fill="none" stroke="#bdbdbd" stroke-width="2.2"/><rect x="0.5" y="10" width="14" height="11" rx="1" fill="#bdbdbd"/><path d="M7.5,13.5 v4" stroke="#fff" stroke-width="2.2"/></g><path d="M1820.6,326.9 l4,4 l8,-8.4" fill="none" stroke="#57b847" stroke-width="2.3"/><path d="M1546.5,339.9 v26 M1546.5,353.4 h7.5" stroke="#cfcfcf" stroke-width="1" fill="none"/><g transform="translate(1563,342.0)"><path d="M2,5 l8.5,-3.6 l9,2.6 v12 l-8.6,4.6 l-8.9,-3.8 z" fill="#f3f3f3" stroke="#444" stroke-width="1.3" stroke-linejoin="round"/><path d="M5.2,7 l5.6,-2.4 l6,1.8 v6.6 l-5.8,3 l-5.8,-2.6 z" fill="#3f8fc0" stroke="#17506f" stroke-width="0.8" stroke-linejoin="round"/><path d="M5.2,7 l5.8,2.2 l5.8,-2.8 M11,9.2 v6.8" fill="none" stroke="#17506f" stroke-width="0.8"/><path d="M5.2,7 l5.6,-2.4 l6,1.8 l-5.8,2.8 z" fill="#8cc4e4"/><path d="M10.8,9.4 v3.2 l3,1.4 v3" stroke="#d9edf7" stroke-width="0.9" fill="none"/></g><g transform="translate(1696.4,343.0)"><path d="M1,4 v13.5 a6.6,3 0 0 0 13.2,0 v-13.5 z" fill="#b9b9b9"/><ellipse cx="7.6" cy="4" rx="6.6" ry="3" fill="#c9c9c9"/><path d="M1,8.6 a6.6,3 0 0 0 13.2,0 M1,13.2 a6.6,3 0 0 0 13.2,0" fill="none" stroke="#fff" stroke-width="1.2"/><path d="M7.2,16.2 l4,4 l8.2,-8.4" fill="none" stroke="#fff" stroke-width="4.6"/><path d="M7.2,16.2 l4,4 l8.2,-8.4" fill="none" stroke="#57b847" stroke-width="2.5"/></g><g transform="translate(1747.6,341.0)"><path d="M9.2,10.5 v-4.4 a4.2,4.2 0 0 1 8.4,0 v1.6" fill="none" stroke="#bdbdbd" stroke-width="2.2"/><rect x="0.5" y="10" width="14" height="11" rx="1" fill="#bdbdbd"/><path d="M7.5,13.5 v4" stroke="#fff" stroke-width="2.2"/></g><path d="M1820.6,352.9 l4,4 l8,-8.4" fill="none" stroke="#57b847" stroke-width="2.3"/><path d="M1546.5,365.9 v26 M1546.5,379.4 h7.5" stroke="#cfcfcf" stroke-width="1" fill="none"/><g transform="translate(1563,368.0)"><path d="M2,5 l8.5,-3.6 l9,2.6 v12 l-8.6,4.6 l-8.9,-3.8 z" fill="#f3f3f3" stroke="#444" stroke-width="1.3" stroke-linejoin="round"/><path d="M5.2,7 l5.6,-2.4 l6,1.8 v6.6 l-5.8,3 l-5.8,-2.6 z" fill="#3f8fc0" stroke="#17506f" stroke-width="0.8" stroke-linejoin="round"/><path d="M5.2,7 l5.8,2.2 l5.8,-2.8 M11,9.2 v6.8" fill="none" stroke="#17506f" stroke-width="0.8"/><path d="M5.2,7 l5.6,-2.4 l6,1.8 l-5.8,2.8 z" fill="#8cc4e4"/><path d="M10.8,9.4 v3.2 l3,1.4 v3" stroke="#d9edf7" stroke-width="0.9" fill="none"/></g><g transform="translate(1696.4,369.0)"><path d="M1,4 v13.5 a6.6,3 0 0 0 13.2,0 v-13.5 z" fill="#b9b9b9"/><ellipse cx="7.6" cy="4" rx="6.6" ry="3" fill="#c9c9c9"/><path d="M1,8.6 a6.6,3 0 0 0 13.2,0 M1,13.2 a6.6,3 0 0 0 13.2,0" fill="none" stroke="#fff" stroke-width="1.2"/><path d="M7.2,16.2 l4,4 l8.2,-8.4" fill="none" stroke="#fff" stroke-width="4.6"/><path d="M7.2,16.2 l4,4 l8.2,-8.4" fill="none" stroke="#57b847" stroke-width="2.5"/></g><g transform="translate(1747.6,367.0)"><path d="M9.2,10.5 v-4.4 a4.2,4.2 0 0 1 8.4,0 v1.6" fill="none" stroke="#bdbdbd" stroke-width="2.2"/><rect x="0.5" y="10" width="14" height="11" rx="1" fill="#bdbdbd"/><path d="M7.5,13.5 v4" stroke="#fff" stroke-width="2.2"/></g><path d="M1820.6,378.9 l4,4 l8,-8.4" fill="none" stroke="#57b847" stroke-width="2.3"/><path d="M1546.5,391.9 v26 M1546.5,405.4 h7.5" stroke="#cfcfcf" stroke-width="1" fill="none"/><g transform="translate(1563,394.0)"><path d="M2,5 l8.5,-3.6 l9,2.6 v12 l-8.6,4.6 l-8.9,-3.8 z" fill="#f3f3f3" stroke="#444" stroke-width="1.3" stroke-linejoin="round"/><path d="M5.2,7 l5.6,-2.4 l6,1.8 v6.6 l-5.8,3 l-5.8,-2.6 z" fill="#3f8fc0" stroke="#17506f" stroke-width="0.8" stroke-linejoin="round"/><path d="M5.2,7 l5.8,2.2 l5.8,-2.8 M11,9.2 v6.8" fill="none" stroke="#17506f" stroke-width="0.8"/><path d="M5.2,7 l5.6,-2.4 l6,1.8 l-5.8,2.8 z" fill="#8cc4e4"/><path d="M10.8,9.4 v3.2 l3,1.4 v3" stroke="#d9edf7" stroke-width="0.9" fill="none"/></g><g transform="translate(1696.4,395.0)"><path d="M1,4 v13.5 a6.6,3 0 0 0 13.2,0 v-13.5 z" fill="#b9b9b9"/><ellipse cx="7.6" cy="4" rx="6.6" ry="3" fill="#c9c9c9"/><path d="M1,8.6 a6.6,3 0 0 0 13.2,0 M1,13.2 a6.6,3 0 0 0 13.2,0" fill="none" stroke="#fff" stroke-width="1.2"/><path d="M7.2,16.2 l4,4 l8.2,-8.4" fill="none" stroke="#fff" stroke-width="4.6"/><path d="M7.2,16.2 l4,4 l8.2,-8.4" fill="none" stroke="#57b847" stroke-width="2.5"/></g><g transform="translate(1747.6,393.0)"><path d="M9.2,10.5 v-4.4 a4.2,4.2 0 0 1 8.4,0 v1.6" fill="none" stroke="#bdbdbd" stroke-width="2.2"/><rect x="0.5" y="10" width="14" height="11" rx="1" fill="#bdbdbd"/><path d="M7.5,13.5 v4" stroke="#fff" stroke-width="2.2"/></g><path d="M1820.6,404.9 l4,4 l8,-8.4" fill="none" stroke="#57b847" stroke-width="2.3"/><path d="M1546.5,417.9 v26 M1546.5,431.4 h7.5" stroke="#cfcfcf" stroke-width="1" fill="none"/><g transform="translate(1563,420.0)"><path d="M2,5 l8.5,-3.6 l9,2.6 v12 l-8.6,4.6 l-8.9,-3.8 z" fill="#f3f3f3" stroke="#444" stroke-width="1.3" stroke-linejoin="round"/><path d="M5.2,7 l5.6,-2.4 l6,1.8 v6.6 l-5.8,3 l-5.8,-2.6 z" fill="#3f8fc0" stroke="#17506f" stroke-width="0.8" stroke-linejoin="round"/><path d="M5.2,7 l5.8,2.2 l5.8,-2.8 M11,9.2 v6.8" fill="none" stroke="#17506f" stroke-width="0.8"/><path d="M5.2,7 l5.6,-2.4 l6,1.8 l-5.8,2.8 z" fill="#8cc4e4"/><path d="M10.8,9.4 v3.2 l3,1.4 v3" stroke="#d9edf7" stroke-width="0.9" fill="none"/></g><g transform="translate(1696.4,421.0)"><path d="M1,4 v13.5 a6.6,3 0 0 0 13.2,0 v-13.5 z" fill="#b9b9b9"/><ellipse cx="7.6" cy="4" rx="6.6" ry="3" fill="#c9c9c9"/><path d="M1,8.6 a6.6,3 0 0 0 13.2,0 M1,13.2 a6.6,3 0 0 0 13.2,0" fill="none" stroke="#fff" stroke-width="1.2"/><path d="M7.2,16.2 l4,4 l8.2,-8.4" fill="none" stroke="#fff" stroke-width="4.6"/><path d="M7.2,16.2 l4,4 l8.2,-8.4" fill="none" stroke="#57b847" stroke-width="2.5"/></g><g transform="translate(1747.6,419.0)"><path d="M9.2,10.5 v-4.4 a4.2,4.2 0 0 1 8.4,0 v1.6" fill="none" stroke="#bdbdbd" stroke-width="2.2"/><rect x="0.5" y="10" width="14" height="11" rx="1" fill="#bdbdbd"/><path d="M7.5,13.5 v4" stroke="#fff" stroke-width="2.2"/></g><path d="M1820.6,430.9 l4,4 l8,-8.4" fill="none" stroke="#57b847" stroke-width="2.3"/><path d="M1546.5,443.9 v26 M1546.5,457.4 h7.5" stroke="#cfcfcf" stroke-width="1" fill="none"/><g transform="translate(1563,446.0)"><path d="M2,5 l8.5,-3.6 l9,2.6 v12 l-8.6,4.6 l-8.9,-3.8 z" fill="#f3f3f3" stroke="#444" stroke-width="1.3" stroke-linejoin="round"/><path d="M5.2,7 l5.6,-2.4 l6,1.8 v6.6 l-5.8,3 l-5.8,-2.6 z" fill="#3f8fc0" stroke="#17506f" stroke-width="0.8" stroke-linejoin="round"/><path d="M5.2,7 l5.8,2.2 l5.8,-2.8 M11,9.2 v6.8" fill="none" stroke="#17506f" stroke-width="0.8"/><path d="M5.2,7 l5.6,-2.4 l6,1.8 l-5.8,2.8 z" fill="#8cc4e4"/><path d="M10.8,9.4 v3.2 l3,1.4 v3" stroke="#d9edf7" stroke-width="0.9" fill="none"/></g><g transform="translate(1696.4,447.0)"><path d="M1,4 v13.5 a6.6,3 0 0 0 13.2,0 v-13.5 z" fill="#b9b9b9"/><ellipse cx="7.6" cy="4" rx="6.6" ry="3" fill="#c9c9c9"/><path d="M1,8.6 a6.6,3 0 0 0 13.2,0 M1,13.2 a6.6,3 0 0 0 13.2,0" fill="none" stroke="#fff" stroke-width="1.2"/><path d="M7.2,16.2 l4,4 l8.2,-8.4" fill="none" stroke="#fff" stroke-width="4.6"/><path d="M7.2,16.2 l4,4 l8.2,-8.4" fill="none" stroke="#57b847" stroke-width="2.5"/></g><g transform="translate(1747.6,445.0)"><path d="M9.2,10.5 v-4.4 a4.2,4.2 0 0 1 8.4,0 v1.6" fill="none" stroke="#bdbdbd" stroke-width="2.2"/><rect x="0.5" y="10" width="14" height="11" rx="1" fill="#bdbdbd"/><path d="M7.5,13.5 v4" stroke="#fff" stroke-width="2.2"/></g><path d="M1820.6,456.9 l4,4 l8,-8.4" fill="none" stroke="#57b847" stroke-width="2.3"/><path d="M1546.5,469.9 v26 M1546.5,483.4 h7.5" stroke="#cfcfcf" stroke-width="1" fill="none"/><g transform="translate(1563,472.0)"><path d="M2,5 l8.5,-3.6 l9,2.6 v12 l-8.6,4.6 l-8.9,-3.8 z" fill="#f3f3f3" stroke="#444" stroke-width="1.3" stroke-linejoin="round"/><path d="M5.2,7 l5.6,-2.4 l6,1.8 v6.6 l-5.8,3 l-5.8,-2.6 z" fill="#3f8fc0" stroke="#17506f" stroke-width="0.8" stroke-linejoin="round"/><path d="M5.2,7 l5.8,2.2 l5.8,-2.8 M11,9.2 v6.8" fill="none" stroke="#17506f" stroke-width="0.8"/><path d="M5.2,7 l5.6,-2.4 l6,1.8 l-5.8,2.8 z" fill="#8cc4e4"/><path d="M10.8,9.4 v3.2 l3,1.4 v3" stroke="#d9edf7" stroke-width="0.9" fill="none"/></g><g transform="translate(1696.4,473.0)"><path d="M1,4 v13.5 a6.6,3 0 0 0 13.2,0 v-13.5 z" fill="#b9b9b9"/><ellipse cx="7.6" cy="4" rx="6.6" ry="3" fill="#c9c9c9"/><path d="M1,8.6 a6.6,3 0 0 0 13.2,0 M1,13.2 a6.6,3 0 0 0 13.2,0" fill="none" stroke="#fff" stroke-width="1.2"/><path d="M7.2,16.2 l4,4 l8.2,-8.4" fill="none" stroke="#fff" stroke-width="4.6"/><path d="M7.2,16.2 l4,4 l8.2,-8.4" fill="none" stroke="#57b847" stroke-width="2.5"/></g><g transform="translate(1747.6,471.0)"><path d="M9.2,10.5 v-4.4 a4.2,4.2 0 0 1 8.4,0 v1.6" fill="none" stroke="#bdbdbd" stroke-width="2.2"/><rect x="0.5" y="10" width="14" height="11" rx="1" fill="#bdbdbd"/><path d="M7.5,13.5 v4" stroke="#fff" stroke-width="2.2"/></g><path d="M1820.6,482.9 l4,4 l8,-8.4" fill="none" stroke="#57b847" stroke-width="2.3"/><path d="M1546.5,495.9 v26 M1546.5,509.4 h7.5" stroke="#cfcfcf" stroke-width="1" fill="none"/><g transform="translate(1563,497.0)"><path d="M3,6 l5,-3.4 l5,1.6 v6 l6,2 v6.6 l-6.4,3.6 l-9.6,-4 z" fill="#2e7fb2" stroke="#17506f" stroke-width="1" stroke-linejoin="round"/><path d="M3,6 l5,1.8 l5,-3.6 M8,7.8 v5.8 l5,2 l6,-3.4 M13,15.6 v6.6" fill="none" stroke="#17506f" stroke-width="0.9"/><path d="M3,6 l5,-3.4 l5,1.6 l-5,3.6 z" fill="#7bb9dc"/><path d="M8,13.6 l5,-3.4 l6,2 l-6,3.4 z" fill="#7bb9dc"/></g><g transform="translate(1696.4,499.0)"><path d="M1,4 v13.5 a6.6,3 0 0 0 13.2,0 v-13.5 z" fill="#b9b9b9"/><ellipse cx="7.6" cy="4" rx="6.6" ry="3" fill="#c9c9c9"/><path d="M1,8.6 a6.6,3 0 0 0 13.2,0 M1,13.2 a6.6,3 0 0 0 13.2,0" fill="none" stroke="#fff" stroke-width="1.2"/><path d="M7.2,16.2 l4,4 l8.2,-8.4" fill="none" stroke="#fff" stroke-width="4.6"/><path d="M7.2,16.2 l4,4 l8.2,-8.4" fill="none" stroke="#57b847" stroke-width="2.5"/></g><g transform="translate(1747.6,497.0)"><path d="M9.2,10.5 v-4.4 a4.2,4.2 0 0 1 8.4,0 v1.6" fill="none" stroke="#bdbdbd" stroke-width="2.2"/><rect x="0.5" y="10" width="14" height="11" rx="1" fill="#bdbdbd"/><path d="M7.5,13.5 v4" stroke="#fff" stroke-width="2.2"/></g><path d="M1820.6,508.9 l4,4 l8,-8.4" fill="none" stroke="#57b847" stroke-width="2.3"/><path d="M1546.5,521.9 v26 M1546.5,535.4 h7.5" stroke="#cfcfcf" stroke-width="1" fill="none"/><g transform="translate(1563,524.0)"><path d="M2,5 l8.5,-3.6 l9,2.6 v12 l-8.6,4.6 l-8.9,-3.8 z" fill="#f3f3f3" stroke="#444" stroke-width="1.3" stroke-linejoin="round"/><path d="M5.2,7 l5.6,-2.4 l6,1.8 v6.6 l-5.8,3 l-5.8,-2.6 z" fill="#3f8fc0" stroke="#17506f" stroke-width="0.8" stroke-linejoin="round"/><path d="M5.2,7 l5.8,2.2 l5.8,-2.8 M11,9.2 v6.8" fill="none" stroke="#17506f" stroke-width="0.8"/><path d="M5.2,7 l5.6,-2.4 l6,1.8 l-5.8,2.8 z" fill="#8cc4e4"/><path d="M10.8,9.4 v3.2 l3,1.4 v3" stroke="#d9edf7" stroke-width="0.9" fill="none"/></g><g transform="translate(1696.4,525.0)"><path d="M1,4 v13.5 a6.6,3 0 0 0 13.2,0 v-13.5 z" fill="#b9b9b9"/><ellipse cx="7.6" cy="4" rx="6.6" ry="3" fill="#c9c9c9"/><path d="M1,8.6 a6.6,3 0 0 0 13.2,0 M1,13.2 a6.6,3 0 0 0 13.2,0" fill="none" stroke="#fff" stroke-width="1.2"/><path d="M7.2,16.2 l4,4 l8.2,-8.4" fill="none" stroke="#fff" stroke-width="4.6"/><path d="M7.2,16.2 l4,4 l8.2,-8.4" fill="none" stroke="#57b847" stroke-width="2.5"/></g><g transform="translate(1747.6,523.0)"><path d="M9.2,10.5 v-4.4 a4.2,4.2 0 0 1 8.4,0 v1.6" fill="none" stroke="#bdbdbd" stroke-width="2.2"/><rect x="0.5" y="10" width="14" height="11" rx="1" fill="#bdbdbd"/><path d="M7.5,13.5 v4" stroke="#fff" stroke-width="2.2"/></g><path d="M1820.6,534.9 l4,4 l8,-8.4" fill="none" stroke="#57b847" stroke-width="2.3"/><path d="M1546.5,547.9 v26 M1546.5,561.4 h7.5" stroke="#cfcfcf" stroke-width="1" fill="none"/><g transform="translate(1563,549.0)"><path d="M3,6 l5,-3.4 l5,1.6 v6 l6,2 v6.6 l-6.4,3.6 l-9.6,-4 z" fill="#2e7fb2" stroke="#17506f" stroke-width="1" stroke-linejoin="round"/><path d="M3,6 l5,1.8 l5,-3.6 M8,7.8 v5.8 l5,2 l6,-3.4 M13,15.6 v6.6" fill="none" stroke="#17506f" stroke-width="0.9"/><path d="M3,6 l5,-3.4 l5,1.6 l-5,3.6 z" fill="#7bb9dc"/><path d="M8,13.6 l5,-3.4 l6,2 l-6,3.4 z" fill="#7bb9dc"/></g><g transform="translate(1696.4,551.0)"><path d="M1,4 v13.5 a6.6,3 0 0 0 13.2,0 v-13.5 z" fill="#b9b9b9"/><ellipse cx="7.6" cy="4" rx="6.6" ry="3" fill="#c9c9c9"/><path d="M1,8.6 a6.6,3 0 0 0 13.2,0 M1,13.2 a6.6,3 0 0 0 13.2,0" fill="none" stroke="#fff" stroke-width="1.2"/><path d="M7.2,16.2 l4,4 l8.2,-8.4" fill="none" stroke="#fff" stroke-width="4.6"/><path d="M7.2,16.2 l4,4 l8.2,-8.4" fill="none" stroke="#57b847" stroke-width="2.5"/></g><g transform="translate(1747.6,549.0)"><path d="M9.2,10.5 v-4.4 a4.2,4.2 0 0 1 8.4,0 v1.6" fill="none" stroke="#bdbdbd" stroke-width="2.2"/><rect x="0.5" y="10" width="14" height="11" rx="1" fill="#bdbdbd"/><path d="M7.5,13.5 v4" stroke="#fff" stroke-width="2.2"/></g><path d="M1820.6,560.9 l4,4 l8,-8.4" fill="none" stroke="#57b847" stroke-width="2.3"/><path d="M1546.5,573.9 v26 M1546.5,587.4 h7.5" stroke="#cfcfcf" stroke-width="1" fill="none"/><g transform="translate(1563,576.0)"><path d="M2,5 l8.5,-3.6 l9,2.6 v12 l-8.6,4.6 l-8.9,-3.8 z" fill="#f3f3f3" stroke="#444" stroke-width="1.3" stroke-linejoin="round"/><path d="M5.2,7 l5.6,-2.4 l6,1.8 v6.6 l-5.8,3 l-5.8,-2.6 z" fill="#3f8fc0" stroke="#17506f" stroke-width="0.8" stroke-linejoin="round"/><path d="M5.2,7 l5.8,2.2 l5.8,-2.8 M11,9.2 v6.8" fill="none" stroke="#17506f" stroke-width="0.8"/><path d="M5.2,7 l5.6,-2.4 l6,1.8 l-5.8,2.8 z" fill="#8cc4e4"/><path d="M10.8,9.4 v3.2 l3,1.4 v3" stroke="#d9edf7" stroke-width="0.9" fill="none"/></g><g transform="translate(1696.4,577.0)"><path d="M1,4 v13.5 a6.6,3 0 0 0 13.2,0 v-13.5 z" fill="#b9b9b9"/><ellipse cx="7.6" cy="4" rx="6.6" ry="3" fill="#c9c9c9"/><path d="M1,8.6 a6.6,3 0 0 0 13.2,0 M1,13.2 a6.6,3 0 0 0 13.2,0" fill="none" stroke="#fff" stroke-width="1.2"/><path d="M7.2,16.2 l4,4 l8.2,-8.4" fill="none" stroke="#fff" stroke-width="4.6"/><path d="M7.2,16.2 l4,4 l8.2,-8.4" fill="none" stroke="#57b847" stroke-width="2.5"/></g><g transform="translate(1747.6,575.0)"><path d="M9.2,10.5 v-4.4 a4.2,4.2 0 0 1 8.4,0 v1.6" fill="none" stroke="#bdbdbd" stroke-width="2.2"/><rect x="0.5" y="10" width="14" height="11" rx="1" fill="#bdbdbd"/><path d="M7.5,13.5 v4" stroke="#fff" stroke-width="2.2"/></g><path d="M1820.6,586.9 l4,4 l8,-8.4" fill="none" stroke="#57b847" stroke-width="2.3"/><path d="M1546.5,599.9 v26 M1546.5,613.4 h7.5" stroke="#cfcfcf" stroke-width="1" fill="none"/><g transform="translate(1563,601.0)"><path d="M3,6 l5,-3.4 l5,1.6 v6 l6,2 v6.6 l-6.4,3.6 l-9.6,-4 z" fill="#2e7fb2" stroke="#17506f" stroke-width="1" stroke-linejoin="round"/><path d="M3,6 l5,1.8 l5,-3.6 M8,7.8 v5.8 l5,2 l6,-3.4 M13,15.6 v6.6" fill="none" stroke="#17506f" stroke-width="0.9"/><path d="M3,6 l5,-3.4 l5,1.6 l-5,3.6 z" fill="#7bb9dc"/><path d="M8,13.6 l5,-3.4 l6,2 l-6,3.4 z" fill="#7bb9dc"/></g><g transform="translate(1696.4,603.0)"><path d="M1,4 v13.5 a6.6,3 0 0 0 13.2,0 v-13.5 z" fill="#b9b9b9"/><ellipse cx="7.6" cy="4" rx="6.6" ry="3" fill="#c9c9c9"/><path d="M1,8.6 a6.6,3 0 0 0 13.2,0 M1,13.2 a6.6,3 0 0 0 13.2,0" fill="none" stroke="#fff" stroke-width="1.2"/><path d="M7.2,16.2 l4,4 l8.2,-8.4" fill="none" stroke="#fff" stroke-width="4.6"/><path d="M7.2,16.2 l4,4 l8.2,-8.4" fill="none" stroke="#57b847" stroke-width="2.5"/></g><g transform="translate(1747.6,601.0)"><path d="M9.2,10.5 v-4.4 a4.2,4.2 0 0 1 8.4,0 v1.6" fill="none" stroke="#bdbdbd" stroke-width="2.2"/><rect x="0.5" y="10" width="14" height="11" rx="1" fill="#bdbdbd"/><path d="M7.5,13.5 v4" stroke="#fff" stroke-width="2.2"/></g><path d="M1820.6,612.9 l4,4 l8,-8.4" fill="none" stroke="#57b847" stroke-width="2.3"/><path d="M1546.5,625.9 v13.5 M1546.5,639.4 h7.5" stroke="#cfcfcf" stroke-width="1" fill="none"/><g transform="translate(1563,627.0)"><path d="M3,6 l5,-3.4 l5,1.6 v6 l6,2 v6.6 l-6.4,3.6 l-9.6,-4 z" fill="#2e7fb2" stroke="#17506f" stroke-width="1" stroke-linejoin="round"/><path d="M3,6 l5,1.8 l5,-3.6 M8,7.8 v5.8 l5,2 l6,-3.4 M13,15.6 v6.6" fill="none" stroke="#17506f" stroke-width="0.9"/><path d="M3,6 l5,-3.4 l5,1.6 l-5,3.6 z" fill="#7bb9dc"/><path d="M8,13.6 l5,-3.4 l6,2 l-6,3.4 z" fill="#7bb9dc"/></g><g transform="translate(1696.4,629.0)"><path d="M1,4 v13.5 a6.6,3 0 0 0 13.2,0 v-13.5 z" fill="#b9b9b9"/><ellipse cx="7.6" cy="4" rx="6.6" ry="3" fill="#c9c9c9"/><path d="M1,8.6 a6.6,3 0 0 0 13.2,0 M1,13.2 a6.6,3 0 0 0 13.2,0" fill="none" stroke="#fff" stroke-width="1.2"/><path d="M7.2,16.2 l4,4 l8.2,-8.4" fill="none" stroke="#fff" stroke-width="4.6"/><path d="M7.2,16.2 l4,4 l8.2,-8.4" fill="none" stroke="#57b847" stroke-width="2.5"/></g><g transform="translate(1747.6,627.0)"><path d="M9.2,10.5 v-4.4 a4.2,4.2 0 0 1 8.4,0 v1.6" fill="none" stroke="#bdbdbd" stroke-width="2.2"/><rect x="0.5" y="10" width="14" height="11" rx="1" fill="#bdbdbd"/><path d="M7.5,13.5 v4" stroke="#fff" stroke-width="2.2"/></g><path d="M1820.6,638.9 l4,4 l8,-8.4" fill="none" stroke="#57b847" stroke-width="2.3"/></svg>
<div class="b" style="left:1481px;top:907px;width:42px;height:42px;background:#fff;border-radius:50%;box-shadow:0 0 4px rgba(0,0,0,0.28);"></div>
<svg class="b" style="left:1486px;top:915px;" width="32" height="26" viewBox="0 0 32 26"><path d="M3,19 c-0.5,-8 3,-14 11,-14.5 c7,-0.3 10,4 11.5,10 l4,3.2 c-8,2.4 -18,3 -26.5,1.3 z" fill="#fafafa" stroke="#2a2a2a" stroke-width="1.2" stroke-linejoin="round"/><path d="M3,19 c8,1.4 16,1 22.5,-4.5" fill="none" stroke="#2a2a2a" stroke-width="1"/><circle cx="10" cy="11.5" r="0.8" fill="#333"/><circle cx="13" cy="11.2" r="0.8" fill="#333"/><circle cx="16" cy="11.2" r="0.8" fill="#333"/></svg>
<div class="b" style="left:1476px;top:1040px;width:443px;height:16px;background:#f4f4f4;"></div>
<div class="b" style="left:1493px;top:1041px;width:10px;height:14px;background:#c9c9c9;"></div>
<svg class="b" style="left:1478px;top:1040px;" width="12" height="16" viewBox="0 0 12 16"><path d="M8.5,4.5 v7 l-4.5,-3.5 z" fill="#b9b9b9"/></svg>
<svg class="b" style="left:1906px;top:1040px;" width="12" height="16" viewBox="0 0 12 16"><path d="M4,4.2 v7.6 l5,-3.8 z" fill="#333"/></svg>
<div class="b" style="left:1503px;top:984px;width:365px;height:24px;background:#e3e5e7;border:1px solid #c6c8ca;border-bottom:1px solid #b6b8ba;box-shadow:0 0 3px rgba(0,0,0,0.25);"></div>
<div class="b" style="left:1504px;top:985px;width:66px;height:22px;background:#a5cbe6;"></div>
<div class="t" style="left:1514.20px;top:986.80px;font-size:13px;line-height:17px;color:#3f6f99;letter-spacing:-0.475px;">Lifecycle</div>
<div class="t" style="left:1580.80px;top:986.80px;font-size:13px;line-height:17px;color:#5b6168;letter-spacing:-0.470px;">Collaboration</div>
<div class="t" style="left:1671.80px;top:986.80px;font-size:13px;line-height:17px;color:#5b6168;letter-spacing:-0.540px;">Simulation</div>
<div class="t" style="left:1757.50px;top:986.80px;font-size:13px;line-height:17px;color:#5b6168;letter-spacing:-0.611px;">View</div>
<div class="t" style="left:1821.20px;top:986.80px;font-size:13px;line-height:17px;color:#5b6168;letter-spacing:-0.570px;">Tools</div>
<svg class="b" style="left:1870px;top:986px;" width="22" height="18" viewBox="0 0 22 18"><path d="M2.5,7 c0,-4.5 6,-5 8.5,-1 c2.5,-4 8.5,-3.500 8.500,1" fill="none" stroke="#8d9196" stroke-width="1.3"/><path d="M3.500,7.500 l7.500,7 l7.500,-7" fill="none" stroke="#8d9196" stroke-width="1.7"/></svg>
<div class="b" style="left:1503px;top:1008px;width:389px;height:48px;background:#e3e5e6;border:1px solid #c9cbcd;box-shadow:0 0 4px rgba(0,0,0,0.3);"></div>
<div class="b" style="left:1504px;top:1009px;width:65px;height:46px;background:#ffffff;"></div>
<div class="b" style="left:1568.5px;top:1009px;width:1.2px;height:46px;background:#8f9294;"></div>
<div class="b" style="left:1552px;top:1015px;width:1px;height:34px;background:#e4e4e4;"></div>
<div class="b" style="left:1649.5px;top:1015px;width:1px;height:34px;background:#d4d6d8;"></div>
<svg class="b" style="left:0px;top:0px;" width="1919" height="1079" viewBox="0 0 1919 1079"><path d="M1522,1022.5 v9 a6.5,3.500 0 0 0 13,0 v-9 z" fill="#d9d9d9" stroke="#555" stroke-width="1"/><ellipse cx="1528.5" cy="1022.5" rx="6.5" ry="3.500" fill="#f4f4f4" stroke="#555" stroke-width="1"/><path d="M1522,1025.5 a6.5,3.500 0 0 0 13,0 M1522,1028.5 a6.5,3.500 0 0 0 13,0" fill="none" stroke="#555" stroke-width="0.9"/><path d="M1528,1026.5 v9 a6.5,3.500 0 0 0 13,0 v-9 z" fill="#d9d9d9" stroke="#555" stroke-width="1"/><ellipse cx="1534.5" cy="1026.5" rx="6.5" ry="3.500" fill="#f4f4f4" stroke="#555" stroke-width="1"/><path d="M1528,1029.5 a6.5,3.500 0 0 0 13,0 M1528,1032.5 a6.5,3.500 0 0 0 13,0" fill="none" stroke="#555" stroke-width="0.9"/><path d="M1535,1030.5 v11 a7.0,3.500 0 0 0 14,0 v-11 z" fill="#dedede" stroke="#555" stroke-width="1"/><ellipse cx="1542.0" cy="1030.5" rx="7.0" ry="3.500" fill="#f4f4f4" stroke="#555" stroke-width="1"/><path d="M1535,1034.2 a7.0,3.500 0 0 0 14,0 M1535,1037.8 a7.0,3.500 0 0 0 14,0" fill="none" stroke="#555" stroke-width="0.9"/><path d="M1541,1046 v-8 h-3.600 l6.800,-8 l6.800,8 h-3.600 v8 z" fill="#2d7fb6" stroke="#fff" stroke-width="1"/><path d="M1554.200,1031.500 h6.600 l-3.300,4 z" fill="#111"/><path d="M1577,1023.5 v18 a9.5,3.500 0 0 0 19,0 v-18 z" fill="#d2d4d6" stroke="#a9acaf" stroke-width="1"/><ellipse cx="1586.5" cy="1023.5" rx="9.5" ry="3.500" fill="#f4f4f4" stroke="#a9acaf" stroke-width="1"/><path d="M1577,1029.5 a9.5,3.500 0 0 0 19,0 M1577,1035.5 a9.5,3.500 0 0 0 19,0" fill="none" stroke="#a9acaf" stroke-width="0.9"/><path d="M1592,1041 a6.500,6.500 0 1 1 9,2.500" fill="none" stroke="#a9acaf" stroke-width="3"/><path d="M1604.500,1039 l-1,6 l-5,-3.500 z" fill="#a9acaf"/><circle cx="1636" cy="1034" r="6.600" fill="none" stroke="#a9acaf" stroke-width="3"/><path d="M1640.500,1039.500 l6,6.500" stroke="#a9acaf" stroke-width="3.400" stroke-linecap="round"/><path d="M1620,1032 h8 c4,0 5,-8 10,-8 h5" fill="none" stroke="#a9acaf" stroke-width="2.8"/><path d="M1641,1019.500 l6,4.500 l-6,4.500 z" fill="#a9acaf"/><path d="M1651.300,1031.500 h6.600 l-3.300,4 z" fill="#111"/><path d="M1675,1029 a12.500,12.500 0 0 1 23,-2 M1699,1037 a12.500,12.500 0 0 1 -23,2" fill="none" stroke="#a9acaf" stroke-width="2.5"/><path d="M1700.500,1022 l-0.500,6.500 l-6,-2.500 z M1673.500,1044 l0.500,-6.500 l6,2.500 z" fill="#a9acaf"/><path d="M1673,1029.500 h5 l2.500,3.500 l-2.500,3.500 h-5 l2.500,-3.500 z M1681,1029.500 h5 l2.500,3.500 l-2.500,3.500 h-5 l2.500,-3.500 z M1689,1029.500 h6 l2.500,3.500 l-2.500,3.500 h-6 l2.500,-3.500 z" fill="none" stroke="#a9acaf" stroke-width="1.400"/><path d="M1717.500,1024 v20 M1717.500,1040 c0,-6 6,-4 6,-8" fill="none" stroke="#a9acaf" stroke-width="3"/><circle cx="1717.500" cy="1022" r="2.600" fill="#e3e5e6" stroke="#a9acaf" stroke-width="2.5"/><circle cx="1717.500" cy="1045" r="2.600" fill="#e3e5e6" stroke="#a9acaf" stroke-width="2.5"/><circle cx="1724" cy="1030.500" r="2.300" fill="#e3e5e6" stroke="#a9acaf" stroke-width="2.5"/><path d="M1729,1022.500 h13.500 M1731,1030.500 h11.500 M1727,1038 h15.500 M1727,1045 h15.500" stroke="#a9acaf" stroke-width="3"/><path d="M1760,1024 v20" stroke="#a9acaf" stroke-width="3"/><circle cx="1760" cy="1022" r="2.600" fill="#e3e5e6" stroke="#a9acaf" stroke-width="2.5"/><circle cx="1760" cy="1045" r="2.600" fill="#e3e5e6" stroke="#a9acaf" stroke-width="2.5"/><path d="M1770.500,1039.500 h13 M1777,1033 v13" stroke="#a9acaf" stroke-width="4.200"/><path d="M1803,1024 v20 M1818,1024 v20 M1803,1034 h15" stroke="#a9acaf" stroke-width="3" fill="none"/><circle cx="1803" cy="1022" r="2.600" fill="#e3e5e6" stroke="#a9acaf" stroke-width="2.5"/><circle cx="1803" cy="1045" r="2.600" fill="#e3e5e6" stroke="#a9acaf" stroke-width="2.5"/><circle cx="1818" cy="1045" r="2.600" fill="#e3e5e6" stroke="#a9acaf" stroke-width="2.5"/><path d="M1815,1026 h13 M1821.500,1019.500 v13" stroke="#a9acaf" stroke-width="4.200"/><path d="M1844,1024 v20 M1859,1024 v10 M1844,1034 h15" stroke="#a9acaf" stroke-width="3" fill="none"/><circle cx="1844" cy="1022" r="2.600" fill="#e3e5e6" stroke="#a9acaf" stroke-width="2.5"/><circle cx="1844" cy="1045" r="2.600" fill="#e3e5e6" stroke="#a9acaf" stroke-width="2.5"/><circle cx="1859" cy="1022" r="2.600" fill="#e3e5e6" stroke="#a9acaf" stroke-width="2.5"/><path d="M1856,1041.500 h13 M1862.500,1035 v13" stroke="#a9acaf" stroke-width="4.200"/></svg>
<div class="b" style="left:1468px;top:1055px;width:451px;height:3px;background:linear-gradient(#ffffff,#9aa3ad);"></div>
<div class="b" style="left:1467px;top:1058px;width:452px;height:2px;background:#1f4a70;"></div>
<div class="b" style="left:1467px;top:117px;width:1px;height:943px;background:#8f8f8f;"></div>
<div class="b" style="left:1441px;top:168px;width:27px;height:193px;background:#e4e4e4;border:1px solid #8f8f8f;border-right:none;"></div>
<div class="b" style="left:1442px;top:169px;width:27px;height:22px;background:#f7f7f7;"></div>
<div class="b" style="left:1442px;top:191px;width:26px;height:1px;background:#9f9f9f;"></div>
<div class="b" style="left:1442px;top:215px;width:26px;height:1px;background:#9f9f9f;"></div>
<div class="b" style="left:1442px;top:239px;width:26px;height:1px;background:#9f9f9f;"></div>
<div class="b" style="left:1442px;top:263px;width:26px;height:1px;background:#9f9f9f;"></div>
<div class="b" style="left:1442px;top:287px;width:26px;height:1px;background:#9f9f9f;"></div>
<div class="b" style="left:1442px;top:311px;width:26px;height:1px;background:#9f9f9f;"></div>
<div class="b" style="left:1442px;top:335px;width:26px;height:1px;background:#9f9f9f;"></div>
<div class="b" style="left:1467px;top:191px;width:1px;height:170px;background:#8f8f8f;"></div>
<svg class="b" style="left:0px;top:0px;" width="1919" height="1079" viewBox="0 0 1919 1079"><defs><radialGradient id="cgb" cx="0.5" cy="0.35" r="0.75"><stop offset="0" stop-color="#2b7fb5"/><stop offset="0.55" stop-color="#12517f"/><stop offset="1" stop-color="#0a3355"/></radialGradient></defs><circle cx="1454.5" cy="180" r="9.6" fill="url(#cgb)"/><path d="M1447.012,176.352 a8.16,8.16 0 0 1 14.975999999999999,0 a11.52,8.64 0 0 0 -14.975999999999999,0 z" fill="#8fb9d6" opacity="0.75"/><circle cx="1454.5" cy="180" r="4.032" fill="#1c6aa0" opacity="0.8"/><path d="M1452.868,177.408 l4.224,2.592 l-4.224,2.592 z" fill="none" stroke="#e8f2f8" stroke-width="0.80" stroke-linejoin="round"/><circle cx="1454.5" cy="173.472" r="0.864" fill="#e8f2f8"/><circle cx="1454.5" cy="186.528" r="0.864" fill="#e8f2f8"/><circle cx="1447.972" cy="180" r="0.864" fill="#e8f2f8"/><circle cx="1461.028" cy="180" r="0.864" fill="#e8f2f8"/><path d="M1446,205 l8.500,-8 l8.500,8" fill="none" stroke="#1f5f8b" stroke-width="2"/><path d="M1448.500,204.500 v8 h12 v-8" fill="#fff" stroke="#222" stroke-width="1.300"/><path d="M1452.500,212.500 v-5 h4 v5" fill="none" stroke="#222" stroke-width="1.100"/><path d="M1447.500,222.500 l4,-3 l3,1.500 l3,-2.500 l4,3 v11.500 l-3.500,3 l-3.500,-1.500 l-3,2.500 l-4,-3 z" fill="#fff" stroke="#222" stroke-width="1.200" stroke-linejoin="round"/><path d="M1451.500,225.500 v11.500 M1454.500,221 v14 M1458,224.500 v12" stroke="#222" stroke-width="1.100"/><path d="M1446,260 v-14 h6 l1.500,2 h8 v2.500" fill="#fff" stroke="#222" stroke-width="1.300" stroke-linejoin="round"/><path d="M1446,260 l3.500,-9.500 h14.500 l-4,9.500 z" fill="#fff" stroke="#222" stroke-width="1.300" stroke-linejoin="round"/><g transform="translate(1446,268.5) scale(0.96)"><rect x="0.6" y="0.6" width="16.8" height="14.8" rx="1" fill="#fff" stroke="#444" stroke-width="1.2"/><path d="M2.5,3 h8 v3.2 h-2.2 v3 h4 v3.3 h-9.8 v-3.3 h2.4 v-3 h-2.4 z" fill="#f2c12e" stroke="#8a6500" stroke-width="0.9"/><rect x="12.3" y="2.6" width="3" height="3" fill="#fff" stroke="#444" stroke-width="0.9"/><rect x="13.6" y="7.6" width="2.2" height="6" fill="#9aa3ad" stroke="#555" stroke-width="0.7"/></g><circle cx="1454.500" cy="299" r="8.200" fill="#3a78c2"/><path d="M1454.500,299 l-7.500,-3.500 a8.200,8.200 0 0 1 13,-3.200 z" fill="#d63a2f"/><path d="M1454.500,299 l5.500,-6.700 a8.200,8.200 0 0 1 1.500,11.500 z" fill="#58b04a"/><path d="M1454.500,299 l7,4.800 a8.200,8.200 0 0 1 -12,1.800 z" fill="#f0c230"/><ellipse cx="1452.500" cy="295" rx="4" ry="2.500" fill="#fff" opacity="0.450"/><rect x="1446" y="315.500" width="17" height="16" fill="#fff" stroke="#222" stroke-width="1.200"/><rect x="1446" y="315.500" width="17" height="3" fill="#4a97c6" stroke="#222" stroke-width="1"/><path d="M1448.500,322 h3 M1448.500,325.500 h3 M1448.500,329 h3" stroke="#2f7fb3" stroke-width="1.800"/><path d="M1453,322 h8 M1453,325.500 h8 M1453,329 h8" stroke="#333" stroke-width="1.200"/><rect x="1445.500" y="339.500" width="14" height="10" fill="#fff" stroke="#222" stroke-width="1.200"/><path d="M1447.500,342.500 h10 M1447.500,345.500 h7" stroke="#2f7fb3" stroke-width="1.400"/><path d="M1448,353 h8 M1452,349.500 v3.500" stroke="#222" stroke-width="1.200"/><path d="M1454,350 l3,-2.500 l3.500,1 l3,2 v4 l-3.500,2.500 l-6,-2.500 z" fill="#f2c12e" stroke="#8a6500" stroke-width="0.900" stroke-linejoin="round"/><rect x="1459" y="350.500" width="3.500" height="3.500" fill="#5aa6d4" stroke="#1d5f8e" stroke-width="0.700"/></svg>
<!-- bottom -->
<div class="b" style="left:1px;top:1045px;width:1449px;height:16px;background:#f4f4f4;"></div>
<div class="b" style="left:1px;top:1044px;width:1467px;height:1px;background:#bdbdbd;"></div>
<div class="b" style="left:1.0px;top:1045px;width:15.8px;height:16px;background:#bcbcbc;border:1px solid #a9a9a9;border-top:1px solid #444;"></div>
<div class="b" style="left:16.8px;top:1045px;width:15.8px;height:16px;background:#bcbcbc;border:1px solid #a9a9a9;border-top:1px solid #444;"></div>
<div class="b" style="left:32.6px;top:1045px;width:15.8px;height:16px;background:#bcbcbc;border:1px solid #a9a9a9;border-top:1px solid #444;"></div>
<div class="b" style="left:48.400000000000006px;top:1045px;width:15.8px;height:16px;background:#bcbcbc;border:1px solid #a9a9a9;border-top:1px solid #444;"></div>
<div class="b" style="left:65px;top:1045px;width:78px;height:16px;background:#fbfbfb;border-right:1px solid #bdbdbd;"></div>
<svg class="b" style="left:0px;top:0px;" width="200" height="1079" viewBox="0 0 200 1079"><path d="M11.5,1049 v8 l-5,-4 z M5.0,1049 v8" fill="#e2e2e2" stroke="#e2e2e2" stroke-width="1"/><path d="M26.5,1049 v8 l-5,-4 z" fill="#e2e2e2"/><path d="M37.0,1049 v8 l5,-4 z" fill="#e2e2e2"/><path d="M52,1049 v8 l5,-4 z M58.5,1049 v8" fill="#e2e2e2" stroke="#e2e2e2" stroke-width="1"/><path d="M78.500,1047.500 h6 l4,3.500 v8.500 h-10 z" fill="#fff" stroke="#222" stroke-width="1.100"/><path d="M84.500,1047.500 v3.500 h4" fill="none" stroke="#222" stroke-width="0.900"/><rect x="145" y="1045.500" width="34" height="15" fill="#cfcfcf" stroke="#b5b5b5"/><path d="M153.500,1050.500 h8.500 l3.500,3 v5 h-12 z" fill="#fff" stroke="#5580a8" stroke-width="1"/><path d="M152,1047 l1,2.500 l2.500,0.500 l-2,1.500 l0.500,2.500 l-2.200,-1.400 l-2.200,1.400 l0.600,-2.500 l-2,-1.500 l2.600,-0.500 z" fill="#f2c12e" stroke="#c58a00" stroke-width="0.500"/></svg>
<div class="t" style="left:92.50px;top:1043.60px;font-size:12.5px;line-height:16px;color:#111;letter-spacing:-0.166px;font-weight:700;">Sheet1</div>
<div class="b" style="left:721px;top:1045px;width:2px;height:16px;background:#333;"></div>
<div class="b" style="left:727px;top:1045px;width:724px;height:16px;background:#f1f1f1;"></div>
<div class="b" style="left:779px;top:1046px;width:656px;height:14px;background:#cdcdcd;"></div>
<svg class="b" style="left:727px;top:1045px;" width="14" height="16" viewBox="0 0 14 16"><path d="M8.500,4 l-4,4 l4,4" fill="none" stroke="#333" stroke-width="1.400"/></svg>
<svg class="b" style="left:1436px;top:1045px;" width="14" height="16" viewBox="0 0 14 16"><path d="M5,4 l4,4 l-4,4" fill="none" stroke="#333" stroke-width="1.400"/></svg>
<div class="b" style="left:1451px;top:1045px;width:17px;height:16px;background:#f1f1f1;"></div>
<div class="b" style="left:1px;top:1060px;width:1918px;height:19px;background:#f6f6f6;border-top:1px solid #9a9a9a;"></div>
<div class="t" style="left:2.50px;top:1063.00px;font-size:12px;line-height:16px;color:#1a1a1a;letter-spacing:-0.577px;">SOLIDWORKS Premium 2023 SP1.0</div>
<div class="t" style="left:1201.00px;top:1063.00px;font-size:12px;line-height:16px;color:#1a1a1a;letter-spacing:-0.212px;">607.65mm</div>
<div class="t" style="left:1277.00px;top:1063.00px;font-size:12px;line-height:16px;color:#1a1a1a;letter-spacing:-0.212px;">136.88mm</div>
<div class="t" style="left:1347.50px;top:1063.00px;font-size:12px;line-height:16px;color:#1a1a1a;letter-spacing:0.278px;">0mm</div>
<div class="t" style="left:1395.50px;top:1063.00px;font-size:12px;line-height:16px;color:#1a1a1a;letter-spacing:-0.145px;">Under Defined</div>
<div class="t" style="left:1489.20px;top:1063.00px;font-size:12px;line-height:16px;color:#1a1a1a;letter-spacing:-0.136px;">Editing Drawing View1</div>
<div class="t" style="left:1645.80px;top:1063.00px;font-size:12px;line-height:16px;color:#1a1a1a;letter-spacing:-0.570px;">1 : 4</div>
<div class="t" style="left:1815.80px;top:1063.00px;font-size:12px;line-height:16px;color:#1a1a1a;letter-spacing:-0.458px;">MMGS</div>
<div class="b" style="left:1719px;top:1064px;width:1px;height:14px;background:#cfcfcf;"></div>
<svg class="b" style="left:1690px;top:1062px;" width="229" height="17" viewBox="0 0 229 17"><path d="M2.500,10.500 h6 l-3,-3.500 z" fill="#222"/><path d="M180.500,10.500 h6 l-3,-3.500 z" fill="#222"/><path d="M36.500,11.500 l5,-9 l5,9 z" fill="#f6c32a" stroke="#7a5a00" stroke-width="0.800"/><path d="M41.500,5.500 v3.200 M41.500,9.600 v1" stroke="#222" stroke-width="1.100"/><path d="M45,8 l4.500,-5.500 l2.500,2 l-1,-4 l-4,1 l1.800,1.500 z" fill="#222"/><path d="M37,16.500 v-2.500 M40,16.500 v-3.500 M43,16.500 v-4.500 M46,16.500 v-5.500 M49,16.500 v-7" stroke="#2f7fb3" stroke-width="1.800"/><path d="M213,7 l9,-5 l8,3.500 v5 l-8,5.500 l-9,-4.500 z" fill="#f3f3f3" stroke="#222" stroke-width="1.100" stroke-linejoin="round"/><path d="M213,7 l9,4 l8,-5.500 M222,11 v5" fill="none" stroke="#222" stroke-width="0.900"/><circle cx="219" cy="7" r="1.500" fill="none" stroke="#222" stroke-width="0.800"/></svg>
</body></html>
